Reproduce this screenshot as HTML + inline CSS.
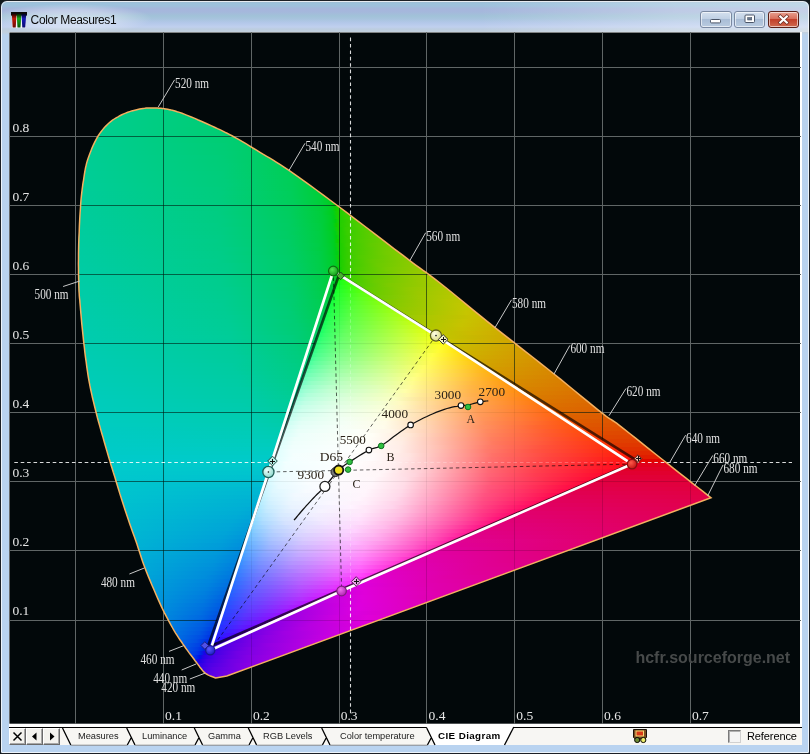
<!DOCTYPE html>
<html><head><meta charset="utf-8"><title>Color Measures1</title>
<style>
html,body{margin:0;padding:0}
#win,.tab,#ref,svg{will-change:transform}
body{width:810px;height:754px;overflow:hidden;position:relative;background:#10181c;font-family:"Liberation Sans",sans-serif}
#win{position:absolute;left:0;top:0;width:808px;height:752px;border:1px solid #1c2026;border-radius:7px 7px 2px 2px;background:linear-gradient(#a0afc3 0,#9cc2dc 2px,#9ec0dc 5px,#a6b6dc 8px,#a5b8dc 11px,#a1c2d8 15px,#a8c4de 18px,#b4c8ea 22px,#c0d0ee 26px,#bccde0 28px,#c2cfdc 31px,#b9d2ee 34px,#b9d3f0 100%);overflow:hidden}
#win:before{content:"";position:absolute;left:0;top:0;right:0;bottom:0;border:1px solid rgba(255,255,255,.75);border-radius:6px 6px 1px 1px}
#title{position:absolute;left:29.6px;top:10px;font-size:12px;line-height:18px;color:#0a0a0a;letter-spacing:-.38px;white-space:nowrap}
#glow{position:absolute;left:-10px;top:3px;width:160px;height:30px;background:radial-gradient(ellipse at center,rgba(255,255,255,.5) 0,rgba(255,255,255,.32) 40%,rgba(255,255,255,0) 72%)}
#rglow{position:absolute;right:0;top:1px;width:330px;height:30px;background:linear-gradient(to right,rgba(255,255,255,0),rgba(255,255,255,.28) 60%,rgba(255,255,255,.36))}
#icon{position:absolute;left:9.5px;top:10.5px;width:16px;height:16px}
.cb{position:absolute;top:9.8px;height:15px;width:29.5px;border:1px solid #7a89a2;border-radius:3px;box-shadow:inset 0 0 0 1px rgba(255,255,255,.6);background:linear-gradient(#d4e0ee 0,#c0d0e4 45%,#a9bdd6 50%,#b9cbe0 100%)}
#bx{background:linear-gradient(#e8a090 0,#d8705c 45%,#c2402a 50%,#d06a50 100%);border-color:#5a2018}
#client{position:absolute;left:9px;top:32px;width:792.5px;height:713px;background:#fff}
#tabbar{position:absolute;left:9px;top:727px;width:792.5px;height:18px;background:#f7f6f3;border-top:1px solid #000;box-sizing:border-box}
.sb{position:absolute;top:727.5px;width:17px;height:17px;box-sizing:border-box;background:#f3f2ee;border:1px solid;border-color:#fff #6a6a6a #6a6a6a #fff;box-shadow:inset -1px -1px 0 #a8a8a8}
.tab{position:absolute;top:730px;font-size:9.25px;line-height:12px;color:#222;white-space:nowrap}
#ref{position:absolute;left:746.5px;top:730px;font-size:11px;line-height:13px;color:#000;letter-spacing:-.1px}
#chk{position:absolute;left:728px;top:729.5px;width:13px;height:13px;background:#f4f4f4;border:1px solid;border-color:#7a7a7a #d0d0d0 #d0d0d0 #7a7a7a;box-sizing:border-box;box-shadow:inset 1px 1px 0 #b0b0b0}
</style></head><body>
<div id="win">
<div id="glow"></div>
<svg id="icon" viewBox="0 0 16 16"><rect x="1" y="2" width="14" height="14" fill="#f4f6fa"/><rect width="16" height="3.6" fill="#0a0a0a"/><defs><linearGradient id="ir" x1="0" y1="0" x2="0" y2="1"><stop offset="0" stop-color="#200"/><stop offset=".35" stop-color="#c01808"/><stop offset="1" stop-color="#6a0a04"/></linearGradient><linearGradient id="ig" x1="0" y1="0" x2="0" y2="1"><stop offset="0" stop-color="#020"/><stop offset=".35" stop-color="#18a818"/><stop offset="1" stop-color="#0a5a0a"/></linearGradient><linearGradient id="ib" x1="0" y1="0" x2="0" y2="1"><stop offset="0" stop-color="#002"/><stop offset=".35" stop-color="#1418b8"/><stop offset="1" stop-color="#080a70"/></linearGradient></defs><path d="M.8 2h4.8l-.9 13.4h-3z" fill="url(#ir)"/><path d="M5.6 2h4.8l-.9 13.4h-3z" fill="url(#ig)"/><path d="M10.4 2h4.8l-.9 13.4h-3z" fill="url(#ib)"/></svg>
<div id="rglow"></div>
<div id="title">Color Measures1</div>
<div class="cb" style="left:699px"><svg width="30" height="16" style="position:absolute;left:0;top:0"><rect x="9.5" y="7.5" width="10" height="3.4" rx="1" fill="#fff" stroke="#4a5568" stroke-width="1"/></svg></div>
<div class="cb" style="left:732.8px"><svg width="30" height="16" style="position:absolute;left:0;top:0"><rect x="10" y="3" width="9.5" height="7.5" rx="1" fill="#fff" stroke="#4a5568" stroke-width="1"/><rect x="12.7" y="5.6" width="4" height="2.4" fill="#6a7a90" stroke="#4a5568" stroke-width=".6"/></svg></div>
<div class="cb" id="bx" style="left:766.8px"><svg width="30" height="16" style="position:absolute;left:0;top:0"><path d="M11.3 4.5l6.5 6M17.8 4.5l-6.5 6" stroke="#6a2a20" stroke-width="3.6" stroke-linecap="square"/><path d="M11.3 4.5l6.5 6M17.8 4.5l-6.5 6" stroke="#fff" stroke-width="2.2" stroke-linecap="square"/></svg></div>
</div>
<div id="client"></div>
<div id="tabbar"></div>
<svg width="792" height="692" viewBox="9 32 792 692" style="position:absolute;left:9px;top:32px;display:block">
<defs>
<clipPath id="cl"><path d="M215.7 678.0 L214.9 677.7 L213.8 677.3 L212.5 676.8 L211.0 676.2 L209.5 675.6 L207.9 674.8 L206.5 674.0 L205.2 673.1 L204.1 672.1 L203.0 671.0 L202.0 669.8 L201.0 668.5 L199.9 667.2 L198.9 665.7 L197.7 664.1 L196.5 662.5 L195.1 660.7 L193.7 658.8 L192.2 656.8 L190.6 654.7 L189.0 652.6 L187.4 650.4 L185.8 648.2 L184.3 646.0 L182.8 643.9 L181.4 641.8 L179.9 639.7 L178.5 637.6 L177.1 635.4 L175.6 633.1 L174.1 630.6 L172.6 628.0 L171.0 625.2 L169.5 622.4 L167.9 619.4 L166.3 616.3 L164.6 613.1 L163.0 609.8 L161.3 606.3 L159.6 602.6 L157.8 598.6 L155.9 594.3 L154.0 589.8 L152.0 585.2 L150.1 580.6 L148.2 576.1 L146.5 571.9 L145.0 568.0 L143.7 564.6 L142.6 561.6 L141.7 558.8 L140.8 556.1 L140.0 553.5 L139.1 550.7 L138.1 547.7 L137.0 544.3 L135.7 540.6 L134.3 536.6 L132.8 532.5 L131.3 528.2 L129.7 523.7 L128.2 519.2 L126.6 514.5 L125.0 509.8 L123.4 504.8 L121.7 499.4 L119.9 493.9 L118.2 488.2 L116.5 482.7 L114.9 477.3 L113.3 472.4 L112.0 468.0 L110.8 464.2 L109.9 461.0 L109.0 458.2 L108.2 455.5 L107.5 453.0 L106.7 450.4 L105.9 447.6 L105.0 444.5 L104.0 441.0 L103.0 437.4 L101.9 433.7 L100.8 429.9 L99.7 425.9 L98.6 422.0 L97.5 418.0 L96.5 414.0 L95.5 410.0 L94.5 406.0 L93.5 401.9 L92.5 397.8 L91.6 393.7 L90.7 389.5 L89.8 385.2 L89.0 380.8 L88.2 376.3 L87.5 371.7 L86.8 366.9 L86.2 362.2 L85.5 357.4 L84.9 352.6 L84.4 347.8 L83.8 343.1 L83.3 338.4 L82.8 333.5 L82.3 328.6 L81.8 323.8 L81.4 319.1 L81.0 314.6 L80.6 310.3 L80.3 306.5 L80.0 303.2 L79.8 300.4 L79.5 298.0 L79.3 295.7 L79.2 293.5 L79.0 291.0 L78.9 288.3 L78.8 285.0 L78.7 281.3 L78.6 277.2 L78.5 273.0 L78.5 268.5 L78.4 263.8 L78.5 259.0 L78.5 254.0 L78.6 249.0 L78.7 243.7 L78.9 237.9 L79.2 232.0 L79.4 225.9 L79.7 219.9 L80.0 214.2 L80.4 208.8 L80.7 204.0 L81.0 199.7 L81.4 195.9 L81.8 192.4 L82.2 189.1 L82.6 186.0 L83.0 183.1 L83.5 180.3 L83.9 177.5 L84.3 174.8 L84.7 172.4 L85.1 170.1 L85.5 167.9 L86.0 165.8 L86.5 163.6 L87.1 161.4 L87.9 159.0 L88.8 156.4 L89.8 153.7 L90.9 150.9 L92.0 148.1 L93.2 145.3 L94.5 142.6 L95.8 140.1 L97.1 137.7 L98.4 135.5 L99.8 133.4 L101.2 131.5 L102.7 129.6 L104.2 127.8 L105.8 126.1 L107.4 124.5 L109.0 123.0 L110.7 121.6 L112.5 120.2 L114.3 119.0 L116.1 117.8 L118.0 116.8 L119.9 115.7 L121.8 114.8 L123.7 113.9 L125.6 113.1 L127.7 112.3 L129.7 111.6 L131.7 110.9 L133.8 110.4 L135.8 109.9 L137.7 109.4 L139.6 109.0 L141.4 108.7 L143.1 108.4 L144.7 108.3 L146.4 108.1 L148.0 108.1 L149.6 108.0 L151.2 108.0 L152.8 108.0 L154.4 108.0 L156.0 108.0 L157.6 108.1 L159.2 108.2 L160.8 108.3 L162.5 108.5 L164.2 108.7 L166.0 109.0 L167.8 109.3 L169.6 109.7 L171.3 110.1 L173.2 110.5 L175.1 111.0 L177.2 111.7 L179.5 112.4 L182.0 113.3 L184.8 114.4 L187.9 115.6 L191.3 117.0 L194.8 118.4 L198.3 120.0 L201.8 121.5 L205.2 123.0 L208.5 124.5 L211.6 125.9 L214.6 127.2 L217.5 128.6 L220.4 129.9 L223.3 131.3 L226.2 132.8 L229.3 134.3 L232.4 136.0 L235.7 137.8 L239.0 139.7 L242.4 141.7 L245.9 143.7 L249.4 145.8 L252.9 148.0 L256.5 150.1 L260.0 152.3 L263.4 154.4 L266.7 156.3 L269.9 158.2 L273.2 160.1 L276.6 162.3 L280.3 164.6 L284.4 167.3 L289.0 170.4 L294.0 173.9 L299.3 177.6 L304.9 181.6 L310.8 185.9 L317.1 190.5 L323.7 195.4 L330.6 200.5 L338.0 206.0 L346.2 212.1 L355.3 219.1 L365.1 226.5 L375.1 234.1 L384.9 241.6 L394.2 248.8 L402.7 255.2 L409.8 260.6 L415.4 264.8 L419.7 267.9 L423.1 270.4 L426.0 272.4 L428.7 274.4 L431.7 276.6 L435.3 279.4 L440.0 283.0 L445.7 287.5 L451.9 292.5 L458.6 298.0 L465.7 303.8 L473.0 309.8 L480.4 315.8 L487.8 321.8 L495.0 327.6 L502.3 333.4 L509.7 339.2 L517.3 345.2 L524.9 351.1 L532.5 357.0 L539.9 362.9 L547.1 368.5 L554.0 374.0 L560.8 379.4 L567.6 385.0 L574.3 390.5 L580.8 395.8 L587.0 400.9 L592.8 405.6 L598.0 409.8 L602.5 413.4 L606.0 416.1 L608.4 417.8 L610.0 418.9 L611.3 419.7 L612.6 420.5 L614.3 421.6 L616.6 423.2 L620.0 425.8 L624.5 429.3 L629.7 433.5 L635.6 438.1 L641.8 443.1 L648.3 448.3 L654.8 453.5 L661.1 458.5 L667.0 463.2 L672.9 467.9 L679.2 472.9 L685.7 477.9 L691.9 482.8 L697.9 487.5 L703.2 491.6 L707.6 495.1 L711.0 497.8 L226.8 676.0Z"/></clipPath>
<clipPath id="ct"><path d="M339.2 274.5 L637.7 461.1 L207.5 647.6Z"/></clipPath>
<linearGradient id="o0" gradientUnits="userSpaceOnUse" x1="128.6" x2="178.0" y1="0" y2="0"><stop offset="0" stop-color="#00cd88"/><stop offset="1" stop-color="#00cd7e"/></linearGradient><linearGradient id="o1" gradientUnits="userSpaceOnUse" x1="118.4" x2="189.4" y1="0" y2="0"><stop offset="0" stop-color="#00cd8a"/><stop offset="1" stop-color="#00cd7b"/></linearGradient><linearGradient id="o2" gradientUnits="userSpaceOnUse" x1="111.2" x2="199.0" y1="0" y2="0"><stop offset="0" stop-color="#00cd8c"/><stop offset="1" stop-color="#00cd79"/></linearGradient><linearGradient id="o3" gradientUnits="userSpaceOnUse" x1="106.0" x2="208.2" y1="0" y2="0"><stop offset="0" stop-color="#00cd8d"/><stop offset="1" stop-color="#00cd77"/></linearGradient><linearGradient id="o4" gradientUnits="userSpaceOnUse" x1="102.0" x2="217.0" y1="0" y2="0"><stop offset="0" stop-color="#00cd8e"/><stop offset="1" stop-color="#00cd75"/></linearGradient><linearGradient id="o5" gradientUnits="userSpaceOnUse" x1="98.6" x2="225.6" y1="0" y2="0"><stop offset="0" stop-color="#00cd8f"/><stop offset="1" stop-color="#00cd72"/></linearGradient><linearGradient id="o6" gradientUnits="userSpaceOnUse" x1="95.8" x2="233.5" y1="0" y2="0"><stop offset="0" stop-color="#00cd90"/><stop offset=".941" stop-color="#00cd73"/><stop offset="1" stop-color="#00cd70"/></linearGradient><linearGradient id="o7" gradientUnits="userSpaceOnUse" x1="93.4" x2="240.8" y1="0" y2="0"><stop offset="0" stop-color="#00cd91"/><stop offset=".946" stop-color="#00cd71"/><stop offset="1" stop-color="#00cd6d"/></linearGradient><linearGradient id="o8" gradientUnits="userSpaceOnUse" x1="91.3" x2="247.6" y1="0" y2="0"><stop offset="0" stop-color="#00cd92"/><stop offset=".897" stop-color="#00cd72"/><stop offset="1" stop-color="#00cd6b"/></linearGradient><linearGradient id="o9" gradientUnits="userSpaceOnUse" x1="89.5" x2="254.3" y1="0" y2="0"><stop offset="0" stop-color="#00cd92"/><stop offset=".805" stop-color="#00cd76"/><stop offset="1" stop-color="#00cd69"/></linearGradient><linearGradient id="o10" gradientUnits="userSpaceOnUse" x1="87.8" x2="260.9" y1="0" y2="0"><stop offset="0" stop-color="#00cd93"/><stop offset=".791" stop-color="#00cd75"/><stop offset="1" stop-color="#00cd66"/></linearGradient><linearGradient id="o11" gradientUnits="userSpaceOnUse" x1="86.3" x2="267.5" y1="0" y2="0"><stop offset="0" stop-color="#00cd94"/><stop offset=".778" stop-color="#00cd75"/><stop offset="1" stop-color="#00cd63"/></linearGradient><linearGradient id="o12" gradientUnits="userSpaceOnUse" x1="84.9" x2="274.3" y1="0" y2="0"><stop offset="0" stop-color="#00cd94"/><stop offset=".702" stop-color="#00cd79"/><stop offset="1" stop-color="#00cd60"/></linearGradient><linearGradient id="o13" gradientUnits="userSpaceOnUse" x1="83.7" x2="280.8" y1="0" y2="0"><stop offset="0" stop-color="#00cd95"/><stop offset=".714" stop-color="#00cd77"/><stop offset="1" stop-color="#00cd5c"/></linearGradient><linearGradient id="o14" gradientUnits="userSpaceOnUse" x1="82.7" x2="287.0" y1="0" y2="0"><stop offset="0" stop-color="#00cd96"/><stop offset=".706" stop-color="#00cd77"/><stop offset="1" stop-color="#00ce58"/></linearGradient><linearGradient id="o15" gradientUnits="userSpaceOnUse" x1="82.0" x2="292.9" y1="0" y2="0"><stop offset="0" stop-color="#00cd96"/><stop offset=".679" stop-color="#00cd78"/><stop offset="1" stop-color="#00ce55"/></linearGradient><linearGradient id="o16" gradientUnits="userSpaceOnUse" x1="81.3" x2="298.6" y1="0" y2="0"><stop offset="0" stop-color="#00cd97"/><stop offset=".648" stop-color="#00cd7a"/><stop offset=".963" stop-color="#00ce57"/><stop offset="1" stop-color="#00ce50"/></linearGradient><linearGradient id="o17" gradientUnits="userSpaceOnUse" x1="80.7" x2="304.2" y1="0" y2="0"><stop offset="0" stop-color="#00cd97"/><stop offset=".625" stop-color="#00cd7b"/><stop offset=".929" stop-color="#00ce59"/><stop offset="1" stop-color="#00ce4b"/></linearGradient><linearGradient id="o18" gradientUnits="userSpaceOnUse" x1="80.0" x2="309.8" y1="0" y2="0"><stop offset="0" stop-color="#00cd98"/><stop offset=".632" stop-color="#00cd7a"/><stop offset=".912" stop-color="#00ce59"/><stop offset="1" stop-color="#00ce46"/></linearGradient><linearGradient id="o19" gradientUnits="userSpaceOnUse" x1="79.5" x2="315.3" y1="0" y2="0"><stop offset="0" stop-color="#00cd99"/><stop offset=".627" stop-color="#00cd7a"/><stop offset=".898" stop-color="#00ce58"/><stop offset="1" stop-color="#00ce3f"/></linearGradient><linearGradient id="o20" gradientUnits="userSpaceOnUse" x1="78.9" x2="320.8" y1="0" y2="0"><stop offset="0" stop-color="#00cd99"/><stop offset=".583" stop-color="#00cd7d"/><stop offset=".883" stop-color="#00ce58"/><stop offset="1" stop-color="#00ce37"/></linearGradient><linearGradient id="o21" gradientUnits="userSpaceOnUse" x1="78.5" x2="326.2" y1="0" y2="0"><stop offset="0" stop-color="#00cc9a"/><stop offset=".581" stop-color="#00cd7d"/><stop offset=".855" stop-color="#00ce5b"/><stop offset=".984" stop-color="#00ce36"/><stop offset="1" stop-color="#00ce2d"/></linearGradient><linearGradient id="o22" gradientUnits="userSpaceOnUse" x1="78.1" x2="331.6" y1="0" y2="0"><stop offset="0" stop-color="#00cc9a"/><stop offset=".556" stop-color="#00cd7e"/><stop offset=".841" stop-color="#00ce5a"/><stop offset=".952" stop-color="#00ce3b"/><stop offset="1" stop-color="#00ce1d"/></linearGradient><linearGradient id="o23" gradientUnits="userSpaceOnUse" x1="77.8" x2="337.0" y1="0" y2="0"><stop offset="0" stop-color="#00cc9b"/><stop offset=".554" stop-color="#00cd7e"/><stop offset=".831" stop-color="#00ce5a"/><stop offset=".938" stop-color="#00ce39"/><stop offset=".969" stop-color="#00ce27"/><stop offset=".985" stop-color="#00ce17"/><stop offset="1" stop-color="#19ce00"/></linearGradient><linearGradient id="o24" gradientUnits="userSpaceOnUse" x1="77.5" x2="342.3" y1="0" y2="0"><stop offset="0" stop-color="#00cc9b"/><stop offset=".545" stop-color="#00cd7f"/><stop offset=".818" stop-color="#00ce5a"/><stop offset=".924" stop-color="#00ce38"/><stop offset=".955" stop-color="#00ce24"/><stop offset=".970" stop-color="#00ce10"/><stop offset=".985" stop-color="#1fce00"/><stop offset="1" stop-color="#2cce00"/></linearGradient><linearGradient id="o25" gradientUnits="userSpaceOnUse" x1="77.2" x2="347.7" y1="0" y2="0"><stop offset="0" stop-color="#00cc9c"/><stop offset=".544" stop-color="#00cd7f"/><stop offset=".794" stop-color="#00cd5c"/><stop offset=".912" stop-color="#00ce36"/><stop offset=".941" stop-color="#00ce20"/><stop offset=".956" stop-color="#0cce00"/><stop offset=".971" stop-color="#24ce00"/><stop offset="1" stop-color="#39cd00"/></linearGradient><linearGradient id="o26" gradientUnits="userSpaceOnUse" x1="77.0" x2="352.9" y1="0" y2="0"><stop offset="0" stop-color="#00cc9c"/><stop offset=".507" stop-color="#00cd82"/><stop offset=".768" stop-color="#00cd5f"/><stop offset=".884" stop-color="#00ce3c"/><stop offset=".928" stop-color="#00ce1c"/><stop offset=".942" stop-color="#15ce00"/><stop offset=".971" stop-color="#33ce00"/><stop offset="1" stop-color="#43cd00"/></linearGradient><linearGradient id="o27" gradientUnits="userSpaceOnUse" x1="76.8" x2="358.2" y1="0" y2="0"><stop offset="0" stop-color="#00cc9d"/><stop offset=".514" stop-color="#00cd81"/><stop offset=".757" stop-color="#00cd5f"/><stop offset=".871" stop-color="#00ce3b"/><stop offset=".900" stop-color="#00ce28"/><stop offset=".914" stop-color="#00ce17"/><stop offset=".929" stop-color="#1bce00"/><stop offset=".957" stop-color="#35ce00"/><stop offset="1" stop-color="#4bcd00"/></linearGradient><linearGradient id="o28" gradientUnits="userSpaceOnUse" x1="76.6" x2="363.5" y1="0" y2="0"><stop offset="0" stop-color="#00cc9e"/><stop offset=".514" stop-color="#00cd81"/><stop offset=".750" stop-color="#00cd5f"/><stop offset=".861" stop-color="#00ce39"/><stop offset=".889" stop-color="#00ce24"/><stop offset=".903" stop-color="#00ce0c"/><stop offset=".917" stop-color="#21ce00"/><stop offset=".972" stop-color="#47cd00"/><stop offset="1" stop-color="#53cd00"/></linearGradient><linearGradient id="o29" gradientUnits="userSpaceOnUse" x1="76.4" x2="368.7" y1="0" y2="0"><stop offset="0" stop-color="#00cc9e"/><stop offset=".479" stop-color="#00cd84"/><stop offset=".726" stop-color="#00cd62"/><stop offset=".836" stop-color="#00ce3f"/><stop offset=".877" stop-color="#00ce21"/><stop offset=".890" stop-color="#0dce00"/><stop offset=".904" stop-color="#25ce00"/><stop offset=".959" stop-color="#49cd00"/><stop offset="1" stop-color="#5acd00"/></linearGradient><linearGradient id="o30" gradientUnits="userSpaceOnUse" x1="76.2" x2="374.0" y1="0" y2="0"><stop offset="0" stop-color="#00cc9f"/><stop offset=".500" stop-color="#00cd82"/><stop offset=".730" stop-color="#00cd5f"/><stop offset=".824" stop-color="#00ce3e"/><stop offset=".865" stop-color="#00ce1e"/><stop offset=".878" stop-color="#15ce00"/><stop offset=".905" stop-color="#34ce00"/><stop offset=".986" stop-color="#5ccd00"/><stop offset="1" stop-color="#61cc00"/></linearGradient><linearGradient id="o31" gradientUnits="userSpaceOnUse" x1="76.1" x2="379.2" y1="0" y2="0"><stop offset="0" stop-color="#00cc9f"/><stop offset=".474" stop-color="#00cd84"/><stop offset=".697" stop-color="#00cd64"/><stop offset=".803" stop-color="#00ce43"/><stop offset=".842" stop-color="#00ce28"/><stop offset=".855" stop-color="#00ce16"/><stop offset=".868" stop-color="#1dce00"/><stop offset=".895" stop-color="#37ce00"/><stop offset=".974" stop-color="#5ecc00"/><stop offset="1" stop-color="#67cc00"/></linearGradient><linearGradient id="o32" gradientUnits="userSpaceOnUse" x1="75.9" x2="384.5" y1="0" y2="0"><stop offset="0" stop-color="#00cca0"/><stop offset=".468" stop-color="#00cd85"/><stop offset=".701" stop-color="#00cd61"/><stop offset=".792" stop-color="#00ce42"/><stop offset=".831" stop-color="#00ce26"/><stop offset=".844" stop-color="#00ce0f"/><stop offset=".857" stop-color="#21ce00"/><stop offset=".896" stop-color="#42cd00"/><stop offset="1" stop-color="#6ecc00"/></linearGradient><linearGradient id="o33" gradientUnits="userSpaceOnUse" x1="75.8" x2="389.7" y1="0" y2="0"><stop offset="0" stop-color="#00cca0"/><stop offset=".449" stop-color="#00cd87"/><stop offset=".679" stop-color="#00cd65"/><stop offset=".782" stop-color="#00ce41"/><stop offset=".821" stop-color="#00ce23"/><stop offset=".833" stop-color="#08ce00"/><stop offset=".846" stop-color="#25ce00"/><stop offset=".897" stop-color="#4bcd00"/><stop offset="1" stop-color="#73cc00"/></linearGradient><linearGradient id="o34" gradientUnits="userSpaceOnUse" x1="75.7" x2="394.9" y1="0" y2="0"><stop offset="0" stop-color="#00cca1"/><stop offset=".450" stop-color="#00cd86"/><stop offset=".662" stop-color="#00cd67"/><stop offset=".762" stop-color="#00ce46"/><stop offset=".800" stop-color="#00ce2c"/><stop offset=".812" stop-color="#00ce1d"/><stop offset=".825" stop-color="#18ce00"/><stop offset=".850" stop-color="#36ce00"/><stop offset=".925" stop-color="#5fcc00"/><stop offset="1" stop-color="#79cb00"/></linearGradient><linearGradient id="o35" gradientUnits="userSpaceOnUse" x1="75.6" x2="400.2" y1="0" y2="0"><stop offset="0" stop-color="#00cca2"/><stop offset=".469" stop-color="#00cd85"/><stop offset=".667" stop-color="#00cd64"/><stop offset=".765" stop-color="#00ce3e"/><stop offset=".790" stop-color="#00ce2a"/><stop offset=".802" stop-color="#00ce18"/><stop offset=".815" stop-color="#1dce00"/><stop offset=".852" stop-color="#42cd00"/><stop offset=".951" stop-color="#6fcc00"/><stop offset="1" stop-color="#7fcb00"/></linearGradient><linearGradient id="o36" gradientUnits="userSpaceOnUse" x1="75.5" x2="405.4" y1="0" y2="0"><stop offset="0" stop-color="#00cca2"/><stop offset=".439" stop-color="#00cd88"/><stop offset=".659" stop-color="#00cd64"/><stop offset=".744" stop-color="#00ce45"/><stop offset=".780" stop-color="#00ce28"/><stop offset=".793" stop-color="#00ce13"/><stop offset=".805" stop-color="#21ce00"/><stop offset=".841" stop-color="#44cd00"/><stop offset=".939" stop-color="#71cc00"/><stop offset="1" stop-color="#84cb00"/></linearGradient><linearGradient id="o37" gradientUnits="userSpaceOnUse" x1="75.5" x2="410.7" y1="0" y2="0"><stop offset="0" stop-color="#00cca3"/><stop offset=".440" stop-color="#00cd88"/><stop offset=".643" stop-color="#00cd67"/><stop offset=".726" stop-color="#00ce49"/><stop offset=".762" stop-color="#00ce30"/><stop offset=".774" stop-color="#00ce22"/><stop offset=".786" stop-color="#11ce00"/><stop offset=".798" stop-color="#28ce00"/><stop offset=".845" stop-color="#4fcd00"/><stop offset=".964" stop-color="#7fcb00"/><stop offset="1" stop-color="#8aca00"/></linearGradient><linearGradient id="o38" gradientUnits="userSpaceOnUse" x1="75.5" x2="416.0" y1="0" y2="0"><stop offset="0" stop-color="#00cca3"/><stop offset=".412" stop-color="#00cd8b"/><stop offset=".624" stop-color="#00cd6a"/><stop offset=".718" stop-color="#00ce48"/><stop offset=".753" stop-color="#00ce2e"/><stop offset=".765" stop-color="#00ce1e"/><stop offset=".776" stop-color="#18ce00"/><stop offset=".800" stop-color="#38ce00"/><stop offset=".871" stop-color="#63cc00"/><stop offset="1" stop-color="#8fca00"/></linearGradient><linearGradient id="o39" gradientUnits="userSpaceOnUse" x1="75.5" x2="421.4" y1="0" y2="0"><stop offset="0" stop-color="#00cca4"/><stop offset=".442" stop-color="#00cd88"/><stop offset=".628" stop-color="#00cd67"/><stop offset=".709" stop-color="#00ce48"/><stop offset=".744" stop-color="#00ce2c"/><stop offset=".756" stop-color="#00ce1a"/><stop offset=".767" stop-color="#1ece00"/><stop offset=".791" stop-color="#3bcd00"/><stop offset=".872" stop-color="#6acc00"/><stop offset="1" stop-color="#94ca00"/></linearGradient><linearGradient id="o40" gradientUnits="userSpaceOnUse" x1="75.5" x2="426.9" y1="0" y2="0"><stop offset="0" stop-color="#00cca5"/><stop offset=".432" stop-color="#00cd89"/><stop offset=".625" stop-color="#00cd66"/><stop offset=".705" stop-color="#00ce45"/><stop offset=".739" stop-color="#00ce25"/><stop offset=".750" stop-color="#0ace00"/><stop offset=".761" stop-color="#27ce00"/><stop offset=".795" stop-color="#48cd00"/><stop offset=".886" stop-color="#76cc00"/><stop offset="1" stop-color="#9ac900"/></linearGradient><linearGradient id="o41" gradientUnits="userSpaceOnUse" x1="75.5" x2="432.5" y1="0" y2="0"><stop offset="0" stop-color="#00cca5"/><stop offset=".416" stop-color="#00cd8b"/><stop offset=".607" stop-color="#00cd69"/><stop offset=".685" stop-color="#00ce4b"/><stop offset=".719" stop-color="#00ce31"/><stop offset=".730" stop-color="#00ce21"/><stop offset=".742" stop-color="#16ce00"/><stop offset=".753" stop-color="#2cce00"/><stop offset=".798" stop-color="#53cd00"/><stop offset=".910" stop-color="#84cb00"/><stop offset="1" stop-color="#9fc900"/></linearGradient><linearGradient id="o42" gradientUnits="userSpaceOnUse" x1="75.6" x2="437.9" y1="0" y2="0"><stop offset="0" stop-color="#00cca6"/><stop offset=".407" stop-color="#00cd8c"/><stop offset=".604" stop-color="#00cd68"/><stop offset=".681" stop-color="#00ce48"/><stop offset=".714" stop-color="#00ce2b"/><stop offset=".725" stop-color="#02ce15"/><stop offset=".736" stop-color="#23ce0a"/><stop offset=".747" stop-color="#32ce00"/><stop offset=".802" stop-color="#5dcd00"/><stop offset=".934" stop-color="#92ca00"/><stop offset="1" stop-color="#a4c900"/></linearGradient><linearGradient id="o43" gradientUnits="userSpaceOnUse" x1="75.6" x2="443.0" y1="0" y2="0"><stop offset="0" stop-color="#00cca6"/><stop offset=".391" stop-color="#00cd8e"/><stop offset=".587" stop-color="#00cd6c"/><stop offset=".674" stop-color="#00ce48"/><stop offset=".707" stop-color="#00ce29"/><stop offset=".717" stop-color="#1bce1e"/><stop offset=".739" stop-color="#36ce10"/><stop offset=".750" stop-color="#40cd00"/><stop offset=".815" stop-color="#6acc00"/><stop offset=".967" stop-color="#a1c900"/><stop offset="1" stop-color="#a9c800"/></linearGradient><linearGradient id="o44" gradientUnits="userSpaceOnUse" x1="75.7" x2="448.0" y1="0" y2="0"><stop offset="0" stop-color="#00cca7"/><stop offset=".387" stop-color="#00cd8e"/><stop offset=".570" stop-color="#00cd70"/><stop offset=".656" stop-color="#00ce4e"/><stop offset=".688" stop-color="#00ce35"/><stop offset=".699" stop-color="#0dce29"/><stop offset=".710" stop-color="#25ce25"/><stop offset=".742" stop-color="#44cd14"/><stop offset=".753" stop-color="#4bcd03"/><stop offset=".839" stop-color="#7bcb00"/><stop offset="1" stop-color="#aec800"/></linearGradient><linearGradient id="o45" gradientUnits="userSpaceOnUse" x1="75.9" x2="453.0" y1="0" y2="0"><stop offset="0" stop-color="#00cca8"/><stop offset=".404" stop-color="#00cd8d"/><stop offset=".585" stop-color="#00cd6a"/><stop offset=".660" stop-color="#00ce47"/><stop offset=".681" stop-color="#00ce34"/><stop offset=".691" stop-color="#1dce2e"/><stop offset=".723" stop-color="#41cd23"/><stop offset=".755" stop-color="#55cd0d"/><stop offset=".766" stop-color="#5ccd00"/><stop offset=".883" stop-color="#91ca00"/><stop offset="1" stop-color="#b3c800"/></linearGradient><linearGradient id="o46" gradientUnits="userSpaceOnUse" x1="76.0" x2="457.9" y1="0" y2="0"><stop offset="0" stop-color="#00cca8"/><stop offset=".389" stop-color="#00cd8f"/><stop offset=".568" stop-color="#00cd6e"/><stop offset=".642" stop-color="#00ce4e"/><stop offset=".663" stop-color="#00ce3f"/><stop offset=".684" stop-color="#26ce32"/><stop offset=".726" stop-color="#4ccd25"/><stop offset=".758" stop-color="#5fcc12"/><stop offset=".768" stop-color="#64cc00"/><stop offset=".895" stop-color="#9ac900"/><stop offset="1" stop-color="#b8c700"/></linearGradient><linearGradient id="o47" gradientUnits="userSpaceOnUse" x1="76.3" x2="462.8" y1="0" y2="0"><stop offset="0" stop-color="#00cca9"/><stop offset=".392" stop-color="#00cd8f"/><stop offset=".567" stop-color="#00cd6d"/><stop offset=".639" stop-color="#00ce4c"/><stop offset=".660" stop-color="#06ce3b"/><stop offset=".670" stop-color="#24ce38"/><stop offset=".711" stop-color="#4ccd2d"/><stop offset=".763" stop-color="#68cc14"/><stop offset=".773" stop-color="#6dcc03"/><stop offset=".897" stop-color="#a0c900"/><stop offset="1" stop-color="#bdc700"/></linearGradient><linearGradient id="o48" gradientUnits="userSpaceOnUse" x1="76.6" x2="467.7" y1="0" y2="0"><stop offset="0" stop-color="#00cca9"/><stop offset=".378" stop-color="#00cd91"/><stop offset=".551" stop-color="#00cd71"/><stop offset=".622" stop-color="#00ce53"/><stop offset=".643" stop-color="#00ce44"/><stop offset=".653" stop-color="#1cce3f"/><stop offset=".684" stop-color="#41cd37"/><stop offset=".755" stop-color="#6ccc1e"/><stop offset=".786" stop-color="#7acb00"/><stop offset=".939" stop-color="#b2c800"/><stop offset="1" stop-color="#c2c600"/></linearGradient><linearGradient id="o49" gradientUnits="userSpaceOnUse" x1="77.0" x2="472.6" y1="0" y2="0"><stop offset="0" stop-color="#00ccaa"/><stop offset=".364" stop-color="#00cd93"/><stop offset=".535" stop-color="#00cd74"/><stop offset=".616" stop-color="#00ce53"/><stop offset=".626" stop-color="#00ce4c"/><stop offset=".636" stop-color="#0bce44"/><stop offset=".646" stop-color="#26ce42"/><stop offset=".687" stop-color="#4dcd39"/><stop offset=".768" stop-color="#78cb1b"/><stop offset=".778" stop-color="#7ccb13"/><stop offset=".788" stop-color="#81cb00"/><stop offset=".960" stop-color="#bdc700"/><stop offset="1" stop-color="#c6c500"/></linearGradient><linearGradient id="o50" gradientUnits="userSpaceOnUse" x1="77.3" x2="477.5" y1="0" y2="0"><stop offset="0" stop-color="#00ccab"/><stop offset=".370" stop-color="#00cd92"/><stop offset=".530" stop-color="#00cd75"/><stop offset=".610" stop-color="#00ce53"/><stop offset=".620" stop-color="#00ce4c"/><stop offset=".630" stop-color="#1dce47"/><stop offset=".660" stop-color="#42cd41"/><stop offset=".750" stop-color="#77cb28"/><stop offset=".780" stop-color="#84cb17"/><stop offset=".800" stop-color="#8cca00"/><stop offset=".970" stop-color="#c4c600"/><stop offset="1" stop-color="#c8c100"/></linearGradient><linearGradient id="o51" gradientUnits="userSpaceOnUse" x1="77.7" x2="482.4" y1="0" y2="0"><stop offset="0" stop-color="#00ccab"/><stop offset=".366" stop-color="#00cd93"/><stop offset=".525" stop-color="#00cd76"/><stop offset=".604" stop-color="#00ce53"/><stop offset=".614" stop-color="#0ece4c"/><stop offset=".624" stop-color="#27cd4b"/><stop offset=".663" stop-color="#4ecd43"/><stop offset=".762" stop-color="#82cb25"/><stop offset=".792" stop-color="#8eca11"/><stop offset=".802" stop-color="#92ca00"/><stop offset=".960" stop-color="#c6c500"/><stop offset="1" stop-color="#c9bd00"/></linearGradient><linearGradient id="o52" gradientUnits="userSpaceOnUse" x1="78.0" x2="487.3" y1="0" y2="0"><stop offset="0" stop-color="#00ccac"/><stop offset=".373" stop-color="#00cd93"/><stop offset=".529" stop-color="#00cd73"/><stop offset=".598" stop-color="#00ce53"/><stop offset=".608" stop-color="#1fce50"/><stop offset=".637" stop-color="#43cd4a"/><stop offset=".716" stop-color="#74cb39"/><stop offset=".784" stop-color="#91ca1d"/><stop offset=".794" stop-color="#95ca16"/><stop offset=".804" stop-color="#99ca05"/><stop offset=".853" stop-color="#acc800"/><stop offset=".961" stop-color="#c8c100"/><stop offset="1" stop-color="#cbba00"/></linearGradient><linearGradient id="o53" gradientUnits="userSpaceOnUse" x1="78.4" x2="492.3" y1="0" y2="0"><stop offset="0" stop-color="#00ccad"/><stop offset=".359" stop-color="#00cd95"/><stop offset=".515" stop-color="#00cd77"/><stop offset=".583" stop-color="#00ce5a"/><stop offset=".602" stop-color="#28cd53"/><stop offset=".641" stop-color="#4fcd4c"/><stop offset=".738" stop-color="#84cb35"/><stop offset=".796" stop-color="#9cc919"/><stop offset=".816" stop-color="#a3c900"/><stop offset=".932" stop-color="#c7c300"/><stop offset="1" stop-color="#ccb600"/></linearGradient><linearGradient id="o54" gradientUnits="userSpaceOnUse" x1="78.7" x2="497.3" y1="0" y2="0"><stop offset="0" stop-color="#00ccad"/><stop offset=".362" stop-color="#00cd95"/><stop offset=".524" stop-color="#00cd73"/><stop offset=".571" stop-color="#00cd5d"/><stop offset=".600" stop-color="#35cd55"/><stop offset=".657" stop-color="#62cc4b"/><stop offset=".771" stop-color="#98c92b"/><stop offset=".810" stop-color="#a7c911"/><stop offset=".819" stop-color="#aac800"/><stop offset=".914" stop-color="#c7c300"/><stop offset="1" stop-color="#cdb200"/></linearGradient><linearGradient id="o55" gradientUnits="userSpaceOnUse" x1="79.1" x2="502.3" y1="0" y2="0"><stop offset="0" stop-color="#00ccae"/><stop offset=".358" stop-color="#00cd96"/><stop offset=".519" stop-color="#00cd74"/><stop offset=".566" stop-color="#00cd5e"/><stop offset=".575" stop-color="#1fcd5b"/><stop offset=".594" stop-color="#3bcd58"/><stop offset=".651" stop-color="#66cc4e"/><stop offset=".774" stop-color="#9fc92d"/><stop offset=".811" stop-color="#adc816"/><stop offset=".821" stop-color="#b1c800"/><stop offset=".906" stop-color="#c8c000"/><stop offset="1" stop-color="#ceae00"/></linearGradient><linearGradient id="o56" gradientUnits="userSpaceOnUse" x1="79.5" x2="507.3" y1="0" y2="0"><stop offset="0" stop-color="#00ccaf"/><stop offset=".355" stop-color="#00cd97"/><stop offset=".514" stop-color="#00cd75"/><stop offset=".551" stop-color="#00cd64"/><stop offset=".570" stop-color="#29cd5e"/><stop offset=".607" stop-color="#51cc58"/><stop offset=".710" stop-color="#8bca43"/><stop offset=".794" stop-color="#adc826"/><stop offset=".822" stop-color="#b7c70e"/><stop offset=".832" stop-color="#bbc700"/><stop offset=".916" stop-color="#cbba00"/><stop offset="1" stop-color="#cfaa00"/></linearGradient><linearGradient id="o57" gradientUnits="userSpaceOnUse" x1="79.9" x2="512.4" y1="0" y2="0"><stop offset="0" stop-color="#00ccaf"/><stop offset=".343" stop-color="#00cd99"/><stop offset=".491" stop-color="#00cd7c"/><stop offset=".546" stop-color="#00cd64"/><stop offset=".556" stop-color="#22cd62"/><stop offset=".583" stop-color="#46cd5e"/><stop offset=".667" stop-color="#7ccb4f"/><stop offset=".787" stop-color="#b0c82d"/><stop offset=".824" stop-color="#bec713"/><stop offset=".833" stop-color="#c1c600"/><stop offset="1" stop-color="#d1a600"/></linearGradient><linearGradient id="o58" gradientUnits="userSpaceOnUse" x1="80.3" x2="517.5" y1="0" y2="0"><stop offset="0" stop-color="#00ccb0"/><stop offset=".339" stop-color="#00cc9a"/><stop offset=".486" stop-color="#00cd7d"/><stop offset=".532" stop-color="#00cd6a"/><stop offset=".550" stop-color="#2bcd64"/><stop offset=".587" stop-color="#53cc5f"/><stop offset=".688" stop-color="#8dca4d"/><stop offset=".798" stop-color="#bac72a"/><stop offset=".826" stop-color="#c4c617"/><stop offset=".835" stop-color="#c6c507"/><stop offset=".853" stop-color="#c8c000"/><stop offset="1" stop-color="#d2a300"/></linearGradient><linearGradient id="o59" gradientUnits="userSpaceOnUse" x1="80.8" x2="522.6" y1="0" y2="0"><stop offset="0" stop-color="#00ccb1"/><stop offset=".336" stop-color="#00cc9b"/><stop offset=".482" stop-color="#00cd7d"/><stop offset=".527" stop-color="#00cd6a"/><stop offset=".536" stop-color="#24cd68"/><stop offset=".573" stop-color="#50cc63"/><stop offset=".664" stop-color="#88ca54"/><stop offset=".791" stop-color="#bdc731"/><stop offset=".827" stop-color="#c7c21a"/><stop offset=".845" stop-color="#c9bd00"/><stop offset="1" stop-color="#d29f00"/></linearGradient><linearGradient id="o60" gradientUnits="userSpaceOnUse" x1="81.3" x2="527.7" y1="0" y2="0"><stop offset="0" stop-color="#00ccb1"/><stop offset=".339" stop-color="#00cc9b"/><stop offset=".482" stop-color="#00cd7d"/><stop offset=".518" stop-color="#00cd6d"/><stop offset=".527" stop-color="#25cd6c"/><stop offset=".554" stop-color="#48cd68"/><stop offset=".643" stop-color="#84ca5a"/><stop offset=".786" stop-color="#c2c636"/><stop offset=".830" stop-color="#cabd1b"/><stop offset=".848" stop-color="#cbb800"/><stop offset="1" stop-color="#d39b00"/></linearGradient><linearGradient id="o61" gradientUnits="userSpaceOnUse" x1="81.7" x2="532.9" y1="0" y2="0"><stop offset="0" stop-color="#00ccb2"/><stop offset=".336" stop-color="#00cc9c"/><stop offset=".478" stop-color="#00cd7e"/><stop offset=".504" stop-color="#00cd72"/><stop offset=".522" stop-color="#2ecd6e"/><stop offset=".558" stop-color="#55cc6a"/><stop offset=".646" stop-color="#8cca5c"/><stop offset=".788" stop-color="#c7c437"/><stop offset=".841" stop-color="#ccb515"/><stop offset=".850" stop-color="#cdb300"/><stop offset="1" stop-color="#d49700"/></linearGradient><linearGradient id="o62" gradientUnits="userSpaceOnUse" x1="82.2" x2="538.0" y1="0" y2="0"><stop offset="0" stop-color="#00ccb3"/><stop offset=".342" stop-color="#00cc9c"/><stop offset=".474" stop-color="#00cd7f"/><stop offset=".500" stop-color="#04cd73"/><stop offset=".509" stop-color="#27cd72"/><stop offset=".535" stop-color="#4acc6f"/><stop offset=".623" stop-color="#86ca62"/><stop offset=".763" stop-color="#c5c643"/><stop offset=".833" stop-color="#cdb31f"/><stop offset=".860" stop-color="#cfac00"/><stop offset="1" stop-color="#d59400"/></linearGradient><linearGradient id="o63" gradientUnits="userSpaceOnUse" x1="82.7" x2="543.1" y1="0" y2="0"><stop offset="0" stop-color="#00ccb4"/><stop offset=".339" stop-color="#00cc9d"/><stop offset=".470" stop-color="#00cd80"/><stop offset=".487" stop-color="#00cd78"/><stop offset=".496" stop-color="#1ecd76"/><stop offset=".513" stop-color="#3dcd74"/><stop offset=".565" stop-color="#6bcb6d"/><stop offset=".704" stop-color="#b3c754"/><stop offset=".765" stop-color="#c8c143"/><stop offset=".843" stop-color="#cfac1b"/><stop offset=".861" stop-color="#d0a700"/><stop offset="1" stop-color="#d69000"/></linearGradient><linearGradient id="o64" gradientUnits="userSpaceOnUse" x1="83.3" x2="548.2" y1="0" y2="0"><stop offset="0" stop-color="#00ccb4"/><stop offset=".319" stop-color="#00cca0"/><stop offset=".457" stop-color="#00cd84"/><stop offset=".474" stop-color="#00cd7d"/><stop offset=".483" stop-color="#0fcd7a"/><stop offset=".491" stop-color="#2acd79"/><stop offset=".526" stop-color="#54cc74"/><stop offset=".612" stop-color="#8dca68"/><stop offset=".741" stop-color="#c6c34d"/><stop offset=".845" stop-color="#d0a71d"/><stop offset=".853" stop-color="#d1a515"/><stop offset=".862" stop-color="#d1a300"/><stop offset="1" stop-color="#d68c00"/></linearGradient><linearGradient id="o65" gradientUnits="userSpaceOnUse" x1="83.8" x2="553.2" y1="0" y2="0"><stop offset="0" stop-color="#00ccb5"/><stop offset=".316" stop-color="#00cca1"/><stop offset=".453" stop-color="#00cd85"/><stop offset=".470" stop-color="#00cd7e"/><stop offset=".479" stop-color="#21cd7c"/><stop offset=".504" stop-color="#49cc79"/><stop offset=".573" stop-color="#7dca70"/><stop offset=".718" stop-color="#c5c556"/><stop offset=".838" stop-color="#d1a424"/><stop offset=".863" stop-color="#d39e0d"/><stop offset=".872" stop-color="#d39c00"/><stop offset="1" stop-color="#d78800"/></linearGradient><linearGradient id="o66" gradientUnits="userSpaceOnUse" x1="84.4" x2="558.2" y1="0" y2="0"><stop offset="0" stop-color="#00ccb6"/><stop offset=".322" stop-color="#00cca1"/><stop offset=".449" stop-color="#00cd86"/><stop offset=".458" stop-color="#00cd83"/><stop offset=".475" stop-color="#2ccd7f"/><stop offset=".508" stop-color="#56cc7b"/><stop offset=".593" stop-color="#90c970"/><stop offset=".712" stop-color="#c6c359"/><stop offset=".839" stop-color="#d2a025"/><stop offset=".864" stop-color="#d49a11"/><stop offset=".873" stop-color="#d49800"/><stop offset="1" stop-color="#d88500"/></linearGradient><linearGradient id="o67" gradientUnits="userSpaceOnUse" x1="85.0" x2="563.2" y1="0" y2="0"><stop offset="0" stop-color="#00ccb7"/><stop offset=".325" stop-color="#00cca2"/><stop offset=".450" stop-color="#00cd86"/><stop offset=".467" stop-color="#2dcd82"/><stop offset=".500" stop-color="#57cc7e"/><stop offset=".583" stop-color="#90c974"/><stop offset=".700" stop-color="#c7c25e"/><stop offset=".842" stop-color="#d39b26"/><stop offset=".867" stop-color="#d59513"/><stop offset=".875" stop-color="#d59300"/><stop offset="1" stop-color="#d88100"/></linearGradient><linearGradient id="o68" gradientUnits="userSpaceOnUse" x1="85.7" x2="568.2" y1="0" y2="0"><stop offset="0" stop-color="#00ccb7"/><stop offset=".314" stop-color="#00cca4"/><stop offset=".438" stop-color="#00cd8a"/><stop offset=".446" stop-color="#00cd87"/><stop offset=".455" stop-color="#26cd86"/><stop offset=".479" stop-color="#4ccc83"/><stop offset=".554" stop-color="#86ca7a"/><stop offset=".686" stop-color="#c7c263"/><stop offset=".843" stop-color="#d49627"/><stop offset=".876" stop-color="#d68f0c"/><stop offset=".884" stop-color="#d68d00"/><stop offset="1" stop-color="#d97d00"/></linearGradient><linearGradient id="o69" gradientUnits="userSpaceOnUse" x1="86.4" x2="573.1" y1="0" y2="0"><stop offset="0" stop-color="#00ccb8"/><stop offset=".311" stop-color="#00cca5"/><stop offset=".426" stop-color="#00cd8e"/><stop offset=".434" stop-color="#00cd8b"/><stop offset=".451" stop-color="#30cd88"/><stop offset=".484" stop-color="#59cc85"/><stop offset=".566" stop-color="#93c97b"/><stop offset=".672" stop-color="#c6c268"/><stop offset=".852" stop-color="#d69024"/><stop offset=".877" stop-color="#d78a10"/><stop offset=".885" stop-color="#d78900"/><stop offset="1" stop-color="#da7a00"/></linearGradient><linearGradient id="o70" gradientUnits="userSpaceOnUse" x1="87.2" x2="578.0" y1="0" y2="0"><stop offset="0" stop-color="#00ccb9"/><stop offset=".317" stop-color="#00cca6"/><stop offset=".431" stop-color="#00cd8d"/><stop offset=".439" stop-color="#29cd8c"/><stop offset=".463" stop-color="#4ecc8a"/><stop offset=".528" stop-color="#83ca82"/><stop offset=".650" stop-color="#c5c570"/><stop offset=".854" stop-color="#d78c25"/><stop offset=".878" stop-color="#d88614"/><stop offset=".894" stop-color="#d88300"/><stop offset="1" stop-color="#da7600"/></linearGradient><linearGradient id="o71" gradientUnits="userSpaceOnUse" x1="88.0" x2="582.8" y1="0" y2="0"><stop offset="0" stop-color="#00ccba"/><stop offset=".323" stop-color="#00cca6"/><stop offset=".419" stop-color="#00cd91"/><stop offset=".427" stop-color="#1fcd90"/><stop offset=".444" stop-color="#40cc8e"/><stop offset=".492" stop-color="#70cb89"/><stop offset=".605" stop-color="#b5c67a"/><stop offset=".653" stop-color="#c8bf6f"/><stop offset=".855" stop-color="#d78726"/><stop offset=".887" stop-color="#d9800d"/><stop offset=".895" stop-color="#d97f00"/><stop offset="1" stop-color="#db7200"/></linearGradient><linearGradient id="o72" gradientUnits="userSpaceOnUse" x1="88.9" x2="587.7" y1="0" y2="0"><stop offset="0" stop-color="#00ccbb"/><stop offset=".320" stop-color="#00cca7"/><stop offset=".408" stop-color="#00cd95"/><stop offset=".416" stop-color="#0fcd93"/><stop offset=".424" stop-color="#2ccc92"/><stop offset=".456" stop-color="#59cb8f"/><stop offset=".544" stop-color="#9ac885"/><stop offset=".632" stop-color="#c6c277"/><stop offset=".840" stop-color="#d7862f"/><stop offset=".888" stop-color="#d97c11"/><stop offset=".896" stop-color="#d97a00"/><stop offset="1" stop-color="#db6e00"/></linearGradient><linearGradient id="o73" gradientUnits="userSpaceOnUse" x1="89.8" x2="592.6" y1="0" y2="0"><stop offset="0" stop-color="#00ccbc"/><stop offset=".317" stop-color="#00cca9"/><stop offset=".405" stop-color="#00cd97"/><stop offset=".413" stop-color="#24cc96"/><stop offset=".429" stop-color="#42cc94"/><stop offset=".476" stop-color="#73ca90"/><stop offset=".603" stop-color="#c1c580"/><stop offset=".754" stop-color="#d4974e"/><stop offset=".873" stop-color="#d97b20"/><stop offset=".905" stop-color="#da7500"/><stop offset="1" stop-color="#dc6a00"/></linearGradient><linearGradient id="o74" gradientUnits="userSpaceOnUse" x1="90.8" x2="597.5" y1="0" y2="0"><stop offset="0" stop-color="#00ccbc"/><stop offset=".299" stop-color="#00ccac"/><stop offset=".394" stop-color="#00cc9b"/><stop offset=".409" stop-color="#2fcc99"/><stop offset=".441" stop-color="#5bcb96"/><stop offset=".528" stop-color="#9dc88c"/><stop offset=".606" stop-color="#c6c280"/><stop offset=".795" stop-color="#d78841"/><stop offset=".882" stop-color="#da751d"/><stop offset=".898" stop-color="#db720e"/><stop offset=".906" stop-color="#db7000"/><stop offset="1" stop-color="#dc6600"/></linearGradient><linearGradient id="o75" gradientUnits="userSpaceOnUse" x1="91.8" x2="602.5" y1="0" y2="0"><stop offset="0" stop-color="#00ccbd"/><stop offset=".305" stop-color="#00ccad"/><stop offset=".391" stop-color="#00cc9d"/><stop offset=".398" stop-color="#28cc9c"/><stop offset=".422" stop-color="#50cb9a"/><stop offset=".484" stop-color="#87c994"/><stop offset=".586" stop-color="#c5c588"/><stop offset=".766" stop-color="#d68c4b"/><stop offset=".883" stop-color="#db711e"/><stop offset=".898" stop-color="#db6d12"/><stop offset=".906" stop-color="#db6c00"/><stop offset="1" stop-color="#dd6200"/></linearGradient><linearGradient id="o76" gradientUnits="userSpaceOnUse" x1="92.7" x2="607.6" y1="0" y2="0"><stop offset="0" stop-color="#00ccbe"/><stop offset=".310" stop-color="#00ccae"/><stop offset=".380" stop-color="#00cca1"/><stop offset=".388" stop-color="#1fcca0"/><stop offset=".403" stop-color="#41cc9f"/><stop offset=".450" stop-color="#74ca9a"/><stop offset=".550" stop-color="#b8c68f"/><stop offset=".589" stop-color="#c7be86"/><stop offset=".798" stop-color="#d97f41"/><stop offset=".891" stop-color="#dc6b1a"/><stop offset=".915" stop-color="#dc6600"/><stop offset="1" stop-color="#dd5e00"/></linearGradient><linearGradient id="o77" gradientUnits="userSpaceOnUse" x1="93.8" x2="613.2" y1="0" y2="0"><stop offset="0" stop-color="#00ccbf"/><stop offset=".308" stop-color="#00ccaf"/><stop offset=".369" stop-color="#00cca5"/><stop offset=".385" stop-color="#2ecca3"/><stop offset=".408" stop-color="#54cba1"/><stop offset=".477" stop-color="#91c89a"/><stop offset=".569" stop-color="#c6c18d"/><stop offset=".746" stop-color="#d78852"/><stop offset=".885" stop-color="#dc6820"/><stop offset=".908" stop-color="#dd630d"/><stop offset=".915" stop-color="#dd6100"/><stop offset="1" stop-color="#dd5a00"/></linearGradient><linearGradient id="o78" gradientUnits="userSpaceOnUse" x1="94.8" x2="619.3" y1="0" y2="0"><stop offset="0" stop-color="#00ccc0"/><stop offset=".305" stop-color="#00ccb1"/><stop offset=".366" stop-color="#00cca7"/><stop offset=".374" stop-color="#29cca6"/><stop offset=".397" stop-color="#52cba4"/><stop offset=".466" stop-color="#91c89e"/><stop offset=".550" stop-color="#c5c394"/><stop offset=".748" stop-color="#d88251"/><stop offset=".885" stop-color="#dc6320"/><stop offset=".908" stop-color="#dd5e0e"/><stop offset=".916" stop-color="#dd5c00"/><stop offset="1" stop-color="#de5500"/></linearGradient><linearGradient id="o79" gradientUnits="userSpaceOnUse" x1="95.9" x2="624.5" y1="0" y2="0"><stop offset="0" stop-color="#00ccc1"/><stop offset=".303" stop-color="#00ccb3"/><stop offset=".356" stop-color="#00ccab"/><stop offset=".364" stop-color="#20ccaa"/><stop offset=".379" stop-color="#43cba9"/><stop offset=".424" stop-color="#77caa5"/><stop offset=".530" stop-color="#c2c49a"/><stop offset=".697" stop-color="#d68b61"/><stop offset=".879" stop-color="#dd5f25"/><stop offset=".909" stop-color="#de5910"/><stop offset=".917" stop-color="#de5700"/><stop offset="1" stop-color="#de5100"/></linearGradient><linearGradient id="o80" gradientUnits="userSpaceOnUse" x1="97.0" x2="629.6" y1="0" y2="0"><stop offset="0" stop-color="#00cbc2"/><stop offset=".301" stop-color="#00ccb5"/><stop offset=".346" stop-color="#00ccaf"/><stop offset=".353" stop-color="#12ccad"/><stop offset=".361" stop-color="#2fccad"/><stop offset=".391" stop-color="#5fcbab"/><stop offset=".466" stop-color="#9fc7a4"/><stop offset=".526" stop-color="#c5c39d"/><stop offset=".692" stop-color="#d78862"/><stop offset=".887" stop-color="#dd5922"/><stop offset=".910" stop-color="#de5413"/><stop offset=".925" stop-color="#de5200"/><stop offset="1" stop-color="#df4c00"/></linearGradient><linearGradient id="o81" gradientUnits="userSpaceOnUse" x1="98.1" x2="634.7" y1="0" y2="0"><stop offset="0" stop-color="#00cbc3"/><stop offset=".299" stop-color="#00ccb7"/><stop offset=".343" stop-color="#00ccb1"/><stop offset=".351" stop-color="#28ccb1"/><stop offset=".373" stop-color="#52cbaf"/><stop offset=".425" stop-color="#88c9ab"/><stop offset=".515" stop-color="#c5c2a1"/><stop offset=".687" stop-color="#d78564"/><stop offset=".888" stop-color="#de5423"/><stop offset=".918" stop-color="#de4e0d"/><stop offset=".925" stop-color="#df4c00"/><stop offset="1" stop-color="#df4700"/></linearGradient><linearGradient id="o82" gradientUnits="userSpaceOnUse" x1="99.3" x2="639.7" y1="0" y2="0"><stop offset="0" stop-color="#00cbc4"/><stop offset=".296" stop-color="#00ccb9"/><stop offset=".333" stop-color="#00ccb5"/><stop offset=".348" stop-color="#34cbb4"/><stop offset=".378" stop-color="#62cab2"/><stop offset=".452" stop-color="#a4c7ac"/><stop offset=".504" stop-color="#c5c2a5"/><stop offset=".667" stop-color="#d7866a"/><stop offset=".881" stop-color="#de5127"/><stop offset=".919" stop-color="#df4810"/><stop offset=".926" stop-color="#df4700"/><stop offset="1" stop-color="#df4200"/></linearGradient><linearGradient id="o83" gradientUnits="userSpaceOnUse" x1="100.4" x2="644.7" y1="0" y2="0"><stop offset="0" stop-color="#00cbc5"/><stop offset=".294" stop-color="#00ccbc"/><stop offset=".324" stop-color="#00ccb9"/><stop offset=".331" stop-color="#07ccb8"/><stop offset=".338" stop-color="#2ecbb7"/><stop offset=".360" stop-color="#56cbb6"/><stop offset=".419" stop-color="#92c8b2"/><stop offset=".493" stop-color="#c5c2a9"/><stop offset=".647" stop-color="#d78770"/><stop offset=".890" stop-color="#df4a24"/><stop offset=".919" stop-color="#df4312"/><stop offset=".934" stop-color="#df4000"/><stop offset="1" stop-color="#e03d00"/></linearGradient><linearGradient id="o84" gradientUnits="userSpaceOnUse" x1="101.6" x2="649.7" y1="0" y2="0"><stop offset="0" stop-color="#00cbc6"/><stop offset=".292" stop-color="#00ccbe"/><stop offset=".321" stop-color="#00ccbc"/><stop offset=".328" stop-color="#26cbbb"/><stop offset=".343" stop-color="#48cbba"/><stop offset=".387" stop-color="#7dc9b7"/><stop offset=".474" stop-color="#c2c4b0"/><stop offset=".620" stop-color="#d68b78"/><stop offset=".898" stop-color="#df4322"/><stop offset=".927" stop-color="#e03b0d"/><stop offset=".934" stop-color="#e03a00"/><stop offset="1" stop-color="#e03600"/></linearGradient><linearGradient id="o85" gradientUnits="userSpaceOnUse" x1="102.7" x2="654.7" y1="0" y2="0"><stop offset="0" stop-color="#00cbc7"/><stop offset=".290" stop-color="#00ccc1"/><stop offset=".312" stop-color="#00ccc0"/><stop offset=".326" stop-color="#34cbbf"/><stop offset=".355" stop-color="#64cabd"/><stop offset=".420" stop-color="#a2c6b8"/><stop offset=".471" stop-color="#c5c1b2"/><stop offset=".630" stop-color="#d78375"/><stop offset=".899" stop-color="#e03d23"/><stop offset=".928" stop-color="#e03410"/><stop offset=".935" stop-color="#e03200"/><stop offset="1" stop-color="#e02f00"/></linearGradient><linearGradient id="o86" gradientUnits="userSpaceOnUse" x1="103.9" x2="659.7" y1="0" y2="0"><stop offset="0" stop-color="#00cbc8"/><stop offset=".288" stop-color="#00cbc4"/><stop offset=".309" stop-color="#00cbc3"/><stop offset=".317" stop-color="#2dcbc2"/><stop offset=".338" stop-color="#58cac1"/><stop offset=".388" stop-color="#8fc8be"/><stop offset=".460" stop-color="#c5c1b7"/><stop offset=".612" stop-color="#d7847a"/><stop offset=".892" stop-color="#e03826"/><stop offset=".928" stop-color="#e02d12"/><stop offset=".942" stop-color="#e12900"/><stop offset="1" stop-color="#e12700"/></linearGradient><linearGradient id="o87" gradientUnits="userSpaceOnUse" x1="105.1" x2="664.7" y1="0" y2="0"><stop offset="0" stop-color="#00cbca"/><stop offset=".286" stop-color="#00cbc7"/><stop offset=".300" stop-color="#00cbc7"/><stop offset=".307" stop-color="#24cbc6"/><stop offset=".321" stop-color="#48cbc6"/><stop offset=".357" stop-color="#79c9c4"/><stop offset=".443" stop-color="#c2c3be"/><stop offset=".593" stop-color="#d78580"/><stop offset=".879" stop-color="#e0352d"/><stop offset=".936" stop-color="#e1200d"/><stop offset=".943" stop-color="#e11e00"/><stop offset="1" stop-color="#e11d00"/></linearGradient><linearGradient id="o88" gradientUnits="userSpaceOnUse" x1="106.3" x2="669.7" y1="0" y2="0"><stop offset="0" stop-color="#00cbcb"/><stop offset=".284" stop-color="#00cbca"/><stop offset=".291" stop-color="#00cbca"/><stop offset=".305" stop-color="#33cbca"/><stop offset=".326" stop-color="#5ccac9"/><stop offset=".383" stop-color="#9ac7c6"/><stop offset=".440" stop-color="#c5c0bf"/><stop offset=".589" stop-color="#d78281"/><stop offset=".872" stop-color="#e0302f"/><stop offset=".929" stop-color="#e11616"/><stop offset=".936" stop-color="#e11010"/><stop offset=".943" stop-color="#e10500"/><stop offset="1" stop-color="#e10300"/></linearGradient><linearGradient id="o89" gradientUnits="userSpaceOnUse" x1="107.5" x2="674.8" y1="0" y2="0"><stop offset="0" stop-color="#00cbcb"/><stop offset=".282" stop-color="#00c9cc"/><stop offset=".289" stop-color="#00c9cc"/><stop offset=".296" stop-color="#2cc9cc"/><stop offset=".310" stop-color="#4dc8cb"/><stop offset=".352" stop-color="#83c6c9"/><stop offset=".430" stop-color="#c5c0c4"/><stop offset=".577" stop-color="#d78184"/><stop offset=".859" stop-color="#e02c34"/><stop offset=".908" stop-color="#e11323"/><stop offset=".923" stop-color="#e1001d"/><stop offset="1" stop-color="#e1001c"/></linearGradient><linearGradient id="o90" gradientUnits="userSpaceOnUse" x1="108.7" x2="679.9" y1="0" y2="0"><stop offset="0" stop-color="#00cacc"/><stop offset=".280" stop-color="#00c6cd"/><stop offset=".287" stop-color="#22c6cd"/><stop offset=".301" stop-color="#48c5cc"/><stop offset=".336" stop-color="#79c3cb"/><stop offset=".420" stop-color="#c2bdc6"/><stop offset=".524" stop-color="#d58e97"/><stop offset=".755" stop-color="#df4752"/><stop offset=".874" stop-color="#e11b30"/><stop offset=".888" stop-color="#e1102b"/><stop offset=".895" stop-color="#e10029"/><stop offset="1" stop-color="#e10026"/></linearGradient><linearGradient id="o91" gradientUnits="userSpaceOnUse" x1="109.9" x2="685.0" y1="0" y2="0"><stop offset="0" stop-color="#00c9cc"/><stop offset=".271" stop-color="#00c4ce"/><stop offset=".278" stop-color="#12c3ce"/><stop offset=".285" stop-color="#32c3ce"/><stop offset=".306" stop-color="#5bc2cd"/><stop offset=".361" stop-color="#98beca"/><stop offset=".424" stop-color="#c8b7c5"/><stop offset=".569" stop-color="#d97986"/><stop offset=".833" stop-color="#e1243d"/><stop offset=".868" stop-color="#e10a33"/><stop offset=".875" stop-color="#e10032"/><stop offset="1" stop-color="#e1002d"/></linearGradient><linearGradient id="o92" gradientUnits="userSpaceOnUse" x1="111.1" x2="690.1" y1="0" y2="0"><stop offset="0" stop-color="#00c8cd"/><stop offset=".269" stop-color="#00c1cf"/><stop offset=".276" stop-color="#2ac0cf"/><stop offset=".297" stop-color="#57bfce"/><stop offset=".352" stop-color="#95bbcc"/><stop offset=".421" stop-color="#cab3c5"/><stop offset=".559" stop-color="#d97889"/><stop offset=".807" stop-color="#e02644"/><stop offset=".841" stop-color="#e10e3b"/><stop offset=".848" stop-color="#e1003a"/><stop offset="1" stop-color="#e10033"/></linearGradient><linearGradient id="o93" gradientUnits="userSpaceOnUse" x1="112.4" x2="695.1" y1="0" y2="0"><stop offset="0" stop-color="#00c7cd"/><stop offset=".260" stop-color="#00bed0"/><stop offset=".267" stop-color="#20bed0"/><stop offset=".281" stop-color="#46bdd0"/><stop offset=".315" stop-color="#77bace"/><stop offset=".404" stop-color="#c5b3ca"/><stop offset=".486" stop-color="#d48ea4"/><stop offset=".678" stop-color="#de4c66"/><stop offset=".801" stop-color="#e11d46"/><stop offset=".829" stop-color="#e10040"/><stop offset="1" stop-color="#e10038"/></linearGradient><linearGradient id="o94" gradientUnits="userSpaceOnUse" x1="113.6" x2="700.2" y1="0" y2="0"><stop offset="0" stop-color="#00c6cd"/><stop offset=".252" stop-color="#00bcd1"/><stop offset=".259" stop-color="#0fbbd1"/><stop offset=".265" stop-color="#30bad1"/><stop offset=".286" stop-color="#59b9d0"/><stop offset=".340" stop-color="#96b5ce"/><stop offset=".415" stop-color="#cdaac6"/><stop offset=".551" stop-color="#da708b"/><stop offset=".769" stop-color="#e0234f"/><stop offset=".796" stop-color="#e10d48"/><stop offset=".803" stop-color="#e10047"/><stop offset="1" stop-color="#e1003c"/></linearGradient><linearGradient id="o95" gradientUnits="userSpaceOnUse" x1="114.8" x2="705.3" y1="0" y2="0"><stop offset="0" stop-color="#00c5ce"/><stop offset=".250" stop-color="#00b8d2"/><stop offset=".257" stop-color="#28b8d2"/><stop offset=".270" stop-color="#4ab7d2"/><stop offset=".311" stop-color="#7fb3d0"/><stop offset=".399" stop-color="#caabcc"/><stop offset=".541" stop-color="#da6e8e"/><stop offset=".743" stop-color="#e02455"/><stop offset=".770" stop-color="#e1114e"/><stop offset=".777" stop-color="#e1004d"/><stop offset="1" stop-color="#e1003f"/></linearGradient><linearGradient id="o96" gradientUnits="userSpaceOnUse" x1="116.1" x2="710.4" y1="0" y2="0"><stop offset="0" stop-color="#00c4ce"/><stop offset=".242" stop-color="#00b6d3"/><stop offset=".255" stop-color="#36b4d3"/><stop offset=".282" stop-color="#65b2d2"/><stop offset=".349" stop-color="#a8accf"/><stop offset=".403" stop-color="#cea4ca"/><stop offset=".530" stop-color="#da6c91"/><stop offset=".725" stop-color="#e0235a"/><stop offset=".752" stop-color="#e10b53"/><stop offset=".758" stop-color="#e10052"/><stop offset="1" stop-color="#e10043"/></linearGradient><linearGradient id="o97" gradientUnits="userSpaceOnUse" x1="117.3" x2="713.0" y1="0" y2="0"><stop offset="0" stop-color="#00c3cf"/><stop offset=".228" stop-color="#00b4d3"/><stop offset=".235" stop-color="#00b3d4"/><stop offset=".242" stop-color="#12b2d4"/><stop offset=".248" stop-color="#31b2d4"/><stop offset=".268" stop-color="#58b0d3"/><stop offset=".315" stop-color="#8eacd1"/><stop offset=".396" stop-color="#cea2cd"/><stop offset=".530" stop-color="#db6791"/><stop offset=".705" stop-color="#e02460"/><stop offset=".732" stop-color="#e10d59"/><stop offset=".738" stop-color="#e10058"/><stop offset="1" stop-color="#e10046"/></linearGradient><linearGradient id="o98" gradientUnits="userSpaceOnUse" x1="118.5" x2="710.7" y1="0" y2="0"><stop offset="0" stop-color="#00c2cf"/><stop offset=".230" stop-color="#00b1d4"/><stop offset=".236" stop-color="#00b0d5"/><stop offset=".243" stop-color="#2aafd5"/><stop offset=".264" stop-color="#55add4"/><stop offset=".311" stop-color="#8ca9d2"/><stop offset=".399" stop-color="#d09dcd"/><stop offset=".534" stop-color="#db6292"/><stop offset=".689" stop-color="#e02566"/><stop offset=".716" stop-color="#e1105f"/><stop offset=".723" stop-color="#e1005d"/><stop offset=".993" stop-color="#e1004a"/><stop offset="1" stop-color="#e10049"/></linearGradient><linearGradient id="o99" gradientUnits="userSpaceOnUse" x1="119.8" x2="699.9" y1="0" y2="0"><stop offset="0" stop-color="#00c0cf"/><stop offset=".221" stop-color="#00b0d4"/><stop offset=".234" stop-color="#00add5"/><stop offset=".241" stop-color="#21acd5"/><stop offset=".255" stop-color="#45abd5"/><stop offset=".297" stop-color="#7ba7d4"/><stop offset=".386" stop-color="#c59dd1"/><stop offset=".414" stop-color="#d295c9"/><stop offset=".552" stop-color="#dc5b90"/><stop offset=".690" stop-color="#e0236a"/><stop offset=".710" stop-color="#e11365"/><stop offset=".724" stop-color="#e10062"/><stop offset="1" stop-color="#e1004d"/></linearGradient><linearGradient id="o100" gradientUnits="userSpaceOnUse" x1="121.1" x2="689.0" y1="0" y2="0"><stop offset="0" stop-color="#00bfd0"/><stop offset=".211" stop-color="#00afd5"/><stop offset=".232" stop-color="#00abd6"/><stop offset=".239" stop-color="#14a9d6"/><stop offset=".246" stop-color="#31a9d6"/><stop offset=".275" stop-color="#61a6d5"/><stop offset=".345" stop-color="#a49fd3"/><stop offset=".415" stop-color="#d293cd"/><stop offset=".556" stop-color="#dc5993"/><stop offset=".690" stop-color="#e0216e"/><stop offset=".711" stop-color="#e10e69"/><stop offset=".718" stop-color="#e10068"/><stop offset="1" stop-color="#e10051"/></linearGradient><linearGradient id="o101" gradientUnits="userSpaceOnUse" x1="122.4" x2="678.1" y1="0" y2="0"><stop offset="0" stop-color="#00bed0"/><stop offset=".209" stop-color="#00add5"/><stop offset=".237" stop-color="#00a7d7"/><stop offset=".245" stop-color="#29a6d7"/><stop offset=".259" stop-color="#49a5d7"/><stop offset=".302" stop-color="#7da0d5"/><stop offset=".410" stop-color="#ce93d2"/><stop offset=".540" stop-color="#dc5e9d"/><stop offset=".691" stop-color="#e01f73"/><stop offset=".705" stop-color="#e0126f"/><stop offset=".712" stop-color="#e1006e"/><stop offset="1" stop-color="#e10055"/></linearGradient><linearGradient id="o102" gradientUnits="userSpaceOnUse" x1="123.7" x2="667.3" y1="0" y2="0"><stop offset="0" stop-color="#00bdd1"/><stop offset=".206" stop-color="#00abd6"/><stop offset=".235" stop-color="#00a5d7"/><stop offset=".243" stop-color="#21a3d8"/><stop offset=".257" stop-color="#45a2d7"/><stop offset=".301" stop-color="#7a9ed6"/><stop offset=".419" stop-color="#d18fd3"/><stop offset=".581" stop-color="#dd4e94"/><stop offset=".684" stop-color="#e02179"/><stop offset=".706" stop-color="#e10c74"/><stop offset=".713" stop-color="#e10072"/><stop offset="1" stop-color="#e10059"/></linearGradient><linearGradient id="o103" gradientUnits="userSpaceOnUse" x1="125.1" x2="656.4" y1="0" y2="0"><stop offset="0" stop-color="#00bbd1"/><stop offset=".203" stop-color="#00a9d6"/><stop offset=".233" stop-color="#00a2d8"/><stop offset=".248" stop-color="#30a0d8"/><stop offset=".278" stop-color="#609dd8"/><stop offset=".353" stop-color="#a194d6"/><stop offset=".436" stop-color="#d487d1"/><stop offset=".579" stop-color="#dd4e99"/><stop offset=".684" stop-color="#e01f7d"/><stop offset=".699" stop-color="#e0117a"/><stop offset=".707" stop-color="#e00078"/><stop offset="1" stop-color="#e1005c"/></linearGradient><linearGradient id="o104" gradientUnits="userSpaceOnUse" x1="126.5" x2="645.5" y1="0" y2="0"><stop offset="0" stop-color="#00bad1"/><stop offset=".200" stop-color="#00a7d7"/><stop offset=".238" stop-color="#009ed9"/><stop offset=".246" stop-color="#2a9dd9"/><stop offset=".269" stop-color="#539bd9"/><stop offset=".331" stop-color="#8e94d7"/><stop offset=".438" stop-color="#d585d5"/><stop offset=".585" stop-color="#dd4b9c"/><stop offset=".685" stop-color="#e01c82"/><stop offset=".708" stop-color="#e0007d"/><stop offset="1" stop-color="#e10060"/></linearGradient><linearGradient id="o105" gradientUnits="userSpaceOnUse" x1="127.9" x2="634.7" y1="0" y2="0"><stop offset="0" stop-color="#00b9d2"/><stop offset=".197" stop-color="#00a6d7"/><stop offset=".236" stop-color="#009cd9"/><stop offset=".244" stop-color="#229ada"/><stop offset=".260" stop-color="#4499d9"/><stop offset=".307" stop-color="#7894d9"/><stop offset=".417" stop-color="#c485d6"/><stop offset=".457" stop-color="#d67cd1"/><stop offset=".606" stop-color="#de419a"/><stop offset=".685" stop-color="#e01886"/><stop offset=".701" stop-color="#e00082"/><stop offset="1" stop-color="#e10064"/></linearGradient><linearGradient id="o106" gradientUnits="userSpaceOnUse" x1="129.3" x2="623.8" y1="0" y2="0"><stop offset="0" stop-color="#00b7d2"/><stop offset=".194" stop-color="#00a4d8"/><stop offset=".234" stop-color="#009ada"/><stop offset=".250" stop-color="#3197da"/><stop offset=".282" stop-color="#5f93da"/><stop offset=".355" stop-color="#9a8bd8"/><stop offset=".460" stop-color="#d77ad4"/><stop offset=".613" stop-color="#de3d9d"/><stop offset=".677" stop-color="#e01b8c"/><stop offset=".685" stop-color="#e0138a"/><stop offset=".694" stop-color="#e00088"/><stop offset="1" stop-color="#e10067"/></linearGradient><linearGradient id="o107" gradientUnits="userSpaceOnUse" x1="130.7" x2="612.9" y1="0" y2="0"><stop offset="0" stop-color="#00b6d3"/><stop offset=".190" stop-color="#00a2d8"/><stop offset=".240" stop-color="#0095db"/><stop offset=".248" stop-color="#2b94db"/><stop offset=".273" stop-color="#5391da"/><stop offset=".347" stop-color="#9289d9"/><stop offset=".471" stop-color="#d874d4"/><stop offset=".636" stop-color="#df319b"/><stop offset=".678" stop-color="#e01791"/><stop offset=".694" stop-color="#e0008d"/><stop offset="1" stop-color="#e1006b"/></linearGradient><linearGradient id="o108" gradientUnits="userSpaceOnUse" x1="132.1" x2="602.1" y1="0" y2="0"><stop offset="0" stop-color="#00b4d3"/><stop offset=".188" stop-color="#00a0d9"/><stop offset=".239" stop-color="#0092db"/><stop offset=".248" stop-color="#2991db"/><stop offset=".274" stop-color="#528edb"/><stop offset=".342" stop-color="#8c86da"/><stop offset=".479" stop-color="#d86fd6"/><stop offset=".650" stop-color="#df289c"/><stop offset=".675" stop-color="#e01596"/><stop offset=".684" stop-color="#e00294"/><stop offset="1" stop-color="#e1006f"/></linearGradient><linearGradient id="o109" gradientUnits="userSpaceOnUse" x1="133.5" x2="591.2" y1="0" y2="0"><stop offset="0" stop-color="#00b3d4"/><stop offset=".193" stop-color="#009cd9"/><stop offset=".237" stop-color="#0090dc"/><stop offset=".246" stop-color="#218edc"/><stop offset=".263" stop-color="#438cdc"/><stop offset=".316" stop-color="#7786db"/><stop offset=".447" stop-color="#c673d9"/><stop offset=".491" stop-color="#d969d6"/><stop offset=".649" stop-color="#df25a1"/><stop offset=".675" stop-color="#e00e9b"/><stop offset=".684" stop-color="#e00099"/><stop offset=".947" stop-color="#e10077"/><stop offset="1" stop-color="#e10073"/></linearGradient><linearGradient id="o110" gradientUnits="userSpaceOnUse" x1="134.9" x2="580.3" y1="0" y2="0"><stop offset="0" stop-color="#00b1d4"/><stop offset=".189" stop-color="#009bda"/><stop offset=".234" stop-color="#008edc"/><stop offset=".252" stop-color="#308add"/><stop offset=".288" stop-color="#5e86dc"/><stop offset=".378" stop-color="#9d7bdb"/><stop offset=".495" stop-color="#d966d9"/><stop offset=".649" stop-color="#df23a6"/><stop offset=".667" stop-color="#e013a2"/><stop offset=".676" stop-color="#e000a0"/><stop offset=".919" stop-color="#e0007d"/><stop offset="1" stop-color="#e10076"/></linearGradient><linearGradient id="o111" gradientUnits="userSpaceOnUse" x1="136.2" x2="569.4" y1="0" y2="0"><stop offset="0" stop-color="#00b0d5"/><stop offset=".185" stop-color="#0099da"/><stop offset=".241" stop-color="#0088dd"/><stop offset=".250" stop-color="#2987dd"/><stop offset=".278" stop-color="#5184dd"/><stop offset=".361" stop-color="#907adc"/><stop offset=".509" stop-color="#da5fd9"/><stop offset=".639" stop-color="#df26ae"/><stop offset=".657" stop-color="#e018a9"/><stop offset=".676" stop-color="#e000a5"/><stop offset=".926" stop-color="#e00081"/><stop offset="1" stop-color="#e0007a"/></linearGradient><linearGradient id="o112" gradientUnits="userSpaceOnUse" x1="137.5" x2="558.6" y1="0" y2="0"><stop offset="0" stop-color="#00aed5"/><stop offset=".181" stop-color="#0097da"/><stop offset=".238" stop-color="#0086dd"/><stop offset=".248" stop-color="#2184de"/><stop offset=".267" stop-color="#4282dd"/><stop offset=".324" stop-color="#757cdd"/><stop offset=".467" stop-color="#c365db"/><stop offset=".524" stop-color="#db58d9"/><stop offset=".638" stop-color="#df23b3"/><stop offset=".657" stop-color="#df11ae"/><stop offset=".667" stop-color="#e000ac"/><stop offset=".914" stop-color="#e00086"/><stop offset="1" stop-color="#e0007e"/></linearGradient><linearGradient id="o113" gradientUnits="userSpaceOnUse" x1="138.8" x2="547.7" y1="0" y2="0"><stop offset="0" stop-color="#00acd6"/><stop offset=".186" stop-color="#0094db"/><stop offset=".235" stop-color="#0085de"/><stop offset=".255" stop-color="#2f80de"/><stop offset=".284" stop-color="#547dde"/><stop offset=".373" stop-color="#9072dd"/><stop offset=".529" stop-color="#da53db"/><stop offset=".627" stop-color="#df26bc"/><stop offset=".647" stop-color="#df17b6"/><stop offset=".657" stop-color="#df00b3"/><stop offset=".892" stop-color="#e0008d"/><stop offset="1" stop-color="#e00082"/></linearGradient><linearGradient id="o114" gradientUnits="userSpaceOnUse" x1="140.1" x2="536.8" y1="0" y2="0"><stop offset="0" stop-color="#00aad6"/><stop offset=".182" stop-color="#0092db"/><stop offset=".242" stop-color="#007fdf"/><stop offset=".253" stop-color="#297ddf"/><stop offset=".283" stop-color="#507ade"/><stop offset=".364" stop-color="#8870de"/><stop offset=".545" stop-color="#dc4bdc"/><stop offset=".636" stop-color="#df1bbe"/><stop offset=".657" stop-color="#df00b9"/><stop offset=".879" stop-color="#e00093"/><stop offset="1" stop-color="#e00086"/></linearGradient><linearGradient id="o115" gradientUnits="userSpaceOnUse" x1="141.6" x2="526.0" y1="0" y2="0"><stop offset="0" stop-color="#00a9d6"/><stop offset=".188" stop-color="#008edc"/><stop offset=".240" stop-color="#007ddf"/><stop offset=".250" stop-color="#227adf"/><stop offset=".271" stop-color="#4278df"/><stop offset=".333" stop-color="#7470df"/><stop offset=".510" stop-color="#c951dd"/><stop offset=".573" stop-color="#dd3cd8"/><stop offset=".625" stop-color="#df1fc7"/><stop offset=".635" stop-color="#df15c4"/><stop offset=".646" stop-color="#df00c1"/><stop offset=".865" stop-color="#e00099"/><stop offset="1" stop-color="#e0008a"/></linearGradient><linearGradient id="o116" gradientUnits="userSpaceOnUse" x1="143.2" x2="515.1" y1="0" y2="0"><stop offset="0" stop-color="#00a7d7"/><stop offset=".183" stop-color="#008cdc"/><stop offset=".237" stop-color="#007bdf"/><stop offset=".258" stop-color="#3076e0"/><stop offset=".301" stop-color="#5c71df"/><stop offset=".419" stop-color="#9e60de"/><stop offset=".570" stop-color="#db3add"/><stop offset=".624" stop-color="#df1acd"/><stop offset=".645" stop-color="#df00c7"/><stop offset=".882" stop-color="#e0009b"/><stop offset="1" stop-color="#e0008f"/></linearGradient><linearGradient id="o117" gradientUnits="userSpaceOnUse" x1="144.8" x2="504.2" y1="0" y2="0"><stop offset="0" stop-color="#00a4d7"/><stop offset=".167" stop-color="#008ddc"/><stop offset=".233" stop-color="#0079df"/><stop offset=".244" stop-color="#0b74e0"/><stop offset=".256" stop-color="#2b73e0"/><stop offset=".289" stop-color="#506fe0"/><stop offset=".378" stop-color="#8763df"/><stop offset=".544" stop-color="#cd3fde"/><stop offset=".600" stop-color="#de26db"/><stop offset=".622" stop-color="#df12d4"/><stop offset=".633" stop-color="#df00d0"/><stop offset=".844" stop-color="#e000a5"/><stop offset="1" stop-color="#e00093"/></linearGradient><linearGradient id="o118" gradientUnits="userSpaceOnUse" x1="146.4" x2="493.4" y1="0" y2="0"><stop offset="0" stop-color="#00a2d8"/><stop offset=".184" stop-color="#0086de"/><stop offset=".241" stop-color="#0072e0"/><stop offset=".253" stop-color="#2670e1"/><stop offset=".287" stop-color="#4e6ce0"/><stop offset=".379" stop-color="#855fe0"/><stop offset=".540" stop-color="#c63cdf"/><stop offset=".598" stop-color="#db22de"/><stop offset=".609" stop-color="#de18de"/><stop offset=".621" stop-color="#df00da"/><stop offset=".816" stop-color="#e000ae"/><stop offset="1" stop-color="#e00097"/></linearGradient><linearGradient id="o119" gradientUnits="userSpaceOnUse" x1="148.1" x2="482.5" y1="0" y2="0"><stop offset="0" stop-color="#00a0d8"/><stop offset=".179" stop-color="#0084de"/><stop offset=".238" stop-color="#0070e1"/><stop offset=".250" stop-color="#1f6ce1"/><stop offset=".274" stop-color="#406ae1"/><stop offset=".345" stop-color="#7160e0"/><stop offset=".524" stop-color="#bc3ddf"/><stop offset=".595" stop-color="#d41cdf"/><stop offset=".619" stop-color="#dc00df"/><stop offset=".833" stop-color="#e000b1"/><stop offset="1" stop-color="#e0009c"/></linearGradient><linearGradient id="o120" gradientUnits="userSpaceOnUse" x1="149.8" x2="471.6" y1="0" y2="0"><stop offset="0" stop-color="#009ed9"/><stop offset=".175" stop-color="#0082de"/><stop offset=".237" stop-color="#006ce1"/><stop offset=".250" stop-color="#1f69e1"/><stop offset=".275" stop-color="#4066e1"/><stop offset=".350" stop-color="#715ce1"/><stop offset=".512" stop-color="#b33be0"/><stop offset=".575" stop-color="#c822e0"/><stop offset=".588" stop-color="#cc19e0"/><stop offset=".600" stop-color="#d000e0"/><stop offset=".662" stop-color="#df00da"/><stop offset=".887" stop-color="#e000ae"/><stop offset="1" stop-color="#e000a1"/></linearGradient><linearGradient id="o121" gradientUnits="userSpaceOnUse" x1="151.5" x2="460.8" y1="0" y2="0"><stop offset="0" stop-color="#009bda"/><stop offset=".169" stop-color="#0080de"/><stop offset=".234" stop-color="#006ae1"/><stop offset=".260" stop-color="#2e64e2"/><stop offset=".312" stop-color="#5a5de2"/><stop offset=".455" stop-color="#9b45e1"/><stop offset=".558" stop-color="#be24e0"/><stop offset=".597" stop-color="#ca00e0"/><stop offset=".688" stop-color="#df00d9"/><stop offset=".922" stop-color="#e000af"/><stop offset="1" stop-color="#e000a6"/></linearGradient><linearGradient id="o122" gradientUnits="userSpaceOnUse" x1="153.2" x2="449.9" y1="0" y2="0"><stop offset="0" stop-color="#0099da"/><stop offset=".176" stop-color="#007bdf"/><stop offset=".243" stop-color="#0062e2"/><stop offset=".257" stop-color="#2960e2"/><stop offset=".297" stop-color="#4e5be2"/><stop offset=".405" stop-color="#844be2"/><stop offset=".527" stop-color="#af2ce1"/><stop offset=".568" stop-color="#bc14e1"/><stop offset=".581" stop-color="#c000e1"/><stop offset=".703" stop-color="#df00dc"/><stop offset=".919" stop-color="#df00b4"/><stop offset="1" stop-color="#e000ab"/></linearGradient><linearGradient id="o123" gradientUnits="userSpaceOnUse" x1="155.0" x2="439.0" y1="0" y2="0"><stop offset="0" stop-color="#0096db"/><stop offset=".169" stop-color="#0079df"/><stop offset=".239" stop-color="#0060e2"/><stop offset=".254" stop-color="#245de3"/><stop offset=".296" stop-color="#4c57e2"/><stop offset=".408" stop-color="#8246e2"/><stop offset=".521" stop-color="#a928e2"/><stop offset=".549" stop-color="#b118e2"/><stop offset=".563" stop-color="#b604e2"/><stop offset=".732" stop-color="#df00db"/><stop offset=".972" stop-color="#df00b3"/><stop offset="1" stop-color="#e000b0"/></linearGradient><linearGradient id="o124" gradientUnits="userSpaceOnUse" x1="156.8" x2="428.2" y1="0" y2="0"><stop offset="0" stop-color="#0093db"/><stop offset=".176" stop-color="#0073e0"/><stop offset=".235" stop-color="#005de3"/><stop offset=".250" stop-color="#1e59e3"/><stop offset=".279" stop-color="#3f55e3"/><stop offset=".368" stop-color="#6f48e3"/><stop offset=".500" stop-color="#9e29e2"/><stop offset=".544" stop-color="#ab0fe2"/><stop offset=".559" stop-color="#b000e2"/><stop offset=".750" stop-color="#de00dd"/><stop offset="1" stop-color="#df00b5"/></linearGradient><linearGradient id="o125" gradientUnits="userSpaceOnUse" x1="158.7" x2="417.3" y1="0" y2="0"><stop offset="0" stop-color="#0090dc"/><stop offset=".169" stop-color="#0071e0"/><stop offset=".231" stop-color="#005be3"/><stop offset=".262" stop-color="#2e53e3"/><stop offset=".323" stop-color="#584be3"/><stop offset=".477" stop-color="#932ae3"/><stop offset=".523" stop-color="#a114e3"/><stop offset=".538" stop-color="#a500e3"/><stop offset=".769" stop-color="#dd00df"/><stop offset="1" stop-color="#df00bb"/></linearGradient><linearGradient id="o126" gradientUnits="userSpaceOnUse" x1="160.6" x2="406.4" y1="0" y2="0"><stop offset="0" stop-color="#008cdc"/><stop offset=".164" stop-color="#006fe1"/><stop offset=".230" stop-color="#0057e3"/><stop offset=".262" stop-color="#2f4ee4"/><stop offset=".328" stop-color="#5945e4"/><stop offset=".459" stop-color="#8929e3"/><stop offset=".508" stop-color="#9811e3"/><stop offset=".525" stop-color="#9d00e3"/><stop offset=".787" stop-color="#da00df"/><stop offset="1" stop-color="#df00c1"/></linearGradient><linearGradient id="o127" gradientUnits="userSpaceOnUse" x1="162.6" x2="395.5" y1="0" y2="0"><stop offset="0" stop-color="#0089dd"/><stop offset=".172" stop-color="#0068e2"/><stop offset=".224" stop-color="#0054e3"/><stop offset=".241" stop-color="#104ce4"/><stop offset=".259" stop-color="#2b4ae4"/><stop offset=".310" stop-color="#4e43e4"/><stop offset=".448" stop-color="#8225e4"/><stop offset=".483" stop-color="#8d15e4"/><stop offset=".500" stop-color="#9100e4"/><stop offset=".741" stop-color="#cc00e0"/><stop offset=".879" stop-color="#df00d9"/><stop offset="1" stop-color="#df00c7"/></linearGradient><linearGradient id="o128" gradientUnits="userSpaceOnUse" x1="164.7" x2="384.7" y1="0" y2="0"><stop offset="0" stop-color="#0085de"/><stop offset=".164" stop-color="#0065e2"/><stop offset=".236" stop-color="#0048e4"/><stop offset=".255" stop-color="#2745e4"/><stop offset=".309" stop-color="#4c3de4"/><stop offset=".436" stop-color="#7b20e4"/><stop offset=".491" stop-color="#8b00e4"/><stop offset=".745" stop-color="#c700e0"/><stop offset=".909" stop-color="#df00db"/><stop offset="1" stop-color="#df00ce"/></linearGradient><linearGradient id="o129" gradientUnits="userSpaceOnUse" x1="166.8" x2="373.8" y1="0" y2="0"><stop offset="0" stop-color="#0081de"/><stop offset=".173" stop-color="#005de3"/><stop offset=".231" stop-color="#0045e5"/><stop offset=".250" stop-color="#2440e5"/><stop offset=".308" stop-color="#4a37e5"/><stop offset=".423" stop-color="#741ae5"/><stop offset=".462" stop-color="#7f00e4"/><stop offset=".692" stop-color="#b700e1"/><stop offset=".962" stop-color="#df00da"/><stop offset="1" stop-color="#df00d5"/></linearGradient><linearGradient id="o130" gradientUnits="userSpaceOnUse" x1="169.0" x2="362.9" y1="0" y2="0"><stop offset="0" stop-color="#007cdf"/><stop offset=".167" stop-color="#005ae3"/><stop offset=".229" stop-color="#003ee5"/><stop offset=".250" stop-color="#253ae5"/><stop offset=".312" stop-color="#4b2fe5"/><stop offset=".396" stop-color="#6918e5"/><stop offset=".438" stop-color="#7600e5"/><stop offset=".688" stop-color="#b100e2"/><stop offset="1" stop-color="#de00dd"/></linearGradient><linearGradient id="o131" gradientUnits="userSpaceOnUse" x1="171.4" x2="352.1" y1="0" y2="0"><stop offset="0" stop-color="#0077e0"/><stop offset=".156" stop-color="#0057e3"/><stop offset=".222" stop-color="#003ae5"/><stop offset=".244" stop-color="#2233e5"/><stop offset=".311" stop-color="#4927e5"/><stop offset=".378" stop-color="#610fe5"/><stop offset=".400" stop-color="#6800e5"/><stop offset=".622" stop-color="#9f00e3"/><stop offset="1" stop-color="#d900df"/></linearGradient><linearGradient id="o132" gradientUnits="userSpaceOnUse" x1="173.8" x2="341.2" y1="0" y2="0"><stop offset="0" stop-color="#0072e0"/><stop offset=".167" stop-color="#004ce4"/><stop offset=".214" stop-color="#0035e5"/><stop offset=".238" stop-color="#202ce6"/><stop offset=".310" stop-color="#481be6"/><stop offset=".333" stop-color="#5012e6"/><stop offset=".357" stop-color="#5900e6"/><stop offset=".548" stop-color="#8c00e4"/><stop offset=".929" stop-color="#c900e0"/><stop offset="1" stop-color="#d100e0"/></linearGradient><linearGradient id="o133" gradientUnits="userSpaceOnUse" x1="176.5" x2="330.3" y1="0" y2="0"><stop offset="0" stop-color="#006be1"/><stop offset=".132" stop-color="#004fe4"/><stop offset=".211" stop-color="#002be6"/><stop offset=".237" stop-color="#2321e6"/><stop offset=".316" stop-color="#4b00e6"/><stop offset=".500" stop-color="#7f00e4"/><stop offset=".868" stop-color="#ba00e1"/><stop offset="1" stop-color="#ca00e0"/></linearGradient><linearGradient id="o134" gradientUnits="userSpaceOnUse" x1="179.2" x2="319.5" y1="0" y2="0"><stop offset="0" stop-color="#0064e2"/><stop offset=".143" stop-color="#0041e5"/><stop offset=".200" stop-color="#0022e6"/><stop offset=".229" stop-color="#2211e6"/><stop offset=".257" stop-color="#3400e6"/><stop offset=".371" stop-color="#5f00e5"/><stop offset=".629" stop-color="#9300e3"/><stop offset="1" stop-color="#c200e1"/></linearGradient><linearGradient id="o135" gradientUnits="userSpaceOnUse" x1="182.0" x2="308.6" y1="0" y2="0"><stop offset="0" stop-color="#005ce3"/><stop offset=".125" stop-color="#003ce5"/><stop offset=".156" stop-color="#002ee6"/><stop offset=".188" stop-color="#0014e6"/><stop offset=".219" stop-color="#2800e6"/><stop offset=".312" stop-color="#5000e6"/><stop offset=".531" stop-color="#7f00e4"/><stop offset=".969" stop-color="#b700e1"/><stop offset="1" stop-color="#ba00e1"/></linearGradient><linearGradient id="o136" gradientUnits="userSpaceOnUse" x1="184.9" x2="297.7" y1="0" y2="0"><stop offset="0" stop-color="#0052e4"/><stop offset=".107" stop-color="#0035e5"/><stop offset=".143" stop-color="#0022e6"/><stop offset=".179" stop-color="#1d00e6"/><stop offset=".250" stop-color="#4100e6"/><stop offset=".464" stop-color="#7200e5"/><stop offset=".929" stop-color="#ac00e2"/><stop offset="1" stop-color="#b200e2"/></linearGradient><linearGradient id="o137" gradientUnits="userSpaceOnUse" x1="187.8" x2="286.9" y1="0" y2="0"><stop offset="0" stop-color="#0045e5"/><stop offset=".080" stop-color="#002de6"/><stop offset=".120" stop-color="#0012e6"/><stop offset=".160" stop-color="#2800e6"/><stop offset=".280" stop-color="#4f00e6"/><stop offset=".600" stop-color="#8200e4"/><stop offset="1" stop-color="#aa00e2"/></linearGradient><linearGradient id="o138" gradientUnits="userSpaceOnUse" x1="190.8" x2="276.0" y1="0" y2="0"><stop offset="0" stop-color="#0034e6"/><stop offset=".048" stop-color="#0021e6"/><stop offset=".095" stop-color="#1d00e6"/><stop offset=".190" stop-color="#4000e6"/><stop offset=".476" stop-color="#7000e5"/><stop offset="1" stop-color="#a200e3"/></linearGradient><linearGradient id="o139" gradientUnits="userSpaceOnUse" x1="193.9" x2="265.1" y1="0" y2="0"><stop offset="0" stop-color="#000de7"/><stop offset=".056" stop-color="#2900e6"/><stop offset=".222" stop-color="#4e00e6"/><stop offset=".611" stop-color="#7b00e4"/><stop offset="1" stop-color="#9900e3"/></linearGradient><linearGradient id="o140" gradientUnits="userSpaceOnUse" x1="196.8" x2="254.3" y1="0" y2="0"><stop offset="0" stop-color="#3100e6"/><stop offset=".286" stop-color="#5b00e6"/><stop offset="1" stop-color="#9100e4"/></linearGradient><linearGradient id="o141" gradientUnits="userSpaceOnUse" x1="200.0" x2="243.4" y1="0" y2="0"><stop offset="0" stop-color="#4400e6"/><stop offset=".545" stop-color="#6f00e5"/><stop offset="1" stop-color="#8700e4"/></linearGradient><linearGradient id="o142" gradientUnits="userSpaceOnUse" x1="205.3" x2="232.5" y1="0" y2="0"><stop offset="0" stop-color="#5600e6"/><stop offset="1" stop-color="#7d00e4"/></linearGradient>
<linearGradient id="i0" gradientUnits="userSpaceOnUse" x1="337.3" x2="344.2" y1="0" y2="0"><stop offset="0" stop-color="#00ff0b"/><stop offset=".500" stop-color="#12ff00"/><stop offset="1" stop-color="#22ff00"/></linearGradient><linearGradient id="i1" gradientUnits="userSpaceOnUse" x1="335.9" x2="350.6" y1="0" y2="0"><stop offset="0" stop-color="#00ff18"/><stop offset=".500" stop-color="#24ff0d"/><stop offset=".750" stop-color="#30ff00"/><stop offset="1" stop-color="#39ff00"/></linearGradient><linearGradient id="i2" gradientUnits="userSpaceOnUse" x1="334.5" x2="357.0" y1="0" y2="0"><stop offset="0" stop-color="#00ff21"/><stop offset=".333" stop-color="#25ff19"/><stop offset=".667" stop-color="#3aff0d"/><stop offset=".833" stop-color="#43ff00"/><stop offset="1" stop-color="#4bff00"/></linearGradient><linearGradient id="i3" gradientUnits="userSpaceOnUse" x1="333.1" x2="363.4" y1="0" y2="0"><stop offset="0" stop-color="#00ff29"/><stop offset=".250" stop-color="#25ff22"/><stop offset=".750" stop-color="#4cff0d"/><stop offset=".875" stop-color="#54ff00"/><stop offset="1" stop-color="#5bff00"/></linearGradient><linearGradient id="i4" gradientUnits="userSpaceOnUse" x1="331.7" x2="369.8" y1="0" y2="0"><stop offset="0" stop-color="#00ff2f"/><stop offset=".200" stop-color="#26ff2a"/><stop offset=".800" stop-color="#5cff0e"/><stop offset=".900" stop-color="#63ff00"/><stop offset="1" stop-color="#6aff00"/></linearGradient><linearGradient id="i5" gradientUnits="userSpaceOnUse" x1="330.3" x2="376.2" y1="0" y2="0"><stop offset="0" stop-color="#00ff36"/><stop offset=".182" stop-color="#29ff30"/><stop offset=".636" stop-color="#5aff1c"/><stop offset=".818" stop-color="#69ff10"/><stop offset=".909" stop-color="#70ff00"/><stop offset="1" stop-color="#77ff00"/></linearGradient><linearGradient id="i6" gradientUnits="userSpaceOnUse" x1="328.8" x2="382.6" y1="0" y2="0"><stop offset="0" stop-color="#01ff3c"/><stop offset=".154" stop-color="#29ff36"/><stop offset=".538" stop-color="#5bff26"/><stop offset=".846" stop-color="#77ff10"/><stop offset=".923" stop-color="#7eff00"/><stop offset="1" stop-color="#84ff00"/></linearGradient><linearGradient id="i7" gradientUnits="userSpaceOnUse" x1="327.4" x2="389.0" y1="0" y2="0"><stop offset="0" stop-color="#01ff41"/><stop offset=".133" stop-color="#29ff3c"/><stop offset=".467" stop-color="#5bff2e"/><stop offset=".867" stop-color="#85ff10"/><stop offset=".933" stop-color="#8bff01"/><stop offset="1" stop-color="#91ff00"/></linearGradient><linearGradient id="i8" gradientUnits="userSpaceOnUse" x1="326.0" x2="395.4" y1="0" y2="0"><stop offset="0" stop-color="#01ff47"/><stop offset=".118" stop-color="#2aff42"/><stop offset=".412" stop-color="#5cff35"/><stop offset=".824" stop-color="#8cff18"/><stop offset=".941" stop-color="#98ff01"/><stop offset="1" stop-color="#9dff01"/></linearGradient><linearGradient id="i9" gradientUnits="userSpaceOnUse" x1="324.6" x2="401.8" y1="0" y2="0"><stop offset="0" stop-color="#02ff4c"/><stop offset=".105" stop-color="#2aff48"/><stop offset=".368" stop-color="#5cff3c"/><stop offset=".842" stop-color="#98ff18"/><stop offset=".895" stop-color="#9eff11"/><stop offset=".947" stop-color="#a4ff01"/><stop offset="1" stop-color="#aaff01"/></linearGradient><linearGradient id="i10" gradientUnits="userSpaceOnUse" x1="323.2" x2="408.2" y1="0" y2="0"><stop offset="0" stop-color="#03ff52"/><stop offset=".095" stop-color="#2bff4e"/><stop offset=".333" stop-color="#5dff42"/><stop offset=".810" stop-color="#9fff1f"/><stop offset=".905" stop-color="#abff11"/><stop offset=".952" stop-color="#b0ff01"/><stop offset="1" stop-color="#b6ff01"/></linearGradient><linearGradient id="i11" gradientUnits="userSpaceOnUse" x1="321.8" x2="414.6" y1="0" y2="0"><stop offset="0" stop-color="#04ff57"/><stop offset=".087" stop-color="#2cff53"/><stop offset=".304" stop-color="#5eff49"/><stop offset=".783" stop-color="#a6ff24"/><stop offset=".913" stop-color="#b7ff11"/><stop offset=".957" stop-color="#bdff01"/><stop offset="1" stop-color="#c2ff01"/></linearGradient><linearGradient id="i12" gradientUnits="userSpaceOnUse" x1="320.4" x2="421.0" y1="0" y2="0"><stop offset="0" stop-color="#06ff5d"/><stop offset=".080" stop-color="#2eff59"/><stop offset=".280" stop-color="#60ff4f"/><stop offset=".760" stop-color="#adff2a"/><stop offset=".920" stop-color="#c4ff12"/><stop offset=".960" stop-color="#c9ff01"/><stop offset="1" stop-color="#cfff01"/></linearGradient><linearGradient id="i13" gradientUnits="userSpaceOnUse" x1="319.0" x2="427.4" y1="0" y2="0"><stop offset="0" stop-color="#08ff63"/><stop offset=".074" stop-color="#30ff5f"/><stop offset=".259" stop-color="#62ff56"/><stop offset=".778" stop-color="#baff2b"/><stop offset=".926" stop-color="#d0ff12"/><stop offset=".963" stop-color="#d6ff02"/><stop offset="1" stop-color="#dbff01"/></linearGradient><linearGradient id="i14" gradientUnits="userSpaceOnUse" x1="317.6" x2="433.8" y1="0" y2="0"><stop offset="0" stop-color="#0aff69"/><stop offset=".069" stop-color="#32ff65"/><stop offset=".241" stop-color="#64ff5c"/><stop offset=".724" stop-color="#bcff35"/><stop offset=".931" stop-color="#ddff13"/><stop offset=".966" stop-color="#e2ff02"/><stop offset="1" stop-color="#e8ff02"/></linearGradient><linearGradient id="i15" gradientUnits="userSpaceOnUse" x1="316.1" x2="440.2" y1="0" y2="0"><stop offset="0" stop-color="#0eff6f"/><stop offset=".065" stop-color="#35ff6c"/><stop offset=".226" stop-color="#67ff63"/><stop offset=".710" stop-color="#c3ff3a"/><stop offset=".903" stop-color="#e4ff1c"/><stop offset=".968" stop-color="#efff02"/><stop offset="1" stop-color="#f5ff02"/></linearGradient><linearGradient id="i16" gradientUnits="userSpaceOnUse" x1="314.7" x2="446.6" y1="0" y2="0"><stop offset="0" stop-color="#12ff75"/><stop offset=".061" stop-color="#39ff73"/><stop offset=".212" stop-color="#6aff6a"/><stop offset=".667" stop-color="#c5ff43"/><stop offset=".909" stop-color="#f1ff1c"/><stop offset=".970" stop-color="#fcff02"/><stop offset="1" stop-color="#fffc02"/></linearGradient><linearGradient id="i17" gradientUnits="userSpaceOnUse" x1="313.3" x2="453.0" y1="0" y2="0"><stop offset="0" stop-color="#16ff7c"/><stop offset=".057" stop-color="#3dff79"/><stop offset=".200" stop-color="#6dff72"/><stop offset=".657" stop-color="#ccff48"/><stop offset=".914" stop-color="#feff1d"/><stop offset=".943" stop-color="#fffa14"/><stop offset=".971" stop-color="#fff502"/><stop offset="1" stop-color="#fff002"/></linearGradient><linearGradient id="i18" gradientUnits="userSpaceOnUse" x1="311.9" x2="459.4" y1="0" y2="0"><stop offset="0" stop-color="#1cff83"/><stop offset=".054" stop-color="#42ff81"/><stop offset=".162" stop-color="#6aff7b"/><stop offset=".568" stop-color="#c4ff57"/><stop offset=".865" stop-color="#fffe2a"/><stop offset=".946" stop-color="#ffee13"/><stop offset=".973" stop-color="#ffe902"/><stop offset="1" stop-color="#ffe402"/></linearGradient><linearGradient id="i19" gradientUnits="userSpaceOnUse" x1="310.5" x2="465.8" y1="0" y2="0"><stop offset="0" stop-color="#22ff8a"/><stop offset=".051" stop-color="#48ff88"/><stop offset=".179" stop-color="#76ff82"/><stop offset=".590" stop-color="#d1ff5a"/><stop offset=".821" stop-color="#fffc35"/><stop offset=".949" stop-color="#ffe212"/><stop offset=".974" stop-color="#ffde02"/><stop offset="1" stop-color="#ffd902"/></linearGradient><linearGradient id="i20" gradientUnits="userSpaceOnUse" x1="309.1" x2="472.2" y1="0" y2="0"><stop offset="0" stop-color="#29ff91"/><stop offset=".049" stop-color="#4eff90"/><stop offset=".171" stop-color="#7bff8a"/><stop offset=".561" stop-color="#d3ff63"/><stop offset=".756" stop-color="#ffff45"/><stop offset=".951" stop-color="#ffd812"/><stop offset=".976" stop-color="#ffd302"/><stop offset="1" stop-color="#ffcf02"/></linearGradient><linearGradient id="i21" gradientUnits="userSpaceOnUse" x1="307.7" x2="478.6" y1="0" y2="0"><stop offset="0" stop-color="#31ff99"/><stop offset=".047" stop-color="#55ff98"/><stop offset=".163" stop-color="#81ff92"/><stop offset=".512" stop-color="#d1ff6f"/><stop offset=".721" stop-color="#fffd4e"/><stop offset=".953" stop-color="#ffcd11"/><stop offset=".977" stop-color="#ffc902"/><stop offset="1" stop-color="#ffc601"/></linearGradient><linearGradient id="i22" gradientUnits="userSpaceOnUse" x1="306.3" x2="485.0" y1="0" y2="0"><stop offset="0" stop-color="#3affa1"/><stop offset=".044" stop-color="#5dffa0"/><stop offset=".156" stop-color="#88ff9b"/><stop offset=".467" stop-color="#cfff7c"/><stop offset=".689" stop-color="#fffb56"/><stop offset=".956" stop-color="#ffc411"/><stop offset=".978" stop-color="#ffc002"/><stop offset="1" stop-color="#ffbd01"/></linearGradient><linearGradient id="i23" gradientUnits="userSpaceOnUse" x1="304.8" x2="491.4" y1="0" y2="0"><stop offset="0" stop-color="#43ffa8"/><stop offset=".043" stop-color="#65ffa8"/><stop offset=".149" stop-color="#8fffa4"/><stop offset=".447" stop-color="#d2ff85"/><stop offset=".638" stop-color="#fffe65"/><stop offset=".936" stop-color="#ffbe18"/><stop offset=".979" stop-color="#ffb701"/><stop offset="1" stop-color="#ffb401"/></linearGradient><linearGradient id="i24" gradientUnits="userSpaceOnUse" x1="303.4" x2="497.8" y1="0" y2="0"><stop offset="0" stop-color="#4dffb0"/><stop offset=".041" stop-color="#6effb0"/><stop offset=".143" stop-color="#96ffac"/><stop offset=".429" stop-color="#d5ff8f"/><stop offset=".612" stop-color="#fffc6e"/><stop offset=".898" stop-color="#ffbc23"/><stop offset=".959" stop-color="#ffb210"/><stop offset=".980" stop-color="#ffaf01"/><stop offset="1" stop-color="#ffab01"/></linearGradient><linearGradient id="i25" gradientUnits="userSpaceOnUse" x1="302.0" x2="504.2" y1="0" y2="0"><stop offset="0" stop-color="#58ffb8"/><stop offset=".039" stop-color="#77ffb7"/><stop offset=".137" stop-color="#9dffb5"/><stop offset=".412" stop-color="#d9ff99"/><stop offset=".569" stop-color="#ffff7c"/><stop offset=".882" stop-color="#ffb727"/><stop offset=".961" stop-color="#ffaa0f"/><stop offset=".980" stop-color="#ffa601"/><stop offset="1" stop-color="#ffa301"/></linearGradient><linearGradient id="i26" gradientUnits="userSpaceOnUse" x1="300.6" x2="510.6" y1="0" y2="0"><stop offset="0" stop-color="#62ffbf"/><stop offset=".038" stop-color="#81ffbf"/><stop offset=".154" stop-color="#abffbc"/><stop offset=".404" stop-color="#deffa1"/><stop offset=".538" stop-color="#ffff88"/><stop offset=".846" stop-color="#ffb630"/><stop offset=".962" stop-color="#ffa20f"/><stop offset=".981" stop-color="#ff9f01"/><stop offset="1" stop-color="#ff9c01"/></linearGradient><linearGradient id="i27" gradientUnits="userSpaceOnUse" x1="299.2" x2="517.0" y1="0" y2="0"><stop offset="0" stop-color="#6dffc6"/><stop offset=".056" stop-color="#94ffc6"/><stop offset=".185" stop-color="#bbffc2"/><stop offset=".407" stop-color="#e5ffa7"/><stop offset=".519" stop-color="#fffd91"/><stop offset=".796" stop-color="#ffb83d"/><stop offset=".963" stop-color="#ff9a0e"/><stop offset=".981" stop-color="#ff9701"/><stop offset="1" stop-color="#ff9401"/></linearGradient><linearGradient id="i28" gradientUnits="userSpaceOnUse" x1="297.8" x2="523.4" y1="0" y2="0"><stop offset="0" stop-color="#78ffcd"/><stop offset=".036" stop-color="#95ffcd"/><stop offset=".143" stop-color="#baffcc"/><stop offset=".357" stop-color="#e1ffb7"/><stop offset=".500" stop-color="#fffc9a"/><stop offset=".768" stop-color="#ffb644"/><stop offset=".964" stop-color="#ff920e"/><stop offset=".982" stop-color="#ff9001"/><stop offset="1" stop-color="#ff8d00"/></linearGradient><linearGradient id="i29" gradientUnits="userSpaceOnUse" x1="296.4" x2="529.8" y1="0" y2="0"><stop offset="0" stop-color="#83ffd3"/><stop offset=".034" stop-color="#9effd4"/><stop offset=".138" stop-color="#c1ffd3"/><stop offset=".345" stop-color="#e4ffc0"/><stop offset=".466" stop-color="#ffffa9"/><stop offset=".741" stop-color="#ffb54b"/><stop offset=".966" stop-color="#ff8b0d"/><stop offset=".983" stop-color="#ff8900"/><stop offset="1" stop-color="#ff8600"/></linearGradient><linearGradient id="i30" gradientUnits="userSpaceOnUse" x1="295.0" x2="536.2" y1="0" y2="0"><stop offset="0" stop-color="#8effd9"/><stop offset=".050" stop-color="#afffda"/><stop offset=".167" stop-color="#ceffd9"/><stop offset=".400" stop-color="#f5ffbd"/><stop offset=".467" stop-color="#fff8ab"/><stop offset=".733" stop-color="#ffb04d"/><stop offset=".967" stop-color="#ff840d"/><stop offset=".983" stop-color="#ff8200"/><stop offset="1" stop-color="#ff7f00"/></linearGradient><linearGradient id="i31" gradientUnits="userSpaceOnUse" x1="293.6" x2="542.6" y1="0" y2="0"><stop offset="0" stop-color="#98ffde"/><stop offset=".048" stop-color="#b7ffe0"/><stop offset=".177" stop-color="#d7ffde"/><stop offset=".403" stop-color="#faffc2"/><stop offset=".565" stop-color="#ffd787"/><stop offset=".774" stop-color="#ffa041"/><stop offset=".968" stop-color="#ff7d0d"/><stop offset=".984" stop-color="#ff7b00"/><stop offset="1" stop-color="#ff7900"/></linearGradient><linearGradient id="i32" gradientUnits="userSpaceOnUse" x1="292.1" x2="549.0" y1="0" y2="0"><stop offset="0" stop-color="#a2ffe3"/><stop offset=".047" stop-color="#bfffe5"/><stop offset=".156" stop-color="#daffe4"/><stop offset=".344" stop-color="#f3ffd3"/><stop offset=".422" stop-color="#fffac1"/><stop offset=".719" stop-color="#ffa650"/><stop offset=".969" stop-color="#ff770c"/><stop offset=".984" stop-color="#ff7500"/><stop offset="1" stop-color="#ff7200"/></linearGradient><linearGradient id="i33" gradientUnits="userSpaceOnUse" x1="290.7" x2="555.4" y1="0" y2="0"><stop offset="0" stop-color="#abffe7"/><stop offset=".045" stop-color="#c7ffe9"/><stop offset=".167" stop-color="#e1ffe9"/><stop offset=".348" stop-color="#f8ffd7"/><stop offset=".424" stop-color="#fff5c2"/><stop offset=".697" stop-color="#ffa456"/><stop offset=".955" stop-color="#ff7212"/><stop offset=".985" stop-color="#ff6e00"/><stop offset="1" stop-color="#ff6c00"/></linearGradient><linearGradient id="i34" gradientUnits="userSpaceOnUse" x1="289.3" x2="561.8" y1="0" y2="0"><stop offset="0" stop-color="#b3ffeb"/><stop offset=".044" stop-color="#cdffed"/><stop offset=".162" stop-color="#e6ffed"/><stop offset=".353" stop-color="#fcffdb"/><stop offset=".485" stop-color="#ffe0ac"/><stop offset=".691" stop-color="#ff9f58"/><stop offset=".926" stop-color="#ff701b"/><stop offset=".971" stop-color="#ff6a0c"/><stop offset=".985" stop-color="#ff6800"/><stop offset="1" stop-color="#ff6600"/></linearGradient><linearGradient id="i35" gradientUnits="userSpaceOnUse" x1="287.9" x2="568.2" y1="0" y2="0"><stop offset="0" stop-color="#bbffee"/><stop offset=".043" stop-color="#d3fff0"/><stop offset=".157" stop-color="#eafff1"/><stop offset=".343" stop-color="#fdffe1"/><stop offset=".486" stop-color="#ffdcad"/><stop offset=".686" stop-color="#ff9a59"/><stop offset=".914" stop-color="#ff6c1e"/><stop offset=".971" stop-color="#ff640c"/><stop offset=".986" stop-color="#ff6100"/><stop offset="1" stop-color="#ff5f00"/></linearGradient><linearGradient id="i36" gradientUnits="userSpaceOnUse" x1="286.5" x2="574.6" y1="0" y2="0"><stop offset="0" stop-color="#c2fff1"/><stop offset=".056" stop-color="#ddfff3"/><stop offset=".194" stop-color="#f1fff3"/><stop offset=".347" stop-color="#fffde3"/><stop offset=".500" stop-color="#ffd3a7"/><stop offset=".681" stop-color="#ff955a"/><stop offset=".931" stop-color="#ff631a"/><stop offset=".972" stop-color="#ff5d0b"/><stop offset=".986" stop-color="#ff5b00"/><stop offset="1" stop-color="#ff5900"/></linearGradient><linearGradient id="i37" gradientUnits="userSpaceOnUse" x1="285.1" x2="581.0" y1="0" y2="0"><stop offset="0" stop-color="#c8fff3"/><stop offset=".054" stop-color="#e2fff6"/><stop offset=".203" stop-color="#f4fff5"/><stop offset=".338" stop-color="#fffce8"/><stop offset=".473" stop-color="#ffd8b4"/><stop offset=".676" stop-color="#ff905a"/><stop offset=".892" stop-color="#ff6323"/><stop offset=".973" stop-color="#ff570b"/><stop offset=".986" stop-color="#ff5500"/><stop offset="1" stop-color="#ff5300"/></linearGradient><linearGradient id="i38" gradientUnits="userSpaceOnUse" x1="283.7" x2="587.4" y1="0" y2="0"><stop offset="0" stop-color="#cdfff6"/><stop offset=".053" stop-color="#e5fff8"/><stop offset=".184" stop-color="#f5fff8"/><stop offset=".329" stop-color="#fffceb"/><stop offset=".447" stop-color="#ffdec1"/><stop offset=".645" stop-color="#ff9364"/><stop offset=".829" stop-color="#ff6731"/><stop offset=".974" stop-color="#ff510b"/><stop offset=".987" stop-color="#ff4f00"/><stop offset="1" stop-color="#ff4d00"/></linearGradient><linearGradient id="i39" gradientUnits="userSpaceOnUse" x1="282.3" x2="593.8" y1="0" y2="0"><stop offset="0" stop-color="#d1fff7"/><stop offset=".051" stop-color="#e9fff9"/><stop offset=".244" stop-color="#fbfff8"/><stop offset=".346" stop-color="#fff7e8"/><stop offset=".474" stop-color="#ffd0b4"/><stop offset=".654" stop-color="#ff8a60"/><stop offset=".846" stop-color="#ff5e2e"/><stop offset=".974" stop-color="#ff4a0b"/><stop offset=".987" stop-color="#ff4800"/><stop offset="1" stop-color="#ff4700"/></linearGradient><linearGradient id="i40" gradientUnits="userSpaceOnUse" x1="280.8" x2="600.2" y1="0" y2="0"><stop offset="0" stop-color="#d5fff9"/><stop offset=".062" stop-color="#eefffb"/><stop offset=".287" stop-color="#fffef6"/><stop offset=".400" stop-color="#ffe8d7"/><stop offset=".650" stop-color="#ff8560"/><stop offset=".825" stop-color="#ff5c32"/><stop offset=".975" stop-color="#ff440b"/><stop offset=".988" stop-color="#ff4200"/><stop offset="1" stop-color="#ff4000"/></linearGradient><linearGradient id="i41" gradientUnits="userSpaceOnUse" x1="279.4" x2="606.6" y1="0" y2="0"><stop offset="0" stop-color="#d8fffa"/><stop offset=".049" stop-color="#edfffb"/><stop offset=".268" stop-color="#fffff9"/><stop offset=".378" stop-color="#ffece0"/><stop offset=".646" stop-color="#ff7f60"/><stop offset=".841" stop-color="#ff532f"/><stop offset=".976" stop-color="#ff3d0b"/><stop offset=".988" stop-color="#ff3b00"/><stop offset="1" stop-color="#ff3900"/></linearGradient><linearGradient id="i42" gradientUnits="userSpaceOnUse" x1="278.0" x2="613.0" y1="0" y2="0"><stop offset="0" stop-color="#dafffb"/><stop offset=".048" stop-color="#effffc"/><stop offset=".262" stop-color="#fffffb"/><stop offset=".369" stop-color="#ffede4"/><stop offset=".643" stop-color="#ff7a60"/><stop offset=".833" stop-color="#ff4e30"/><stop offset=".964" stop-color="#ff3810"/><stop offset=".988" stop-color="#ff3400"/><stop offset="1" stop-color="#ff3200"/></linearGradient><linearGradient id="i43" gradientUnits="userSpaceOnUse" x1="276.6" x2="619.4" y1="0" y2="0"><stop offset="0" stop-color="#dcfffc"/><stop offset=".047" stop-color="#f0fffd"/><stop offset=".244" stop-color="#fffffd"/><stop offset=".360" stop-color="#ffede7"/><stop offset=".477" stop-color="#ffbeb0"/><stop offset=".616" stop-color="#ff7d69"/><stop offset=".779" stop-color="#ff523c"/><stop offset=".965" stop-color="#ff310f"/><stop offset=".988" stop-color="#ff2d00"/><stop offset="1" stop-color="#ff2b00"/></linearGradient><linearGradient id="i44" gradientUnits="userSpaceOnUse" x1="275.2" x2="625.8" y1="0" y2="0"><stop offset="0" stop-color="#ddfffd"/><stop offset=".045" stop-color="#f1fffe"/><stop offset=".239" stop-color="#fffffd"/><stop offset=".352" stop-color="#ffeee9"/><stop offset=".466" stop-color="#ffbeb5"/><stop offset=".602" stop-color="#ff7b6d"/><stop offset=".739" stop-color="#ff5444"/><stop offset=".966" stop-color="#ff290f"/><stop offset=".989" stop-color="#ff2500"/><stop offset="1" stop-color="#ff2300"/></linearGradient><linearGradient id="i45" gradientUnits="userSpaceOnUse" x1="273.8" x2="632.2" y1="0" y2="0"><stop offset="0" stop-color="#ddfffe"/><stop offset=".056" stop-color="#f4fffe"/><stop offset=".278" stop-color="#fffbfa"/><stop offset=".378" stop-color="#ffe4e0"/><stop offset=".611" stop-color="#ff7168"/><stop offset=".767" stop-color="#ff483e"/><stop offset=".967" stop-color="#ff210f"/><stop offset=".989" stop-color="#ff1b00"/><stop offset="1" stop-color="#ff1900"/></linearGradient><linearGradient id="i46" gradientUnits="userSpaceOnUse" x1="272.4" x2="638.6" y1="0" y2="0"><stop offset="0" stop-color="#ddfffe"/><stop offset=".054" stop-color="#f4ffff"/><stop offset=".272" stop-color="#fffbfb"/><stop offset=".370" stop-color="#ffe4e3"/><stop offset=".598" stop-color="#ff6f6c"/><stop offset=".750" stop-color="#ff4541"/><stop offset=".967" stop-color="#ff160f"/><stop offset=".989" stop-color="#ff0f00"/><stop offset="1" stop-color="#ff0a00"/></linearGradient><linearGradient id="i47" gradientUnits="userSpaceOnUse" x1="271.0" x2="638.6" y1="0" y2="0"><stop offset="0" stop-color="#dcffff"/><stop offset=".043" stop-color="#f1ffff"/><stop offset=".217" stop-color="#ffffff"/><stop offset=".337" stop-color="#ffefef"/><stop offset=".435" stop-color="#ffc5c6"/><stop offset=".587" stop-color="#ff7173"/><stop offset=".717" stop-color="#ff494b"/><stop offset=".957" stop-color="#ff1218"/><stop offset=".989" stop-color="#ff000d"/><stop offset="1" stop-color="#ff0007"/></linearGradient><linearGradient id="i48" gradientUnits="userSpaceOnUse" x1="269.6" x2="629.7" y1="0" y2="0"><stop offset="0" stop-color="#dafeff"/><stop offset=".044" stop-color="#f1feff"/><stop offset=".222" stop-color="#fffeff"/><stop offset=".344" stop-color="#ffeff0"/><stop offset=".444" stop-color="#ffc5c9"/><stop offset=".611" stop-color="#ff6a72"/><stop offset=".756" stop-color="#ff4049"/><stop offset=".967" stop-color="#ff0e1f"/><stop offset=".989" stop-color="#ff001a"/><stop offset="1" stop-color="#ff0017"/></linearGradient><linearGradient id="i49" gradientUnits="userSpaceOnUse" x1="268.1" x2="620.4" y1="0" y2="0"><stop offset="0" stop-color="#d8fdff"/><stop offset=".045" stop-color="#f0feff"/><stop offset=".205" stop-color="#fefeff"/><stop offset=".330" stop-color="#fff4f6"/><stop offset=".432" stop-color="#ffd0d6"/><stop offset=".625" stop-color="#ff6875"/><stop offset=".761" stop-color="#ff3f4e"/><stop offset=".966" stop-color="#ff0e28"/><stop offset=".989" stop-color="#ff0024"/><stop offset="1" stop-color="#ff0021"/></linearGradient><linearGradient id="i50" gradientUnits="userSpaceOnUse" x1="266.7" x2="611.2" y1="0" y2="0"><stop offset="0" stop-color="#d5fcff"/><stop offset=".035" stop-color="#ebfdff"/><stop offset=".140" stop-color="#fbfeff"/><stop offset=".326" stop-color="#fff6f8"/><stop offset=".430" stop-color="#ffd5dd"/><stop offset=".640" stop-color="#ff6678"/><stop offset=".779" stop-color="#ff3c51"/><stop offset=".965" stop-color="#ff0e30"/><stop offset=".988" stop-color="#ff002c"/><stop offset="1" stop-color="#ff002a"/></linearGradient><linearGradient id="i51" gradientUnits="userSpaceOnUse" x1="265.3" x2="602.0" y1="0" y2="0"><stop offset="0" stop-color="#d2fbff"/><stop offset=".048" stop-color="#edfcff"/><stop offset=".167" stop-color="#fcfdff"/><stop offset=".321" stop-color="#fff7fa"/><stop offset=".417" stop-color="#ffdee6"/><stop offset=".667" stop-color="#ff5e76"/><stop offset=".833" stop-color="#ff304d"/><stop offset=".964" stop-color="#ff0e37"/><stop offset=".988" stop-color="#ff0033"/><stop offset="1" stop-color="#ff0031"/></linearGradient><linearGradient id="i52" gradientUnits="userSpaceOnUse" x1="263.9" x2="592.8" y1="0" y2="0"><stop offset="0" stop-color="#cdf9ff"/><stop offset=".037" stop-color="#e6fbff"/><stop offset=".134" stop-color="#f9fdff"/><stop offset=".329" stop-color="#fff6fb"/><stop offset=".427" stop-color="#ffdde7"/><stop offset=".549" stop-color="#ff9fb4"/><stop offset=".695" stop-color="#ff5775"/><stop offset=".878" stop-color="#ff264c"/><stop offset="1" stop-color="#ff0038"/></linearGradient><linearGradient id="i53" gradientUnits="userSpaceOnUse" x1="262.5" x2="583.5" y1="0" y2="0"><stop offset="0" stop-color="#c8f7ff"/><stop offset=".050" stop-color="#e8faff"/><stop offset=".163" stop-color="#fafcff"/><stop offset=".338" stop-color="#fff5fb"/><stop offset=".438" stop-color="#ffdce8"/><stop offset=".700" stop-color="#ff587c"/><stop offset=".863" stop-color="#ff2a55"/><stop offset=".975" stop-color="#ff0943"/><stop offset=".988" stop-color="#ff0041"/><stop offset="1" stop-color="#ff003f"/></linearGradient><linearGradient id="i54" gradientUnits="userSpaceOnUse" x1="261.1" x2="574.3" y1="0" y2="0"><stop offset="0" stop-color="#c2f5ff"/><stop offset=".038" stop-color="#dff8ff"/><stop offset=".141" stop-color="#f7fbff"/><stop offset=".333" stop-color="#fff6fc"/><stop offset=".449" stop-color="#ffdae8"/><stop offset=".590" stop-color="#ff94b2"/><stop offset=".731" stop-color="#ff507a"/><stop offset=".923" stop-color="#ff1b51"/><stop offset=".974" stop-color="#ff0949"/><stop offset=".987" stop-color="#ff0047"/><stop offset="1" stop-color="#ff0045"/></linearGradient><linearGradient id="i55" gradientUnits="userSpaceOnUse" x1="259.7" x2="565.1" y1="0" y2="0"><stop offset="0" stop-color="#bbf3ff"/><stop offset=".039" stop-color="#daf6ff"/><stop offset=".118" stop-color="#f2f9ff"/><stop offset=".342" stop-color="#fff5fc"/><stop offset=".461" stop-color="#ffd8e9"/><stop offset=".737" stop-color="#ff5280"/><stop offset=".934" stop-color="#ff1855"/><stop offset=".987" stop-color="#ff004e"/><stop offset="1" stop-color="#ff004c"/></linearGradient><linearGradient id="i56" gradientUnits="userSpaceOnUse" x1="258.3" x2="555.9" y1="0" y2="0"><stop offset="0" stop-color="#b4f0ff"/><stop offset=".041" stop-color="#d5f3ff"/><stop offset=".122" stop-color="#eff8ff"/><stop offset=".338" stop-color="#fff5fd"/><stop offset=".459" stop-color="#ffdaec"/><stop offset=".595" stop-color="#ff9cc0"/><stop offset=".757" stop-color="#ff4e82"/><stop offset=".946" stop-color="#ff155a"/><stop offset=".986" stop-color="#ff0054"/><stop offset="1" stop-color="#ff0052"/></linearGradient><linearGradient id="i57" gradientUnits="userSpaceOnUse" x1="256.8" x2="546.6" y1="0" y2="0"><stop offset="0" stop-color="#abedff"/><stop offset=".042" stop-color="#cff0ff"/><stop offset=".111" stop-color="#e9f5ff"/><stop offset=".264" stop-color="#fbf7ff"/><stop offset=".375" stop-color="#ffeffb"/><stop offset=".500" stop-color="#ffcde5"/><stop offset=".778" stop-color="#ff4a84"/><stop offset=".972" stop-color="#ff0a5c"/><stop offset=".986" stop-color="#ff005a"/><stop offset="1" stop-color="#ff0058"/></linearGradient><linearGradient id="i58" gradientUnits="userSpaceOnUse" x1="255.4" x2="537.4" y1="0" y2="0"><stop offset="0" stop-color="#a2e9ff"/><stop offset=".043" stop-color="#c9edff"/><stop offset=".129" stop-color="#e9f3ff"/><stop offset=".343" stop-color="#fff2ff"/><stop offset=".486" stop-color="#ffd4ec"/><stop offset=".657" stop-color="#ff86b6"/><stop offset=".814" stop-color="#ff4082"/><stop offset=".971" stop-color="#ff0a63"/><stop offset=".986" stop-color="#ff0161"/><stop offset="1" stop-color="#ff015e"/></linearGradient><linearGradient id="i59" gradientUnits="userSpaceOnUse" x1="254.0" x2="528.2" y1="0" y2="0"><stop offset="0" stop-color="#99e5ff"/><stop offset=".043" stop-color="#c1e9ff"/><stop offset=".116" stop-color="#e0efff"/><stop offset=".246" stop-color="#f6f3ff"/><stop offset=".406" stop-color="#ffe8fa"/><stop offset=".551" stop-color="#ffbddf"/><stop offset=".826" stop-color="#ff3f87"/><stop offset=".971" stop-color="#ff0b69"/><stop offset=".986" stop-color="#ff0167"/><stop offset="1" stop-color="#ff0165"/></linearGradient><linearGradient id="i60" gradientUnits="userSpaceOnUse" x1="252.6" x2="519.0" y1="0" y2="0"><stop offset="0" stop-color="#8ee0ff"/><stop offset=".030" stop-color="#afe3ff"/><stop offset=".104" stop-color="#d6eaff"/><stop offset=".224" stop-color="#f0efff"/><stop offset=".403" stop-color="#ffe7fc"/><stop offset=".552" stop-color="#ffbee3"/><stop offset=".866" stop-color="#ff3485"/><stop offset=".970" stop-color="#ff0c70"/><stop offset=".985" stop-color="#ff026e"/><stop offset="1" stop-color="#ff026c"/></linearGradient><linearGradient id="i61" gradientUnits="userSpaceOnUse" x1="251.2" x2="509.7" y1="0" y2="0"><stop offset="0" stop-color="#84dbff"/><stop offset=".046" stop-color="#b1e0ff"/><stop offset=".123" stop-color="#d6e6ff"/><stop offset=".262" stop-color="#f1ebff"/><stop offset=".415" stop-color="#ffe2fd"/><stop offset=".554" stop-color="#ffbee6"/><stop offset=".908" stop-color="#ff2884"/><stop offset=".985" stop-color="#ff0475"/><stop offset="1" stop-color="#ff0372"/></linearGradient><linearGradient id="i62" gradientUnits="userSpaceOnUse" x1="249.8" x2="500.5" y1="0" y2="0"><stop offset="0" stop-color="#79d5ff"/><stop offset=".048" stop-color="#a9daff"/><stop offset=".143" stop-color="#d5e2ff"/><stop offset=".302" stop-color="#f2e6ff"/><stop offset=".444" stop-color="#ffdbfb"/><stop offset=".603" stop-color="#ffacde"/><stop offset=".952" stop-color="#ff1982"/><stop offset=".984" stop-color="#ff067c"/><stop offset="1" stop-color="#ff057a"/></linearGradient><linearGradient id="i63" gradientUnits="userSpaceOnUse" x1="248.4" x2="491.3" y1="0" y2="0"><stop offset="0" stop-color="#6ecfff"/><stop offset=".033" stop-color="#93d2ff"/><stop offset=".098" stop-color="#bbd8ff"/><stop offset=".213" stop-color="#e0e0ff"/><stop offset=".410" stop-color="#fcdcff"/><stop offset=".557" stop-color="#ffbcec"/><stop offset=".787" stop-color="#ff61b3"/><stop offset=".967" stop-color="#ff1487"/><stop offset=".984" stop-color="#ff0884"/><stop offset="1" stop-color="#ff0781"/></linearGradient><linearGradient id="i64" gradientUnits="userSpaceOnUse" x1="247.0" x2="482.1" y1="0" y2="0"><stop offset="0" stop-color="#63c8ff"/><stop offset=".034" stop-color="#8accff"/><stop offset=".119" stop-color="#bbd3ff"/><stop offset=".254" stop-color="#e2dbff"/><stop offset=".458" stop-color="#ffd2ff"/><stop offset=".627" stop-color="#ffa4e1"/><stop offset=".966" stop-color="#ff178f"/><stop offset=".983" stop-color="#ff0b8c"/><stop offset="1" stop-color="#ff0a89"/></linearGradient><linearGradient id="i65" gradientUnits="userSpaceOnUse" x1="245.6" x2="472.9" y1="0" y2="0"><stop offset="0" stop-color="#58c2ff"/><stop offset=".035" stop-color="#80c5ff"/><stop offset=".105" stop-color="#abcbff"/><stop offset=".228" stop-color="#d6d3ff"/><stop offset=".439" stop-color="#f9ceff"/><stop offset=".561" stop-color="#ffb7f2"/><stop offset=".772" stop-color="#ff6ec5"/><stop offset=".965" stop-color="#ff1b98"/><stop offset=".982" stop-color="#ff0f94"/><stop offset="1" stop-color="#ff0d91"/></linearGradient><linearGradient id="i66" gradientUnits="userSpaceOnUse" x1="244.1" x2="463.6" y1="0" y2="0"><stop offset="0" stop-color="#4ebbff"/><stop offset=".036" stop-color="#77beff"/><stop offset=".127" stop-color="#acc5ff"/><stop offset=".273" stop-color="#d9ccff"/><stop offset=".473" stop-color="#fac4ff"/><stop offset=".618" stop-color="#ffa5ec"/><stop offset=".873" stop-color="#ff49b4"/><stop offset=".982" stop-color="#ff139d"/><stop offset="1" stop-color="#ff1099"/></linearGradient><linearGradient id="i67" gradientUnits="userSpaceOnUse" x1="242.7" x2="454.4" y1="0" y2="0"><stop offset="0" stop-color="#44b3ff"/><stop offset=".038" stop-color="#6db6ff"/><stop offset=".132" stop-color="#a4bdff"/><stop offset=".283" stop-color="#d4c4ff"/><stop offset=".528" stop-color="#feb7ff"/><stop offset=".717" stop-color="#ff85dd"/><stop offset=".943" stop-color="#ff2ead"/><stop offset=".981" stop-color="#ff17a5"/><stop offset="1" stop-color="#ff14a1"/></linearGradient><linearGradient id="i68" gradientUnits="userSpaceOnUse" x1="241.3" x2="445.2" y1="0" y2="0"><stop offset="0" stop-color="#3aacff"/><stop offset=".039" stop-color="#65afff"/><stop offset=".137" stop-color="#9cb5ff"/><stop offset=".275" stop-color="#cabaff"/><stop offset=".510" stop-color="#f6b2ff"/><stop offset=".608" stop-color="#ffa1f6"/><stop offset=".843" stop-color="#ff5ac9"/><stop offset=".961" stop-color="#ff28b1"/><stop offset=".980" stop-color="#ff1bae"/><stop offset="1" stop-color="#ff18aa"/></linearGradient><linearGradient id="i69" gradientUnits="userSpaceOnUse" x1="239.9" x2="436.0" y1="0" y2="0"><stop offset="0" stop-color="#31a5ff"/><stop offset=".041" stop-color="#5da7ff"/><stop offset=".143" stop-color="#95acff"/><stop offset=".306" stop-color="#c9b1ff"/><stop offset=".551" stop-color="#f8a5ff"/><stop offset=".633" stop-color="#ff97f7"/><stop offset=".857" stop-color="#ff56cd"/><stop offset=".959" stop-color="#ff2cba"/><stop offset=".980" stop-color="#ff1eb6"/><stop offset="1" stop-color="#ff1bb2"/></linearGradient><linearGradient id="i70" gradientUnits="userSpaceOnUse" x1="238.5" x2="426.7" y1="0" y2="0"><stop offset="0" stop-color="#299eff"/><stop offset=".043" stop-color="#559fff"/><stop offset=".128" stop-color="#85a3ff"/><stop offset=".319" stop-color="#c4a8ff"/><stop offset=".574" stop-color="#f69bff"/><stop offset=".660" stop-color="#ff8cf8"/><stop offset=".894" stop-color="#ff4ace"/><stop offset=".979" stop-color="#ff21be"/><stop offset="1" stop-color="#ff1eba"/></linearGradient><linearGradient id="i71" gradientUnits="userSpaceOnUse" x1="237.1" x2="417.5" y1="0" y2="0"><stop offset="0" stop-color="#2297ff"/><stop offset=".044" stop-color="#4e98ff"/><stop offset=".133" stop-color="#7e9aff"/><stop offset=".311" stop-color="#b99eff"/><stop offset=".578" stop-color="#f092ff"/><stop offset=".689" stop-color="#ff81fa"/><stop offset=".889" stop-color="#ff4bd6"/><stop offset=".978" stop-color="#ff23c6"/><stop offset="1" stop-color="#ff20c2"/></linearGradient><linearGradient id="i72" gradientUnits="userSpaceOnUse" x1="235.7" x2="408.3" y1="0" y2="0"><stop offset="0" stop-color="#1c90ff"/><stop offset=".047" stop-color="#4890ff"/><stop offset=".140" stop-color="#7892ff"/><stop offset=".326" stop-color="#b494ff"/><stop offset=".605" stop-color="#ed86ff"/><stop offset=".721" stop-color="#ff75fb"/><stop offset=".930" stop-color="#ff3cd6"/><stop offset=".977" stop-color="#ff25ce"/><stop offset="1" stop-color="#ff22cb"/></linearGradient><linearGradient id="i73" gradientUnits="userSpaceOnUse" x1="234.3" x2="399.1" y1="0" y2="0"><stop offset="0" stop-color="#1689ff"/><stop offset=".049" stop-color="#4289ff"/><stop offset=".146" stop-color="#728aff"/><stop offset=".341" stop-color="#af8aff"/><stop offset=".634" stop-color="#eb7aff"/><stop offset=".756" stop-color="#ff69fc"/><stop offset=".927" stop-color="#ff3cdf"/><stop offset=".976" stop-color="#ff25d7"/><stop offset="1" stop-color="#ff22d3"/></linearGradient><linearGradient id="i74" gradientUnits="userSpaceOnUse" x1="232.8" x2="389.8" y1="0" y2="0"><stop offset="0" stop-color="#1283ff"/><stop offset=".051" stop-color="#3e82ff"/><stop offset=".179" stop-color="#7682ff"/><stop offset=".436" stop-color="#bc7eff"/><stop offset=".718" stop-color="#f268ff"/><stop offset=".821" stop-color="#ff56f9"/><stop offset=".949" stop-color="#ff31e4"/><stop offset=".974" stop-color="#ff24e0"/><stop offset="1" stop-color="#ff21dc"/></linearGradient><linearGradient id="i75" gradientUnits="userSpaceOnUse" x1="231.4" x2="380.6" y1="0" y2="0"><stop offset="0" stop-color="#0e7dff"/><stop offset=".054" stop-color="#397cff"/><stop offset=".162" stop-color="#687aff"/><stop offset=".378" stop-color="#a676ff"/><stop offset=".703" stop-color="#e662ff"/><stop offset=".865" stop-color="#ff47fb"/><stop offset=".946" stop-color="#ff2fed"/><stop offset=".973" stop-color="#ff22e9"/><stop offset="1" stop-color="#ff20e5"/></linearGradient><linearGradient id="i76" gradientUnits="userSpaceOnUse" x1="230.0" x2="371.4" y1="0" y2="0"><stop offset="0" stop-color="#0b77ff"/><stop offset=".057" stop-color="#3675ff"/><stop offset=".200" stop-color="#6e72ff"/><stop offset=".486" stop-color="#b469ff"/><stop offset=".771" stop-color="#e951ff"/><stop offset=".914" stop-color="#ff36fd"/><stop offset=".971" stop-color="#ff1ff3"/><stop offset="1" stop-color="#ff1eef"/></linearGradient><linearGradient id="i77" gradientUnits="userSpaceOnUse" x1="228.6" x2="362.2" y1="0" y2="0"><stop offset="0" stop-color="#0871ff"/><stop offset=".061" stop-color="#336fff"/><stop offset=".212" stop-color="#6a6bff"/><stop offset=".545" stop-color="#b75eff"/><stop offset=".848" stop-color="#eb3fff"/><stop offset=".939" stop-color="#fb29ff"/><stop offset=".970" stop-color="#ff1cfe"/><stop offset="1" stop-color="#ff1bf9"/></linearGradient><linearGradient id="i78" gradientUnits="userSpaceOnUse" x1="227.2" x2="352.9" y1="0" y2="0"><stop offset="0" stop-color="#066bff"/><stop offset=".065" stop-color="#3169ff"/><stop offset=".226" stop-color="#6764ff"/><stop offset=".581" stop-color="#b453ff"/><stop offset=".839" stop-color="#df3aff"/><stop offset=".935" stop-color="#ef25ff"/><stop offset=".968" stop-color="#f418ff"/><stop offset="1" stop-color="#f917ff"/></linearGradient><linearGradient id="i79" gradientUnits="userSpaceOnUse" x1="225.8" x2="343.7" y1="0" y2="0"><stop offset="0" stop-color="#0466ff"/><stop offset=".069" stop-color="#2f63ff"/><stop offset=".241" stop-color="#655dff"/><stop offset=".621" stop-color="#b149ff"/><stop offset=".897" stop-color="#dd29ff"/><stop offset=".966" stop-color="#e814ff"/><stop offset="1" stop-color="#ed13ff"/></linearGradient><linearGradient id="i80" gradientUnits="userSpaceOnUse" x1="224.4" x2="334.5" y1="0" y2="0"><stop offset="0" stop-color="#0361ff"/><stop offset=".071" stop-color="#2c5eff"/><stop offset=".250" stop-color="#6157ff"/><stop offset=".679" stop-color="#b13eff"/><stop offset=".893" stop-color="#d124ff"/><stop offset=".964" stop-color="#db10ff"/><stop offset="1" stop-color="#e010ff"/></linearGradient><linearGradient id="i81" gradientUnits="userSpaceOnUse" x1="223.0" x2="325.3" y1="0" y2="0"><stop offset="0" stop-color="#025bff"/><stop offset=".077" stop-color="#2b58ff"/><stop offset=".308" stop-color="#674eff"/><stop offset=".769" stop-color="#b430ff"/><stop offset=".923" stop-color="#ca18ff"/><stop offset=".962" stop-color="#cf0cff"/><stop offset="1" stop-color="#d40cff"/></linearGradient><linearGradient id="i82" gradientUnits="userSpaceOnUse" x1="221.5" x2="316.0" y1="0" y2="0"><stop offset="0" stop-color="#0156ff"/><stop offset=".083" stop-color="#2a53ff"/><stop offset=".292" stop-color="#5d4aff"/><stop offset=".750" stop-color="#a72cff"/><stop offset=".917" stop-color="#bd14ff"/><stop offset=".958" stop-color="#c209ff"/><stop offset="1" stop-color="#c809ff"/></linearGradient><linearGradient id="i83" gradientUnits="userSpaceOnUse" x1="220.1" x2="306.8" y1="0" y2="0"><stop offset="0" stop-color="#0151ff"/><stop offset=".091" stop-color="#294eff"/><stop offset=".318" stop-color="#5c43ff"/><stop offset=".773" stop-color="#9f25ff"/><stop offset=".909" stop-color="#b012ff"/><stop offset=".955" stop-color="#b606ff"/><stop offset="1" stop-color="#bb06ff"/></linearGradient><linearGradient id="i84" gradientUnits="userSpaceOnUse" x1="218.7" x2="297.6" y1="0" y2="0"><stop offset="0" stop-color="#014cff"/><stop offset=".100" stop-color="#2948ff"/><stop offset=".400" stop-color="#633aff"/><stop offset=".800" stop-color="#971eff"/><stop offset=".950" stop-color="#a904ff"/><stop offset="1" stop-color="#ae04ff"/></linearGradient><linearGradient id="i85" gradientUnits="userSpaceOnUse" x1="217.3" x2="288.4" y1="0" y2="0"><stop offset="0" stop-color="#0047ff"/><stop offset=".111" stop-color="#2843ff"/><stop offset=".389" stop-color="#5a36ff"/><stop offset=".833" stop-color="#9016ff"/><stop offset=".944" stop-color="#9c03ff"/><stop offset="1" stop-color="#a203ff"/></linearGradient><linearGradient id="i86" gradientUnits="userSpaceOnUse" x1="215.9" x2="279.2" y1="0" y2="0"><stop offset="0" stop-color="#0042ff"/><stop offset=".125" stop-color="#283dff"/><stop offset=".438" stop-color="#592fff"/><stop offset=".812" stop-color="#8315ff"/><stop offset=".938" stop-color="#8f02ff"/><stop offset="1" stop-color="#9502ff"/></linearGradient><linearGradient id="i87" gradientUnits="userSpaceOnUse" x1="214.5" x2="269.9" y1="0" y2="0"><stop offset="0" stop-color="#003cff"/><stop offset=".143" stop-color="#2737ff"/><stop offset=".500" stop-color="#5927ff"/><stop offset=".857" stop-color="#7b0cff"/><stop offset=".929" stop-color="#8201ff"/><stop offset="1" stop-color="#8801ff"/></linearGradient><linearGradient id="i88" gradientUnits="userSpaceOnUse" x1="213.1" x2="260.7" y1="0" y2="0"><stop offset="0" stop-color="#0036ff"/><stop offset=".167" stop-color="#2731ff"/><stop offset=".583" stop-color="#581fff"/><stop offset=".833" stop-color="#6e0cff"/><stop offset=".917" stop-color="#7400ff"/><stop offset="1" stop-color="#7b01ff"/></linearGradient><linearGradient id="i89" gradientUnits="userSpaceOnUse" x1="211.7" x2="251.5" y1="0" y2="0"><stop offset="0" stop-color="#0030ff"/><stop offset=".200" stop-color="#272aff"/><stop offset=".700" stop-color="#5813ff"/><stop offset=".900" stop-color="#6600ff"/><stop offset="1" stop-color="#6d00ff"/></linearGradient><linearGradient id="i90" gradientUnits="userSpaceOnUse" x1="210.3" x2="242.3" y1="0" y2="0"><stop offset="0" stop-color="#0029ff"/><stop offset=".250" stop-color="#2722ff"/><stop offset=".750" stop-color="#4f0bff"/><stop offset=".875" stop-color="#5700ff"/><stop offset="1" stop-color="#5f00ff"/></linearGradient><linearGradient id="i91" gradientUnits="userSpaceOnUse" x1="208.8" x2="233.0" y1="0" y2="0"><stop offset="0" stop-color="#0022ff"/><stop offset=".333" stop-color="#2719ff"/><stop offset=".833" stop-color="#4700ff"/><stop offset="1" stop-color="#4f00ff"/></linearGradient><linearGradient id="i92" gradientUnits="userSpaceOnUse" x1="207.4" x2="223.8" y1="0" y2="0"><stop offset="0" stop-color="#0019ff"/><stop offset=".500" stop-color="#270bff"/><stop offset=".750" stop-color="#3300ff"/><stop offset="1" stop-color="#3e00ff"/></linearGradient><linearGradient id="i93" gradientUnits="userSpaceOnUse" x1="206.7" x2="214.6" y1="0" y2="0"><stop offset="0" stop-color="#000aff"/><stop offset=".500" stop-color="#1900ff"/><stop offset="1" stop-color="#2800ff"/></linearGradient>
</defs>
<rect x="9.4" y="32.5" width="790.6" height="691.2" fill="#02080a"/>
<path d="M75.5 32V724M163.5 32V724M251.5 32V724M339.5 32V724M426.5 32V724M514.5 32V724M602.5 32V724M690.5 32V724M9 620.5H801M9 550.5H801M9 481.5H801M9 412.5H801M9 343.5H801M9 274.5H801M9 205.5H801M9 136.5H801M9 67.5H801" stroke="#606666" stroke-width="1" fill="none"/>
<g clip-path="url(#cl)"><rect x="128.6" y="107" width="49.4" height="4.6" fill="url(#o0)"/><rect x="118.4" y="111" width="71.0" height="4.6" fill="url(#o1)"/><rect x="111.2" y="115" width="87.8" height="4.6" fill="url(#o2)"/><rect x="106.0" y="119" width="102.2" height="4.6" fill="url(#o3)"/><rect x="102.0" y="123" width="115.1" height="4.6" fill="url(#o4)"/><rect x="98.6" y="127" width="127.0" height="4.6" fill="url(#o5)"/><rect x="95.8" y="131" width="137.7" height="4.6" fill="url(#o6)"/><rect x="93.4" y="135" width="147.4" height="4.6" fill="url(#o7)"/><rect x="91.3" y="139" width="156.3" height="4.6" fill="url(#o8)"/><rect x="89.5" y="143" width="164.8" height="4.6" fill="url(#o9)"/><rect x="87.8" y="147" width="173.0" height="4.6" fill="url(#o10)"/><rect x="86.3" y="151" width="181.2" height="4.6" fill="url(#o11)"/><rect x="84.9" y="155" width="189.4" height="4.6" fill="url(#o12)"/><rect x="83.7" y="159" width="197.1" height="4.6" fill="url(#o13)"/><rect x="82.7" y="163" width="204.2" height="4.6" fill="url(#o14)"/><rect x="82.0" y="167" width="210.9" height="4.6" fill="url(#o15)"/><rect x="81.3" y="171" width="217.3" height="4.6" fill="url(#o16)"/><rect x="80.7" y="175" width="223.6" height="4.6" fill="url(#o17)"/><rect x="80.0" y="179" width="229.8" height="4.6" fill="url(#o18)"/><rect x="79.5" y="183" width="235.8" height="4.6" fill="url(#o19)"/><rect x="78.9" y="187" width="241.8" height="4.6" fill="url(#o20)"/><rect x="78.5" y="191" width="247.7" height="4.6" fill="url(#o21)"/><rect x="78.1" y="195" width="253.5" height="4.6" fill="url(#o22)"/><rect x="77.8" y="199" width="259.2" height="4.6" fill="url(#o23)"/><rect x="77.5" y="203" width="264.8" height="4.6" fill="url(#o24)"/><rect x="77.2" y="207" width="270.4" height="4.6" fill="url(#o25)"/><rect x="77.0" y="211" width="276.0" height="4.6" fill="url(#o26)"/><rect x="76.8" y="215" width="281.5" height="4.6" fill="url(#o27)"/><rect x="76.6" y="219" width="286.9" height="4.6" fill="url(#o28)"/><rect x="76.4" y="223" width="292.4" height="4.6" fill="url(#o29)"/><rect x="76.2" y="227" width="297.8" height="4.6" fill="url(#o30)"/><rect x="76.1" y="231" width="303.2" height="4.6" fill="url(#o31)"/><rect x="75.9" y="235" width="308.6" height="4.6" fill="url(#o32)"/><rect x="75.8" y="239" width="313.9" height="4.6" fill="url(#o33)"/><rect x="75.7" y="243" width="319.3" height="4.6" fill="url(#o34)"/><rect x="75.6" y="247" width="324.6" height="4.6" fill="url(#o35)"/><rect x="75.5" y="251" width="329.9" height="4.6" fill="url(#o36)"/><rect x="75.5" y="255" width="335.2" height="4.6" fill="url(#o37)"/><rect x="75.5" y="259" width="340.6" height="4.6" fill="url(#o38)"/><rect x="75.5" y="263" width="346.0" height="4.6" fill="url(#o39)"/><rect x="75.5" y="267" width="351.5" height="4.6" fill="url(#o40)"/><rect x="75.5" y="271" width="357.0" height="4.6" fill="url(#o41)"/><rect x="75.6" y="275" width="362.3" height="4.6" fill="url(#o42)"/><rect x="75.6" y="279" width="367.4" height="4.6" fill="url(#o43)"/><rect x="75.7" y="283" width="372.3" height="4.6" fill="url(#o44)"/><rect x="75.9" y="287" width="377.1" height="4.6" fill="url(#o45)"/><rect x="76.0" y="291" width="381.9" height="4.6" fill="url(#o46)"/><rect x="76.3" y="295" width="386.5" height="4.6" fill="url(#o47)"/><rect x="76.6" y="299" width="391.1" height="4.6" fill="url(#o48)"/><rect x="77.0" y="303" width="395.6" height="4.6" fill="url(#o49)"/><rect x="77.3" y="307" width="400.2" height="4.6" fill="url(#o50)"/><rect x="77.7" y="311" width="404.7" height="4.6" fill="url(#o51)"/><rect x="78.0" y="315" width="409.3" height="4.6" fill="url(#o52)"/><rect x="78.4" y="319" width="413.9" height="4.6" fill="url(#o53)"/><rect x="78.7" y="323" width="418.5" height="4.6" fill="url(#o54)"/><rect x="79.1" y="327" width="423.2" height="4.6" fill="url(#o55)"/><rect x="79.5" y="331" width="427.8" height="4.6" fill="url(#o56)"/><rect x="79.9" y="335" width="432.5" height="4.6" fill="url(#o57)"/><rect x="80.3" y="339" width="437.2" height="4.6" fill="url(#o58)"/><rect x="80.8" y="343" width="441.8" height="4.6" fill="url(#o59)"/><rect x="81.3" y="347" width="446.5" height="4.6" fill="url(#o60)"/><rect x="81.7" y="351" width="451.1" height="4.6" fill="url(#o61)"/><rect x="82.2" y="355" width="455.7" height="4.6" fill="url(#o62)"/><rect x="82.7" y="359" width="460.3" height="4.6" fill="url(#o63)"/><rect x="83.3" y="363" width="464.9" height="4.6" fill="url(#o64)"/><rect x="83.8" y="367" width="469.4" height="4.6" fill="url(#o65)"/><rect x="84.4" y="371" width="473.8" height="4.6" fill="url(#o66)"/><rect x="85.0" y="375" width="478.2" height="4.6" fill="url(#o67)"/><rect x="85.7" y="379" width="482.5" height="4.6" fill="url(#o68)"/><rect x="86.4" y="383" width="486.7" height="4.6" fill="url(#o69)"/><rect x="87.2" y="387" width="490.8" height="4.6" fill="url(#o70)"/><rect x="88.0" y="391" width="494.8" height="4.6" fill="url(#o71)"/><rect x="88.9" y="395" width="498.8" height="4.6" fill="url(#o72)"/><rect x="89.8" y="399" width="502.8" height="4.6" fill="url(#o73)"/><rect x="90.8" y="403" width="506.7" height="4.6" fill="url(#o74)"/><rect x="91.8" y="407" width="510.7" height="4.6" fill="url(#o75)"/><rect x="92.7" y="411" width="514.8" height="4.6" fill="url(#o76)"/><rect x="93.8" y="415" width="519.4" height="4.6" fill="url(#o77)"/><rect x="94.8" y="419" width="524.5" height="4.6" fill="url(#o78)"/><rect x="95.9" y="423" width="528.7" height="4.6" fill="url(#o79)"/><rect x="97.0" y="427" width="532.7" height="4.6" fill="url(#o80)"/><rect x="98.1" y="431" width="536.6" height="4.6" fill="url(#o81)"/><rect x="99.3" y="435" width="540.4" height="4.6" fill="url(#o82)"/><rect x="100.4" y="439" width="544.3" height="4.6" fill="url(#o83)"/><rect x="101.6" y="443" width="548.1" height="4.6" fill="url(#o84)"/><rect x="102.7" y="447" width="552.0" height="4.6" fill="url(#o85)"/><rect x="103.9" y="451" width="555.8" height="4.6" fill="url(#o86)"/><rect x="105.1" y="455" width="559.7" height="4.6" fill="url(#o87)"/><rect x="106.3" y="459" width="563.5" height="4.6" fill="url(#o88)"/><rect x="107.5" y="463" width="567.3" height="4.6" fill="url(#o89)"/><rect x="108.7" y="467" width="571.2" height="4.6" fill="url(#o90)"/><rect x="109.9" y="471" width="575.0" height="4.6" fill="url(#o91)"/><rect x="111.1" y="475" width="578.9" height="4.6" fill="url(#o92)"/><rect x="112.4" y="479" width="582.8" height="4.6" fill="url(#o93)"/><rect x="113.6" y="483" width="586.7" height="4.6" fill="url(#o94)"/><rect x="114.8" y="487" width="590.5" height="4.6" fill="url(#o95)"/><rect x="116.1" y="491" width="594.4" height="4.6" fill="url(#o96)"/><rect x="117.3" y="495" width="595.7" height="4.6" fill="url(#o97)"/><rect x="118.5" y="499" width="592.2" height="4.6" fill="url(#o98)"/><rect x="119.8" y="503" width="580.1" height="4.6" fill="url(#o99)"/><rect x="121.1" y="507" width="567.9" height="4.6" fill="url(#o100)"/><rect x="122.4" y="511" width="555.7" height="4.6" fill="url(#o101)"/><rect x="123.7" y="515" width="543.5" height="4.6" fill="url(#o102)"/><rect x="125.1" y="519" width="531.3" height="4.6" fill="url(#o103)"/><rect x="126.5" y="523" width="519.0" height="4.6" fill="url(#o104)"/><rect x="127.9" y="527" width="506.8" height="4.6" fill="url(#o105)"/><rect x="129.3" y="531" width="494.5" height="4.6" fill="url(#o106)"/><rect x="130.7" y="535" width="482.2" height="4.6" fill="url(#o107)"/><rect x="132.1" y="539" width="469.9" height="4.6" fill="url(#o108)"/><rect x="133.5" y="543" width="457.6" height="4.6" fill="url(#o109)"/><rect x="134.9" y="547" width="445.4" height="4.6" fill="url(#o110)"/><rect x="136.2" y="551" width="433.2" height="4.6" fill="url(#o111)"/><rect x="137.5" y="555" width="421.1" height="4.6" fill="url(#o112)"/><rect x="138.8" y="559" width="408.9" height="4.6" fill="url(#o113)"/><rect x="140.1" y="563" width="396.7" height="4.6" fill="url(#o114)"/><rect x="141.6" y="567" width="384.3" height="4.6" fill="url(#o115)"/><rect x="143.2" y="571" width="371.9" height="4.6" fill="url(#o116)"/><rect x="144.8" y="575" width="359.5" height="4.6" fill="url(#o117)"/><rect x="146.4" y="579" width="347.0" height="4.6" fill="url(#o118)"/><rect x="148.1" y="583" width="334.4" height="4.6" fill="url(#o119)"/><rect x="149.8" y="587" width="321.9" height="4.6" fill="url(#o120)"/><rect x="151.5" y="591" width="309.3" height="4.6" fill="url(#o121)"/><rect x="153.2" y="595" width="296.7" height="4.6" fill="url(#o122)"/><rect x="155.0" y="599" width="284.1" height="4.6" fill="url(#o123)"/><rect x="156.8" y="603" width="271.4" height="4.6" fill="url(#o124)"/><rect x="158.7" y="607" width="258.6" height="4.6" fill="url(#o125)"/><rect x="160.6" y="611" width="245.8" height="4.6" fill="url(#o126)"/><rect x="162.6" y="615" width="232.9" height="4.6" fill="url(#o127)"/><rect x="164.7" y="619" width="220.0" height="4.6" fill="url(#o128)"/><rect x="166.8" y="623" width="207.0" height="4.6" fill="url(#o129)"/><rect x="169.0" y="627" width="193.9" height="4.6" fill="url(#o130)"/><rect x="171.4" y="631" width="180.7" height="4.6" fill="url(#o131)"/><rect x="173.8" y="635" width="167.4" height="4.6" fill="url(#o132)"/><rect x="176.5" y="639" width="153.9" height="4.6" fill="url(#o133)"/><rect x="179.2" y="643" width="140.2" height="4.6" fill="url(#o134)"/><rect x="182.0" y="647" width="126.6" height="4.6" fill="url(#o135)"/><rect x="184.9" y="651" width="112.9" height="4.6" fill="url(#o136)"/><rect x="187.8" y="655" width="99.1" height="4.6" fill="url(#o137)"/><rect x="190.8" y="659" width="85.2" height="4.6" fill="url(#o138)"/><rect x="193.9" y="663" width="71.2" height="4.6" fill="url(#o139)"/><rect x="196.8" y="667" width="57.4" height="4.6" fill="url(#o140)"/><rect x="200.0" y="671" width="43.4" height="4.6" fill="url(#o141)"/><rect x="205.3" y="675" width="27.2" height="4.6" fill="url(#o142)"/></g>
<clipPath id="cu"><path d="M0 0H637.7V461.1L207.5 647.6L100 693H0Z"/></clipPath>
<clipPath id="cd"><path d="M810 754V0H637.7V461.1L207.5 647.6L100 693V754Z"/></clipPath>
<g clip-path="url(#cl)"><g clip-path="url(#cu)"><path d="M75.5 32V724M163.5 32V724M251.5 32V724M339.5 32V724M426.5 32V724M514.5 32V724M602.5 32V724M690.5 32V724M9 620.5H801M9 550.5H801M9 481.5H801M9 412.5H801M9 343.5H801M9 274.5H801M9 205.5H801M9 136.5H801M9 67.5H801" stroke="#001a10" stroke-opacity="0.6" stroke-width="1" fill="none"/></g><g clip-path="url(#cd)"><path d="M75.5 32V724M163.5 32V724M251.5 32V724M339.5 32V724M426.5 32V724M514.5 32V724M602.5 32V724M690.5 32V724M9 620.5H801M9 550.5H801M9 481.5H801M9 412.5H801M9 343.5H801M9 274.5H801M9 205.5H801M9 136.5H801M9 67.5H801" stroke="#100010" stroke-opacity="0.16" stroke-width="1" fill="none"/></g></g>
<path d="M215.7 678.0 L214.9 677.7 L213.8 677.3 L212.5 676.8 L211.0 676.2 L209.5 675.6 L207.9 674.8 L206.5 674.0 L205.2 673.1 L204.1 672.1 L203.0 671.0 L202.0 669.8 L201.0 668.5 L199.9 667.2 L198.9 665.7 L197.7 664.1 L196.5 662.5 L195.1 660.7 L193.7 658.8 L192.2 656.8 L190.6 654.7 L189.0 652.6 L187.4 650.4 L185.8 648.2 L184.3 646.0 L182.8 643.9 L181.4 641.8 L179.9 639.7 L178.5 637.6 L177.1 635.4 L175.6 633.1 L174.1 630.6 L172.6 628.0 L171.0 625.2 L169.5 622.4 L167.9 619.4 L166.3 616.3 L164.6 613.1 L163.0 609.8 L161.3 606.3 L159.6 602.6 L157.8 598.6 L155.9 594.3 L154.0 589.8 L152.0 585.2 L150.1 580.6 L148.2 576.1 L146.5 571.9 L145.0 568.0 L143.7 564.6 L142.6 561.6 L141.7 558.8 L140.8 556.1 L140.0 553.5 L139.1 550.7 L138.1 547.7 L137.0 544.3 L135.7 540.6 L134.3 536.6 L132.8 532.5 L131.3 528.2 L129.7 523.7 L128.2 519.2 L126.6 514.5 L125.0 509.8 L123.4 504.8 L121.7 499.4 L119.9 493.9 L118.2 488.2 L116.5 482.7 L114.9 477.3 L113.3 472.4 L112.0 468.0 L110.8 464.2 L109.9 461.0 L109.0 458.2 L108.2 455.5 L107.5 453.0 L106.7 450.4 L105.9 447.6 L105.0 444.5 L104.0 441.0 L103.0 437.4 L101.9 433.7 L100.8 429.9 L99.7 425.9 L98.6 422.0 L97.5 418.0 L96.5 414.0 L95.5 410.0 L94.5 406.0 L93.5 401.9 L92.5 397.8 L91.6 393.7 L90.7 389.5 L89.8 385.2 L89.0 380.8 L88.2 376.3 L87.5 371.7 L86.8 366.9 L86.2 362.2 L85.5 357.4 L84.9 352.6 L84.4 347.8 L83.8 343.1 L83.3 338.4 L82.8 333.5 L82.3 328.6 L81.8 323.8 L81.4 319.1 L81.0 314.6 L80.6 310.3 L80.3 306.5 L80.0 303.2 L79.8 300.4 L79.5 298.0 L79.3 295.7 L79.2 293.5 L79.0 291.0 L78.9 288.3 L78.8 285.0 L78.7 281.3 L78.6 277.2 L78.5 273.0 L78.5 268.5 L78.4 263.8 L78.5 259.0 L78.5 254.0 L78.6 249.0 L78.7 243.7 L78.9 237.9 L79.2 232.0 L79.4 225.9 L79.7 219.9 L80.0 214.2 L80.4 208.8 L80.7 204.0 L81.0 199.7 L81.4 195.9 L81.8 192.4 L82.2 189.1 L82.6 186.0 L83.0 183.1 L83.5 180.3 L83.9 177.5 L84.3 174.8 L84.7 172.4 L85.1 170.1 L85.5 167.9 L86.0 165.8 L86.5 163.6 L87.1 161.4 L87.9 159.0 L88.8 156.4 L89.8 153.7 L90.9 150.9 L92.0 148.1 L93.2 145.3 L94.5 142.6 L95.8 140.1 L97.1 137.7 L98.4 135.5 L99.8 133.4 L101.2 131.5 L102.7 129.6 L104.2 127.8 L105.8 126.1 L107.4 124.5 L109.0 123.0 L110.7 121.6 L112.5 120.2 L114.3 119.0 L116.1 117.8 L118.0 116.8 L119.9 115.7 L121.8 114.8 L123.7 113.9 L125.6 113.1 L127.7 112.3 L129.7 111.6 L131.7 110.9 L133.8 110.4 L135.8 109.9 L137.7 109.4 L139.6 109.0 L141.4 108.7 L143.1 108.4 L144.7 108.3 L146.4 108.1 L148.0 108.1 L149.6 108.0 L151.2 108.0 L152.8 108.0 L154.4 108.0 L156.0 108.0 L157.6 108.1 L159.2 108.2 L160.8 108.3 L162.5 108.5 L164.2 108.7 L166.0 109.0 L167.8 109.3 L169.6 109.7 L171.3 110.1 L173.2 110.5 L175.1 111.0 L177.2 111.7 L179.5 112.4 L182.0 113.3 L184.8 114.4 L187.9 115.6 L191.3 117.0 L194.8 118.4 L198.3 120.0 L201.8 121.5 L205.2 123.0 L208.5 124.5 L211.6 125.9 L214.6 127.2 L217.5 128.6 L220.4 129.9 L223.3 131.3 L226.2 132.8 L229.3 134.3 L232.4 136.0 L235.7 137.8 L239.0 139.7 L242.4 141.7 L245.9 143.7 L249.4 145.8 L252.9 148.0 L256.5 150.1 L260.0 152.3 L263.4 154.4 L266.7 156.3 L269.9 158.2 L273.2 160.1 L276.6 162.3 L280.3 164.6 L284.4 167.3 L289.0 170.4 L294.0 173.9 L299.3 177.6 L304.9 181.6 L310.8 185.9 L317.1 190.5 L323.7 195.4 L330.6 200.5 L338.0 206.0 L346.2 212.1 L355.3 219.1 L365.1 226.5 L375.1 234.1 L384.9 241.6 L394.2 248.8 L402.7 255.2 L409.8 260.6 L415.4 264.8 L419.7 267.9 L423.1 270.4 L426.0 272.4 L428.7 274.4 L431.7 276.6 L435.3 279.4 L440.0 283.0 L445.7 287.5 L451.9 292.5 L458.6 298.0 L465.7 303.8 L473.0 309.8 L480.4 315.8 L487.8 321.8 L495.0 327.6 L502.3 333.4 L509.7 339.2 L517.3 345.2 L524.9 351.1 L532.5 357.0 L539.9 362.9 L547.1 368.5 L554.0 374.0 L560.8 379.4 L567.6 385.0 L574.3 390.5 L580.8 395.8 L587.0 400.9 L592.8 405.6 L598.0 409.8 L602.5 413.4 L606.0 416.1 L608.4 417.8 L610.0 418.9 L611.3 419.7 L612.6 420.5 L614.3 421.6 L616.6 423.2 L620.0 425.8 L624.5 429.3 L629.7 433.5 L635.6 438.1 L641.8 443.1 L648.3 448.3 L654.8 453.5 L661.1 458.5 L667.0 463.2 L672.9 467.9 L679.2 472.9 L685.7 477.9 L691.9 482.8 L697.9 487.5 L703.2 491.6 L707.6 495.1 L711.0 497.8 L226.8 676.0Z" fill="none" stroke="#f4b060" stroke-width="1.5"/>
<path d="M350.5 37.6V716M14.3 462.5H792" stroke="#ffffff" stroke-opacity="0.85" stroke-width="1.1" stroke-dasharray="3.6 2.8" fill="none"/>
<g clip-path="url(#ct)"><rect x="337.3" y="273" width="6.9" height="4.6" fill="url(#i0)"/><rect x="335.9" y="277" width="14.7" height="4.6" fill="url(#i1)"/><rect x="334.5" y="281" width="22.5" height="4.6" fill="url(#i2)"/><rect x="333.1" y="285" width="30.3" height="4.6" fill="url(#i3)"/><rect x="331.7" y="289" width="38.1" height="4.6" fill="url(#i4)"/><rect x="330.3" y="293" width="45.9" height="4.6" fill="url(#i5)"/><rect x="328.8" y="297" width="53.8" height="4.6" fill="url(#i6)"/><rect x="327.4" y="301" width="61.6" height="4.6" fill="url(#i7)"/><rect x="326.0" y="305" width="69.4" height="4.6" fill="url(#i8)"/><rect x="324.6" y="309" width="77.2" height="4.6" fill="url(#i9)"/><rect x="323.2" y="313" width="85.0" height="4.6" fill="url(#i10)"/><rect x="321.8" y="317" width="92.8" height="4.6" fill="url(#i11)"/><rect x="320.4" y="321" width="100.6" height="4.6" fill="url(#i12)"/><rect x="319.0" y="325" width="108.4" height="4.6" fill="url(#i13)"/><rect x="317.6" y="329" width="116.3" height="4.6" fill="url(#i14)"/><rect x="316.1" y="333" width="124.1" height="4.6" fill="url(#i15)"/><rect x="314.7" y="337" width="131.9" height="4.6" fill="url(#i16)"/><rect x="313.3" y="341" width="139.7" height="4.6" fill="url(#i17)"/><rect x="311.9" y="345" width="147.5" height="4.6" fill="url(#i18)"/><rect x="310.5" y="349" width="155.3" height="4.6" fill="url(#i19)"/><rect x="309.1" y="353" width="163.1" height="4.6" fill="url(#i20)"/><rect x="307.7" y="357" width="170.9" height="4.6" fill="url(#i21)"/><rect x="306.3" y="361" width="178.7" height="4.6" fill="url(#i22)"/><rect x="304.8" y="365" width="186.6" height="4.6" fill="url(#i23)"/><rect x="303.4" y="369" width="194.4" height="4.6" fill="url(#i24)"/><rect x="302.0" y="373" width="202.2" height="4.6" fill="url(#i25)"/><rect x="300.6" y="377" width="210.0" height="4.6" fill="url(#i26)"/><rect x="299.2" y="381" width="217.8" height="4.6" fill="url(#i27)"/><rect x="297.8" y="385" width="225.6" height="4.6" fill="url(#i28)"/><rect x="296.4" y="389" width="233.4" height="4.6" fill="url(#i29)"/><rect x="295.0" y="393" width="241.2" height="4.6" fill="url(#i30)"/><rect x="293.6" y="397" width="249.1" height="4.6" fill="url(#i31)"/><rect x="292.1" y="401" width="256.9" height="4.6" fill="url(#i32)"/><rect x="290.7" y="405" width="264.7" height="4.6" fill="url(#i33)"/><rect x="289.3" y="409" width="272.5" height="4.6" fill="url(#i34)"/><rect x="287.9" y="413" width="280.3" height="4.6" fill="url(#i35)"/><rect x="286.5" y="417" width="288.1" height="4.6" fill="url(#i36)"/><rect x="285.1" y="421" width="295.9" height="4.6" fill="url(#i37)"/><rect x="283.7" y="425" width="303.7" height="4.6" fill="url(#i38)"/><rect x="282.3" y="429" width="311.5" height="4.6" fill="url(#i39)"/><rect x="280.8" y="433" width="319.4" height="4.6" fill="url(#i40)"/><rect x="279.4" y="437" width="327.2" height="4.6" fill="url(#i41)"/><rect x="278.0" y="441" width="335.0" height="4.6" fill="url(#i42)"/><rect x="276.6" y="445" width="342.8" height="4.6" fill="url(#i43)"/><rect x="275.2" y="449" width="350.6" height="4.6" fill="url(#i44)"/><rect x="273.8" y="453" width="358.4" height="4.6" fill="url(#i45)"/><rect x="272.4" y="457" width="366.2" height="4.6" fill="url(#i46)"/><rect x="271.0" y="461" width="367.6" height="4.6" fill="url(#i47)"/><rect x="269.6" y="465" width="360.1" height="4.6" fill="url(#i48)"/><rect x="268.1" y="469" width="352.3" height="4.6" fill="url(#i49)"/><rect x="266.7" y="473" width="344.5" height="4.6" fill="url(#i50)"/><rect x="265.3" y="477" width="336.7" height="4.6" fill="url(#i51)"/><rect x="263.9" y="481" width="328.9" height="4.6" fill="url(#i52)"/><rect x="262.5" y="485" width="321.0" height="4.6" fill="url(#i53)"/><rect x="261.1" y="489" width="313.2" height="4.6" fill="url(#i54)"/><rect x="259.7" y="493" width="305.4" height="4.6" fill="url(#i55)"/><rect x="258.3" y="497" width="297.6" height="4.6" fill="url(#i56)"/><rect x="256.8" y="501" width="289.8" height="4.6" fill="url(#i57)"/><rect x="255.4" y="505" width="282.0" height="4.6" fill="url(#i58)"/><rect x="254.0" y="509" width="274.2" height="4.6" fill="url(#i59)"/><rect x="252.6" y="513" width="266.4" height="4.6" fill="url(#i60)"/><rect x="251.2" y="517" width="258.6" height="4.6" fill="url(#i61)"/><rect x="249.8" y="521" width="250.7" height="4.6" fill="url(#i62)"/><rect x="248.4" y="525" width="242.9" height="4.6" fill="url(#i63)"/><rect x="247.0" y="529" width="235.1" height="4.6" fill="url(#i64)"/><rect x="245.6" y="533" width="227.3" height="4.6" fill="url(#i65)"/><rect x="244.1" y="537" width="219.5" height="4.6" fill="url(#i66)"/><rect x="242.7" y="541" width="211.7" height="4.6" fill="url(#i67)"/><rect x="241.3" y="545" width="203.9" height="4.6" fill="url(#i68)"/><rect x="239.9" y="549" width="196.1" height="4.6" fill="url(#i69)"/><rect x="238.5" y="553" width="188.2" height="4.6" fill="url(#i70)"/><rect x="237.1" y="557" width="180.4" height="4.6" fill="url(#i71)"/><rect x="235.7" y="561" width="172.6" height="4.6" fill="url(#i72)"/><rect x="234.3" y="565" width="164.8" height="4.6" fill="url(#i73)"/><rect x="232.8" y="569" width="157.0" height="4.6" fill="url(#i74)"/><rect x="231.4" y="573" width="149.2" height="4.6" fill="url(#i75)"/><rect x="230.0" y="577" width="141.4" height="4.6" fill="url(#i76)"/><rect x="228.6" y="581" width="133.6" height="4.6" fill="url(#i77)"/><rect x="227.2" y="585" width="125.7" height="4.6" fill="url(#i78)"/><rect x="225.8" y="589" width="117.9" height="4.6" fill="url(#i79)"/><rect x="224.4" y="593" width="110.1" height="4.6" fill="url(#i80)"/><rect x="223.0" y="597" width="102.3" height="4.6" fill="url(#i81)"/><rect x="221.5" y="601" width="94.5" height="4.6" fill="url(#i82)"/><rect x="220.1" y="605" width="86.7" height="4.6" fill="url(#i83)"/><rect x="218.7" y="609" width="78.9" height="4.6" fill="url(#i84)"/><rect x="217.3" y="613" width="71.1" height="4.6" fill="url(#i85)"/><rect x="215.9" y="617" width="63.3" height="4.6" fill="url(#i86)"/><rect x="214.5" y="621" width="55.4" height="4.6" fill="url(#i87)"/><rect x="213.1" y="625" width="47.6" height="4.6" fill="url(#i88)"/><rect x="211.7" y="629" width="39.8" height="4.6" fill="url(#i89)"/><rect x="210.3" y="633" width="32.0" height="4.6" fill="url(#i90)"/><rect x="208.8" y="637" width="24.2" height="4.6" fill="url(#i91)"/><rect x="207.4" y="641" width="16.4" height="4.6" fill="url(#i92)"/><rect x="206.7" y="645" width="7.9" height="4.6" fill="url(#i93)"/><path d="M75.5 32V724M163.5 32V724M251.5 32V724M339.5 32V724M426.5 32V724M514.5 32V724M602.5 32V724M690.5 32V724M9 620.5H801M9 550.5H801M9 481.5H801M9 412.5H801M9 343.5H801M9 274.5H801M9 205.5H801M9 136.5H801M9 67.5H801" stroke="#000" stroke-opacity="0.06" stroke-width="1" fill="none"/><path d="M350.5 37.6V716M14.3 462.5H792" stroke="#ffffff" stroke-opacity="0.24" stroke-width="1.1" stroke-dasharray="3.6 2.8" fill="none"/></g>
<path d="M158.3 106.9L174.6 79.8" stroke="#c8c8c8" stroke-width="1" fill="none"/>
<text x="175.1" y="87.6" font-family="Liberation Serif, serif" font-size="15" fill="#e0e0e0" textLength="34" lengthAdjust="spacingAndGlyphs">520 nm</text>
<path d="M289.0 170.4L305.0 143.3" stroke="#c8c8c8" stroke-width="1" fill="none"/>
<text x="305.5" y="151.1" font-family="Liberation Serif, serif" font-size="15" fill="#e0e0e0" textLength="34" lengthAdjust="spacingAndGlyphs">540 nm</text>
<path d="M409.8 260.6L425.7 232.7" stroke="#c8c8c8" stroke-width="1" fill="none"/>
<text x="426.2" y="240.5" font-family="Liberation Serif, serif" font-size="15" fill="#e0e0e0" textLength="34" lengthAdjust="spacingAndGlyphs">560 nm</text>
<path d="M495.0 327.6L511.5 299.8" stroke="#c8c8c8" stroke-width="1" fill="none"/>
<text x="512.0" y="307.6" font-family="Liberation Serif, serif" font-size="15" fill="#e0e0e0" textLength="34" lengthAdjust="spacingAndGlyphs">580 nm</text>
<path d="M554.0 374.0L569.9 345.4" stroke="#c8c8c8" stroke-width="1" fill="none"/>
<text x="570.4" y="353.2" font-family="Liberation Serif, serif" font-size="15" fill="#e0e0e0" textLength="34" lengthAdjust="spacingAndGlyphs">600 nm</text>
<path d="M609.0 415.7L626.0 388.5" stroke="#c8c8c8" stroke-width="1" fill="none"/>
<text x="626.5" y="396.3" font-family="Liberation Serif, serif" font-size="15" fill="#e0e0e0" textLength="34" lengthAdjust="spacingAndGlyphs">620 nm</text>
<path d="M670.0 462.0L685.6 435.2" stroke="#c8c8c8" stroke-width="1" fill="none"/>
<text x="686.1" y="443.0" font-family="Liberation Serif, serif" font-size="15" fill="#e0e0e0" textLength="34" lengthAdjust="spacingAndGlyphs">640 nm</text>
<path d="M694.6 485.7L712.8 455.4" stroke="#c8c8c8" stroke-width="1" fill="none"/>
<text x="713.3" y="463.2" font-family="Liberation Serif, serif" font-size="15" fill="#e0e0e0" textLength="34" lengthAdjust="spacingAndGlyphs">660 nm</text>
<path d="M707.6 496.0L723.0 465.0" stroke="#c8c8c8" stroke-width="1" fill="none"/>
<text x="723.5" y="472.8" font-family="Liberation Serif, serif" font-size="15" fill="#e0e0e0" textLength="34" lengthAdjust="spacingAndGlyphs">680 nm</text>
<path d="M79.8 281.0L63.1 286.5" stroke="#c8c8c8" stroke-width="1" fill="none"/>
<text x="34.6" y="299.3" font-family="Liberation Serif, serif" font-size="15" fill="#e0e0e0" textLength="34" lengthAdjust="spacingAndGlyphs">500 nm</text>
<path d="M144.6 567.9L129.4 574.0" stroke="#c8c8c8" stroke-width="1" fill="none"/>
<text x="100.9" y="586.8" font-family="Liberation Serif, serif" font-size="15" fill="#e0e0e0" textLength="34" lengthAdjust="spacingAndGlyphs">480 nm</text>
<path d="M183.8 645.6L169.0 651.4" stroke="#c8c8c8" stroke-width="1" fill="none"/>
<text x="140.5" y="664.2" font-family="Liberation Serif, serif" font-size="15" fill="#e0e0e0" textLength="34" lengthAdjust="spacingAndGlyphs">460 nm</text>
<path d="M196.3 663.9L181.7 670.0" stroke="#c8c8c8" stroke-width="1" fill="none"/>
<text x="153.2" y="682.8" font-family="Liberation Serif, serif" font-size="15" fill="#e0e0e0" textLength="34" lengthAdjust="spacingAndGlyphs">440 nm</text>
<path d="M205.2 673.1L189.8 679.0" stroke="#c8c8c8" stroke-width="1" fill="none"/>
<text x="161.3" y="691.8" font-family="Liberation Serif, serif" font-size="15" fill="#e0e0e0" textLength="34" lengthAdjust="spacingAndGlyphs">420 nm</text>
<text x="165.1" y="719.5" font-family="Liberation Serif, serif" font-size="13.5" fill="#e6e6e6">0.1</text>
<text x="252.9" y="719.5" font-family="Liberation Serif, serif" font-size="13.5" fill="#e6e6e6">0.2</text>
<text x="340.7" y="719.5" font-family="Liberation Serif, serif" font-size="13.5" fill="#e6e6e6">0.3</text>
<text x="428.5" y="719.5" font-family="Liberation Serif, serif" font-size="13.5" fill="#e6e6e6">0.4</text>
<text x="516.3" y="719.5" font-family="Liberation Serif, serif" font-size="13.5" fill="#e6e6e6">0.5</text>
<text x="604.1" y="719.5" font-family="Liberation Serif, serif" font-size="13.5" fill="#e6e6e6">0.6</text>
<text x="691.9" y="719.5" font-family="Liberation Serif, serif" font-size="13.5" fill="#e6e6e6">0.7</text>
<text x="12.4" y="615.4" font-family="Liberation Serif, serif" font-size="13.5" fill="#e6e6e6">0.1</text>
<text x="12.4" y="546.3" font-family="Liberation Serif, serif" font-size="13.5" fill="#e6e6e6">0.2</text>
<text x="12.4" y="477.2" font-family="Liberation Serif, serif" font-size="13.5" fill="#e6e6e6">0.3</text>
<text x="12.4" y="408.1" font-family="Liberation Serif, serif" font-size="13.5" fill="#e6e6e6">0.4</text>
<text x="12.4" y="339.0" font-family="Liberation Serif, serif" font-size="13.5" fill="#e6e6e6">0.5</text>
<text x="12.4" y="269.9" font-family="Liberation Serif, serif" font-size="13.5" fill="#e6e6e6">0.6</text>
<text x="12.4" y="200.8" font-family="Liberation Serif, serif" font-size="13.5" fill="#e6e6e6">0.7</text>
<text x="12.4" y="131.7" font-family="Liberation Serif, serif" font-size="13.5" fill="#e6e6e6">0.8</text>
<text x="635.4" y="662.5" font-family="Liberation Sans, sans-serif" font-weight="bold" font-size="16" fill="#474a4a">hcfr.sourceforge.net</text>
<path d="M339.2 274.5 L637.7 461.1 L207.5 647.6Z" fill="none" stroke="#000" stroke-opacity="0.66" stroke-width="2.7" stroke-linejoin="round"/>
<path d="M333.3 271.0L341.6 591.0" stroke="#000" stroke-opacity="0.62" stroke-width="1" stroke-dasharray="3.5 2.9" fill="none"/>
<path d="M632.1 464.1L268.4 472.0" stroke="#000" stroke-opacity="0.62" stroke-width="1" stroke-dasharray="3.5 2.9" fill="none"/>
<path d="M210.3 650.3L436.0 335.6" stroke="#000" stroke-opacity="0.62" stroke-width="1" stroke-dasharray="3.5 2.9" fill="none"/>
<path d="M333.3 271.0 L436.0 335.6 L632.1 464.1 L341.6 591.0 L210.3 650.3 L268.4 472.0Z" fill="none" stroke="#fff" stroke-width="2.7" stroke-linejoin="round"/>
<path d="M294.0 520.2 L295.0 519.0 L296.3 517.5 L297.8 515.6 L299.6 513.5 L301.3 511.5 L303.0 509.5 L304.7 507.6 L306.4 505.7 L308.1 503.8 L309.9 501.9 L311.7 499.9 L313.5 498.0 L315.3 496.1 L317.1 494.3 L319.0 492.5 L320.9 490.6 L322.8 488.6 L324.9 486.4 L327.1 483.9 L329.5 481.0 L331.9 478.0 L334.3 475.1 L336.6 472.4 L338.8 470.1 L340.7 468.3 L342.3 466.9 L343.9 465.7 L345.5 464.6 L347.3 463.4 L349.6 461.9 L352.4 460.1 L355.7 458.0 L359.2 455.8 L362.7 453.6 L366.0 451.7 L368.9 450.1 L371.3 449.0 L373.4 448.3 L375.3 447.8 L377.2 447.3 L379.1 446.6 L381.2 445.6 L383.5 444.2 L386.0 442.5 L388.5 440.7 L391.0 438.7 L393.5 436.8 L396.0 435.0 L398.4 433.3 L400.7 431.6 L403.0 429.9 L405.4 428.2 L407.9 426.6 L410.6 424.9 L413.6 423.2 L416.8 421.5 L420.2 419.7 L423.5 418.0 L426.9 416.5 L430.0 415.0 L433.0 413.7 L436.0 412.4 L438.8 411.3 L441.6 410.3 L444.4 409.3 L447.0 408.5 L449.6 407.8 L452.1 407.2 L454.6 406.7 L457.0 406.3 L459.1 405.9 L461.0 405.6 L462.5 405.4 L463.7 405.3 L464.6 405.3 L465.5 405.3 L466.6 405.2 L468.0 405.0 L469.8 404.6 L471.9 404.0 L474.1 403.4 L476.3 402.8 L478.4 402.2 L480.3 401.8 L482.0 401.5 L483.6 401.3 L485.1 401.1 L486.4 401.0 L487.5 400.9 L488.3 400.8" fill="none" stroke="#111" stroke-width="1.25"/>
<defs><radialGradient id="gr" cx="0.38" cy="0.35" r="0.7"><stop offset="0" stop-color="#ff5a4a"/><stop offset="1" stop-color="#c01010"/></radialGradient><radialGradient id="gg" cx="0.38" cy="0.35" r="0.7"><stop offset="0" stop-color="#50e850"/><stop offset="1" stop-color="#109818"/></radialGradient><radialGradient id="gb" cx="0.38" cy="0.35" r="0.7"><stop offset="0" stop-color="#5a5aff"/><stop offset="1" stop-color="#1818c0"/></radialGradient><radialGradient id="gy" cx="0.38" cy="0.35" r="0.7"><stop offset="0" stop-color="#ffffe8"/><stop offset="1" stop-color="#d8d878"/></radialGradient><radialGradient id="gc" cx="0.38" cy="0.35" r="0.7"><stop offset="0" stop-color="#f0fffc"/><stop offset="1" stop-color="#88d8cc"/></radialGradient><radialGradient id="gm" cx="0.38" cy="0.35" r="0.7"><stop offset="0" stop-color="#f070f0"/><stop offset="1" stop-color="#b020b0"/></radialGradient></defs>
<circle cx="632.1" cy="464.1" r="4.8" fill="url(#gr)" stroke="#8a1010" stroke-width="1.2"/>
<circle cx="333.3" cy="271.0" r="4.8" fill="url(#gg)" stroke="#0c7010" stroke-width="1.2"/>
<circle cx="210.3" cy="650.3" r="4.6" fill="url(#gb)" stroke="#181890" stroke-width="1.2"/>
<circle cx="436.0" cy="335.6" r="5.6" fill="url(#gy)" stroke="#606020" stroke-width="1.3"/><circle cx="436.0" cy="335.6" r="0.8" fill="#111"/>
<circle cx="268.4" cy="472.0" r="5.6" fill="url(#gc)" stroke="#206058" stroke-width="1.3"/><circle cx="268.4" cy="472.0" r="0.8" fill="#111"/>
<circle cx="341.6" cy="591.0" r="4.8" fill="url(#gm)" stroke="#802080" stroke-width="1.2"/>
<path d="M638.0 454.8l3.8 3.8l-3.8 3.8l-3.8 -3.8z" fill="#f0b8a8" stroke="#5a1a10" stroke-width="1"/><path d="M636.0 458.5h5M638.5 456.0v5" stroke="#111" stroke-width="1"/>
<path d="M340.6 272.0l3.8 3.8l-3.8 3.8l-3.8 -3.8z" fill="#48b030" stroke="#1c4a14" stroke-width="1"/>
<path d="M204.8 641.7l3.8 3.8l-3.8 3.8l-3.8 -3.8z" fill="#5050e8" stroke="#202080" stroke-width="1"/>
<path d="M443.2 334.6l4.8 4.8l-4.8 4.8l-4.8 -4.8z" fill="#f4f4c0" stroke="#333" stroke-width="1"/><path d="M441.0 339.5h5M443.5 337.0v5" stroke="#111" stroke-width="1"/>
<path d="M272.5 456.2l4.8 4.8l-4.8 4.8l-4.8 -4.8z" fill="#b8f0e8" stroke="#205048" stroke-width="1"/><path d="M270.0 461.5h5M272.5 459.0v5" stroke="#111" stroke-width="1"/>
<path d="M356.2 576.7l4.8 4.8l-4.8 4.8l-4.8 -4.8z" fill="#e8a0e8" stroke="#602060" stroke-width="1"/><path d="M354.0 581.5h5M356.5 579.0v5" stroke="#111" stroke-width="1"/>
<circle cx="368.9" cy="450.1" r="2.8" fill="#fff" stroke="#111" stroke-width="1.1"/>
<circle cx="410.6" cy="424.9" r="2.8" fill="#fff" stroke="#111" stroke-width="1.1"/>
<circle cx="461.0" cy="405.6" r="2.8" fill="#fff" stroke="#111" stroke-width="1.1"/>
<circle cx="480.3" cy="401.8" r="2.8" fill="#fff" stroke="#111" stroke-width="1.1"/>
<circle cx="324.9" cy="486.4" r="5.0" fill="#fff" stroke="#222" stroke-width="1.3"/>
<circle cx="348.1" cy="469.6" r="2.8" fill="#30c040" stroke="#107020" stroke-width="1.0"/>
<circle cx="349.6" cy="461.9" r="2.8" fill="#30c040" stroke="#107020" stroke-width="1.0"/>
<circle cx="381.2" cy="445.9" r="2.8" fill="#30c040" stroke="#107020" stroke-width="1.0"/>
<circle cx="468.0" cy="407.0" r="2.8" fill="#30c040" stroke="#107020" stroke-width="1.0"/>
<circle cx="335.5" cy="472.0" r="4.5" fill="#777" stroke="#222" stroke-width="1.0"/>
<circle cx="338.7" cy="470.1" r="4.6" fill="#f0e020" stroke="#111" stroke-width="1.8"/>
<text x="319.7" y="461.2" font-family="Liberation Serif, serif" font-size="12.5" fill="#2a2218" textLength="23.3" lengthAdjust="spacingAndGlyphs">D65</text>
<text x="297.5" y="479.3" font-family="Liberation Serif, serif" font-size="12.5" fill="#2a2218" textLength="26.5" lengthAdjust="spacingAndGlyphs">9300</text>
<text x="339.7" y="443.7" font-family="Liberation Serif, serif" font-size="12.5" fill="#2a2218" textLength="26.2" lengthAdjust="spacingAndGlyphs">5500</text>
<text x="381.5" y="418.0" font-family="Liberation Serif, serif" font-size="12.5" fill="#2a2218" textLength="26.5" lengthAdjust="spacingAndGlyphs">4000</text>
<text x="434.5" y="399.0" font-family="Liberation Serif, serif" font-size="12.5" fill="#2a2218" textLength="26.5" lengthAdjust="spacingAndGlyphs">3000</text>
<text x="478.5" y="395.5" font-family="Liberation Serif, serif" font-size="12.5" fill="#2a2218" textLength="26.5" lengthAdjust="spacingAndGlyphs">2700</text>
<text x="466.5" y="423.0" font-family="Liberation Serif, serif" font-size="12.5" fill="#2a2218" textLength="8.5" lengthAdjust="spacingAndGlyphs">A</text>
<text x="386.5" y="461.0" font-family="Liberation Serif, serif" font-size="12.5" fill="#2a2218" textLength="8.0" lengthAdjust="spacingAndGlyphs">B</text>
<text x="352.5" y="488.0" font-family="Liberation Serif, serif" font-size="12.5" fill="#2a2218" textLength="8.0" lengthAdjust="spacingAndGlyphs">C</text>
</svg>
<div class="sb" style="left:9px"><svg width="15" height="15"><path d="M3.5 3.5l8 8M11.5 3.5l-8 8" stroke="#000" stroke-width="1.5"/></svg></div>
<div class="sb" style="left:26px"><svg width="15" height="15"><path d="M9.5 3.5v8l-4.5-4z" fill="#000"/></svg></div>
<div class="sb" style="left:43px"><svg width="15" height="15"><path d="M6 3.5v8l4.5-4z" fill="#000"/></svg></div>
<svg width="810" height="754" style="position:absolute;left:0;top:0;pointer-events:none">
<path d="M426.4 726.5l8.6 18.5h69.5l9.5-18.5z" fill="#fff"/>
<g stroke="#000" stroke-width="1.3" fill="none">
<path d="M62.5 728l8.3 17M126.7 728l8.3 17M127.3 745l4.3-8M194.3 728l8.3 17M195 745l4.3-8M248.3 728l8.3 17M249 745l4.3-8M321.7 728l8.3 17M322.4 745l4.3-8M426.7 728l8.3 17M427.4 745l4.3-8M504.5 745l9.3-18"/>
</g>
<path d="M70.8 745.2H127.3M135 745.2H195M202.6 745.2H249M256.6 745.2H322.4M330 745.2H427.4" stroke="#8a8a8a" stroke-width="1"/>
<g transform="translate(633,729)"><path d="M.5 .5h13v8l-2 1.5h-9l-2-1.500z" fill="#7a4a22" stroke="#1a1208" stroke-width="1"/><rect x="3" y="2" width="7.500" height="5" fill="#d83818" stroke="#f4d870" stroke-width="1"/><circle cx="4.200" cy="11" r="2.600" fill="#6c8a34" stroke="#0c0c04" stroke-width="1"/><circle cx="10.300" cy="11" r="2.600" fill="#ecec6a" stroke="#0c0c04" stroke-width="1"/></g>
</svg>
<div class="tab" style="left:78.3px">Measures</div>
<div class="tab" style="left:141.7px">Luminance</div>
<div class="tab" style="left:207.7px">Gamma</div>
<div class="tab" style="left:262.5px">RGB Levels</div>
<div class="tab" style="left:340px">Color temperature</div>
<div class="tab" style="left:437.7px;font-weight:bold;color:#000;font-size:9.8px;letter-spacing:.4px">CIE Diagram</div>
<div id="chk"></div>
<div id="ref">Reference</div>
</body></html>
